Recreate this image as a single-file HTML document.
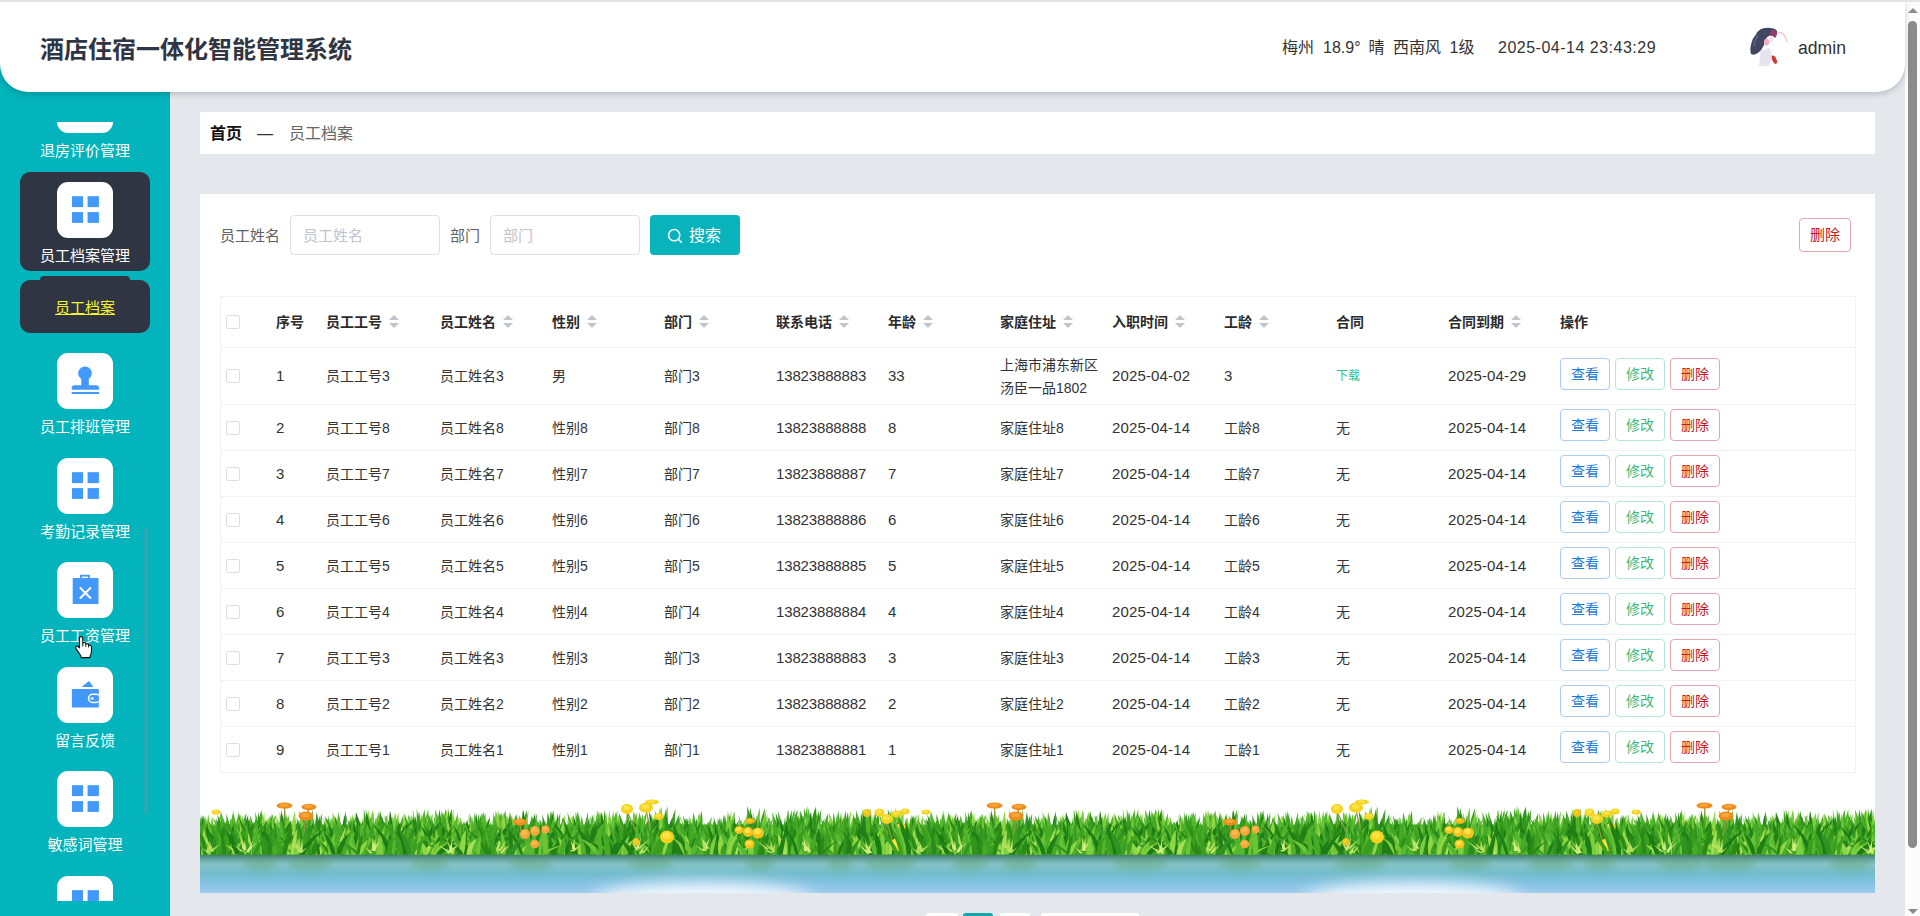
<!DOCTYPE html>
<html lang="zh-CN">
<head>
<meta charset="utf-8">
<title>酒店住宿一体化智能管理系统</title>
<style>
*{box-sizing:border-box;margin:0;padding:0}
html,body{width:1920px;height:916px;overflow:hidden}
body{position:relative;background:#e4e8ec;font-family:"Liberation Sans","Noto Sans CJK SC",sans-serif;color:#333;font-size:14px}
.abs{position:absolute}
/* top line */
#topline{left:0;top:0;width:1920px;height:2px;background:#e3e3e3;z-index:6}
/* scrollbar */
#sbar{left:1905px;top:2px;width:15px;height:914px;background:#fcfcfc}
#sbar .thumb{position:absolute;left:3px;top:19px;width:9px;height:827px;border-radius:5px;background:#8b8b8b}
#sbar .up{position:absolute;left:3px;top:6px;width:0;height:0;border-left:5px solid transparent;border-right:5px solid transparent;border-bottom:5px solid #8b8b8b}
#sbar .down{position:absolute;left:3px;top:907px;width:0;height:0;border-left:5px solid transparent;border-right:5px solid transparent;border-top:5px solid #8b8b8b}
/* header */
#header{left:0;top:2px;width:1905px;height:90px;background:#fff;border-radius:0 0 28px 28px;box-shadow:0 2px 6px rgba(0,0,0,.2);z-index:5}
#title{left:40px;top:32px;font-size:24px;font-weight:bold;color:#2f3542;line-height:32px;white-space:nowrap;letter-spacing:0}
#weather{left:0;top:35px;font-size:16px;line-height:22px;color:#333;white-space:pre}
#clock{left:1498px;top:35px;letter-spacing:.5px;font-size:16px;line-height:22px;color:#333;white-space:pre}
#uname{left:1798px;top:35px;font-size:17.6px;line-height:22px;color:#333}
#avatar{left:1746px;top:24px;width:42px;height:42px}
/* sidebar */
#side{left:0;top:0;width:170px;height:916px;background:#03b4bc;z-index:1}
#sideclip{left:0;top:122px;width:170px;height:779px;overflow:hidden}
.ibox{position:absolute;left:57px;width:56px;height:56px;border-radius:11px;background:#fff}
.ilab{position:absolute;left:0;width:170px;text-align:center;font-size:15px;line-height:20px;color:#fff;white-space:nowrap}
.dark{position:absolute;left:20px;width:130px;background:#2f3542;border-radius:10px}
#sidescroll{left:143.5px;top:527px;width:4.5px;height:288px;background:rgba(144,147,153,.3);border-radius:3px}
/* main */
#crumb{left:200px;top:112px;width:1675px;height:42px;background:#fff}
#crumb span{position:absolute;top:11px;line-height:22px;font-size:16px;white-space:nowrap}
#card{left:200px;top:194px;width:1675px;height:699px;background:#fff;overflow:hidden}
.flab{position:absolute;top:32px;font-size:15px;line-height:20px;color:#606266;white-space:nowrap}
.finp{position:absolute;top:21px;width:150px;height:40px;border:1px solid #dddfe4;border-radius:4px;background:#fff;padding-left:12px;font-size:15px;line-height:40px;color:#c0c4cc}
#sbtn{left:450px;top:21px;width:90px;height:40px;border-radius:4px;background:#08b3bb;color:#fff;font-size:16px;line-height:42px}
#delbtn{left:1599px;top:24px;width:52px;height:34px;border:1px solid #e3a6ad;border-radius:4px;color:#c5161d;font-size:15px;line-height:31px;text-align:center;background:#fff}
/* table */
#tbl{left:20px;top:102px;width:1636px;height:477px;border:1px solid #f1f2f5;border-right:1px solid #f1f2f5}
.tr{position:absolute;left:0;width:1634px;border-bottom:1px solid #f1f2f5}
.tr span{position:absolute;white-space:nowrap;font-size:14px;line-height:23px;color:#333}
.th span{font-weight:bold;color:#2b2b2b}
.cb{position:absolute;left:5px;width:14px;height:14px;border:1px solid #dcdfe6;border-radius:2px;background:#fff}
.btn{position:absolute;width:50px;height:32px;border:1px solid;border-radius:4px;font-size:14px;line-height:30px;text-align:center;background:#fff}
.b1{left:1339px;color:#1b7ad6;border-color:#a9cdf3}
.b2{left:1394px;color:#3eb87f;border-color:#b5e6de}
.b3{left:1449px;color:#c5161d;border-color:#e3a6ad}
.sort{position:absolute;width:10px;height:14px}
.sort:before,.sort:after{content:"";position:absolute;left:0;width:0;height:0;border-left:5px solid transparent;border-right:5px solid transparent}
.sort:before{top:0;border-bottom:5px solid #c0c4cc}
.sort:after{top:8px;border-top:5px solid #c0c4cc}
/* pagination */
.pg{position:absolute;top:913px;height:3px;background:#fff;border-radius:3px 3px 0 0}
</style>
</head>
<body>
<div id="topline" class="abs"></div>
<div id="sbar" class="abs"><div class="up"></div><div class="thumb"></div><div class="down"></div></div>

<div id="header" class="abs">
  <div id="title" class="abs">酒店住宿一体化智能管理系统</div>
  <div id="weather" class="abs"><span style="position:absolute;left:1282px">梅州</span><span style="position:absolute;left:1323px">18.9°</span><span style="position:absolute;left:1368.5px">晴</span><span style="position:absolute;left:1393px">西南风</span><span style="position:absolute;left:1449.5px">1级</span></div>
  <div id="clock" class="abs">2025-04-14 23:43:29</div>
  <div id="avatar" class="abs"><svg class="abs" style="left:-16px;top:-11px" width="80" height="65" viewBox="0 0 80 65"><defs><filter id="avb" x="-20%" y="-20%" width="140%" height="140%"><feGaussianBlur stdDeviation="0.6"/></filter></defs><g filter="url(#avb)" opacity="0.9"><path d="M30.5 35.5 L39.7 33 L43 42.6 L38.5 51 L29 51 Z" fill="#e4e2ee"/><path d="M30.5 14.2 Q36.9 11.8 43.3 13.5 Q47.5 15 47.2 17.5 Q46.5 21 45 22.5 Q42 20 39.7 20.6 Q36.5 22 35.5 24.8 Q35 28.5 33.4 31.2 Q31.5 35 29.1 36.9 Q26 39.5 23.4 39.7 Q20.5 39.5 20.6 37.6 Q19.8 32.5 21.3 28.4 Q22.5 23 25.6 19.9 Q27.5 16 30.5 14.2 Z" fill="#2e3152"/><path d="M41 15 Q45.5 14.5 47 17.5 Q46.5 21.5 45 23 Q43 19.5 39.8 20.4 Z" fill="#8c2c62"/><ellipse cx="36.5" cy="27.2" rx="2.6" ry="3.4" fill="#f3a4c4"/><ellipse cx="41.2" cy="24.5" rx="2.2" ry="3" fill="#fbe3ea"/><path d="M48 18 Q52 16.5 54.5 20.5 Q56 24 57 27" stroke="#f3b9cb" stroke-width="1.2" fill="none"/><path d="M28 20 Q24.5 25 24 31" stroke="#5a6690" stroke-width="1" fill="none"/><ellipse cx="44.4" cy="44.7" rx="2.1" ry="4.4" transform="rotate(-22 44.4 44.7)" fill="#c62828"/></g></svg></div>
  <div id="uname" class="abs">admin</div>
</div>

<div id="side" class="abs">
  <div id="sideclip" class="abs">
  <div class="ibox" style="top:-45px"><svg class="abs" style="left:0;top:0" width="56" height="56" viewBox="0 0 56 56"><rect x="15" y="14.2" width="11" height="10.9" fill="#4398fb"/><rect x="30.6" y="14.2" width="11.3" height="10.9" fill="#4398fb"/><rect x="15" y="30.1" width="11" height="10.8" fill="#4398fb"/><rect x="30.6" y="30.1" width="11.3" height="10.8" fill="#4398fb"/></svg></div><div class="ilab" style="top:19px">退房评价管理</div>
<div class="dark" style="top:50px;height:99px"></div>
<div class="ibox" style="top:60px"><svg class="abs" style="left:0;top:0" width="56" height="56" viewBox="0 0 56 56"><rect x="15" y="14.2" width="11" height="10.9" fill="#4398fb"/><rect x="30.6" y="14.2" width="11.3" height="10.9" fill="#4398fb"/><rect x="15" y="30.1" width="11" height="10.8" fill="#4398fb"/><rect x="30.6" y="30.1" width="11.3" height="10.8" fill="#4398fb"/></svg></div><div class="ilab" style="top:124px">员工档案管理</div>
<div class="dark" style="top:154px;left:40px;width:90px;height:12px;border-radius:4px"></div>
<div class="dark" style="top:158px;height:53px"></div>
<div class="ilab" style="top:176px;color:#f5f52a;text-decoration:underline">员工档案</div>
<div class="ibox" style="top:231px"><svg class="abs" style="left:0;top:0" width="56" height="56" viewBox="0 0 56 56"><circle cx="28" cy="20.3" r="6.8" fill="#4398fb"/><rect x="24.3" y="24" width="7.5" height="9" fill="#4398fb"/><path d="M14.7 36.7 L14.7 35.3 Q14.7 32.3 17.7 32.3 L39 32.3 Q42 32.3 42 35.3 L42 36.7 Z" fill="#4398fb"/><rect x="14.7" y="39" width="27.3" height="2" fill="#4398fb"/></svg></div>
<div class="ilab" style="top:295px">员工排班管理</div>
<div class="ibox" style="top:336px"><svg class="abs" style="left:0;top:0" width="56" height="56" viewBox="0 0 56 56"><rect x="15" y="14.2" width="11" height="10.9" fill="#4398fb"/><rect x="30.6" y="14.2" width="11.3" height="10.9" fill="#4398fb"/><rect x="15" y="30.1" width="11" height="10.8" fill="#4398fb"/><rect x="30.6" y="30.1" width="11.3" height="10.8" fill="#4398fb"/></svg></div>
<div class="ilab" style="top:400px">考勤记录管理</div>
<div class="ibox" style="top:440px"><svg class="abs" style="left:0;top:0" width="56" height="56" viewBox="0 0 56 56"><rect x="15.7" y="16" width="25.8" height="26" fill="#4398fb"/><rect x="23" y="12.7" width="10" height="4.5" rx="0.8" fill="#4398fb"/><rect x="24.8" y="14.6" width="6.4" height="1.4" fill="#fff"/><path d="M22.9 25.5 L33.9 36.5 M33.9 25.5 L22.9 36.5" stroke="#fff" stroke-width="2" fill="none"/></svg></div>
<div class="ilab" style="top:504px">员工工资管理</div>
<div class="ibox" style="top:545px"><svg class="abs" style="left:0;top:0" width="56" height="56" viewBox="0 0 56 56"><path d="M24.5 20 L32 14 L36.5 20 Z" fill="#4398fb"/><rect x="14.9" y="22" width="27" height="18.5" fill="#4398fb"/><rect x="30.8" y="26.6" width="13" height="9.6" rx="4.8" fill="#fff"/><rect x="32.4" y="28.1" width="10" height="6.6" rx="3.3" fill="#4398fb"/><rect x="41.9" y="22" width="3" height="18.5" fill="#fff"/><ellipse cx="35.2" cy="31.4" rx="1.6" ry="1.2" fill="#fff"/></svg></div>
<div class="ilab" style="top:609px">留言反馈</div>
<div class="ibox" style="top:649px"><svg class="abs" style="left:0;top:0" width="56" height="56" viewBox="0 0 56 56"><rect x="15" y="14.2" width="11" height="10.9" fill="#4398fb"/><rect x="30.6" y="14.2" width="11.3" height="10.9" fill="#4398fb"/><rect x="15" y="30.1" width="11" height="10.8" fill="#4398fb"/><rect x="30.6" y="30.1" width="11.3" height="10.8" fill="#4398fb"/></svg></div>
<div class="ilab" style="top:713px">敏感词管理</div>
<div class="ibox" style="top:754px"><svg class="abs" style="left:0;top:0" width="56" height="56" viewBox="0 0 56 56"><rect x="15" y="14.2" width="11" height="10.9" fill="#4398fb"/><rect x="30.6" y="14.2" width="11.3" height="10.9" fill="#4398fb"/><rect x="15" y="30.1" width="11" height="10.8" fill="#4398fb"/><rect x="30.6" y="30.1" width="11.3" height="10.8" fill="#4398fb"/></svg></div>
  </div>
  <div id="sidescroll" class="abs"></div>
</div>

<div id="crumb" class="abs">
  <span style="left:10px;font-weight:bold;color:#111">首页</span>
  <span style="left:57px;color:#333">—</span>
  <span style="left:89px;color:#666">员工档案</span>
</div>

<div id="card" class="abs">
  <div class="flab" style="left:20px">员工姓名</div>
  <div class="finp" style="left:90px">员工姓名</div>
  <div class="flab" style="left:250px">部门</div>
  <div class="finp" style="left:290px">部门</div>
  <div id="sbtn" class="abs"><svg class="abs" style="left:17px;top:13px" width="16" height="16" viewBox="0 0 16 16"><circle cx="7.2" cy="7.2" r="5.6" fill="none" stroke="#fff" stroke-width="1.5"/><path d="M11.3 11.3 L14.8 14.8" stroke="#fff" stroke-width="1.6"/></svg><span style="position:absolute;left:39px;top:0">搜索</span></div>
  <div id="delbtn" class="abs">删除</div>
  <div id="tbl" class="abs">
  <div class="tr th" style="top:0;height:51px"><i class="cb" style="top:18px"></i><span style="left:55px;top:14px">序号</span><span style="left:105px;top:14px">员工工号</span><i class="sort" style="left:168px;top:18px"></i><span style="left:219px;top:14px">员工姓名</span><i class="sort" style="left:282px;top:18px"></i><span style="left:331px;top:14px">性别</span><i class="sort" style="left:366px;top:18px"></i><span style="left:443px;top:14px">部门</span><i class="sort" style="left:478px;top:18px"></i><span style="left:555px;top:14px">联系电话</span><i class="sort" style="left:618px;top:18px"></i><span style="left:667px;top:14px">年龄</span><i class="sort" style="left:702px;top:18px"></i><span style="left:779px;top:14px">家庭住址</span><i class="sort" style="left:842px;top:18px"></i><span style="left:891px;top:14px">入职时间</span><i class="sort" style="left:954px;top:18px"></i><span style="left:1003px;top:14px">工龄</span><i class="sort" style="left:1038px;top:18px"></i><span style="left:1115px;top:14px">合同</span><span style="left:1227px;top:14px">合同到期</span><i class="sort" style="left:1290px;top:18px"></i><span style="left:1339px;top:14px">操作</span></div>
<div class="tr" style="top:51px;height:57px"><i class="cb" style="top:21px"></i><span style="left:55px;top:17px;font-size:15px;letter-spacing:0;margin-top:-1px">1</span><span style="left:105px;top:17px">员工工号3</span><span style="left:219px;top:17px">员工姓名3</span><span style="left:331px;top:17px">男</span><span style="left:443px;top:17px">部门3</span><span style="left:555px;top:17px;font-size:15px;letter-spacing:-0.15px;margin-top:-1px">13823888883</span><span style="left:667px;top:17px;font-size:15px;letter-spacing:0;margin-top:-1px">33</span><span style="left:779px;top:6px;line-height:23px">上海市浦东新区<br>汤臣一品1802</span><span style="left:891px;top:17px;font-size:15px;letter-spacing:0.15px;margin-top:-1px">2025-04-02</span><span style="left:1003px;top:17px;font-size:15px;letter-spacing:0;margin-top:-1px">3</span><span style="left:1115px;top:17px;color:#2fbf98;font-size:12px">下载</span><span style="left:1227px;top:17px;font-size:15px;letter-spacing:0.15px;margin-top:-1px">2025-04-29</span><b class="btn b1" style="top:10px;font-weight:normal">查看</b><b class="btn b2" style="top:10px;font-weight:normal">修改</b><b class="btn b3" style="top:10px;font-weight:normal">删除</b></div>
<div class="tr" style="top:108px;height:46px"><i class="cb" style="top:16px"></i><span style="left:55px;top:12px;font-size:15px;letter-spacing:0;margin-top:-1px">2</span><span style="left:105px;top:12px">员工工号8</span><span style="left:219px;top:12px">员工姓名8</span><span style="left:331px;top:12px">性别8</span><span style="left:443px;top:12px">部门8</span><span style="left:555px;top:12px;font-size:15px;letter-spacing:-0.15px;margin-top:-1px">13823888888</span><span style="left:667px;top:12px;font-size:15px;letter-spacing:0;margin-top:-1px">8</span><span style="left:779px;top:12px">家庭住址8</span><span style="left:891px;top:12px;font-size:15px;letter-spacing:0.15px;margin-top:-1px">2025-04-14</span><span style="left:1003px;top:12px">工龄8</span><span style="left:1115px;top:12px">无</span><span style="left:1227px;top:12px;font-size:15px;letter-spacing:0.15px;margin-top:-1px">2025-04-14</span><b class="btn b1" style="top:4px;font-weight:normal">查看</b><b class="btn b2" style="top:4px;font-weight:normal">修改</b><b class="btn b3" style="top:4px;font-weight:normal">删除</b></div>
<div class="tr" style="top:154px;height:46px"><i class="cb" style="top:16px"></i><span style="left:55px;top:12px;font-size:15px;letter-spacing:0;margin-top:-1px">3</span><span style="left:105px;top:12px">员工工号7</span><span style="left:219px;top:12px">员工姓名7</span><span style="left:331px;top:12px">性别7</span><span style="left:443px;top:12px">部门7</span><span style="left:555px;top:12px;font-size:15px;letter-spacing:-0.15px;margin-top:-1px">13823888887</span><span style="left:667px;top:12px;font-size:15px;letter-spacing:0;margin-top:-1px">7</span><span style="left:779px;top:12px">家庭住址7</span><span style="left:891px;top:12px;font-size:15px;letter-spacing:0.15px;margin-top:-1px">2025-04-14</span><span style="left:1003px;top:12px">工龄7</span><span style="left:1115px;top:12px">无</span><span style="left:1227px;top:12px;font-size:15px;letter-spacing:0.15px;margin-top:-1px">2025-04-14</span><b class="btn b1" style="top:4px;font-weight:normal">查看</b><b class="btn b2" style="top:4px;font-weight:normal">修改</b><b class="btn b3" style="top:4px;font-weight:normal">删除</b></div>
<div class="tr" style="top:200px;height:46px"><i class="cb" style="top:16px"></i><span style="left:55px;top:12px;font-size:15px;letter-spacing:0;margin-top:-1px">4</span><span style="left:105px;top:12px">员工工号6</span><span style="left:219px;top:12px">员工姓名6</span><span style="left:331px;top:12px">性别6</span><span style="left:443px;top:12px">部门6</span><span style="left:555px;top:12px;font-size:15px;letter-spacing:-0.15px;margin-top:-1px">13823888886</span><span style="left:667px;top:12px;font-size:15px;letter-spacing:0;margin-top:-1px">6</span><span style="left:779px;top:12px">家庭住址6</span><span style="left:891px;top:12px;font-size:15px;letter-spacing:0.15px;margin-top:-1px">2025-04-14</span><span style="left:1003px;top:12px">工龄6</span><span style="left:1115px;top:12px">无</span><span style="left:1227px;top:12px;font-size:15px;letter-spacing:0.15px;margin-top:-1px">2025-04-14</span><b class="btn b1" style="top:4px;font-weight:normal">查看</b><b class="btn b2" style="top:4px;font-weight:normal">修改</b><b class="btn b3" style="top:4px;font-weight:normal">删除</b></div>
<div class="tr" style="top:246px;height:46px"><i class="cb" style="top:16px"></i><span style="left:55px;top:12px;font-size:15px;letter-spacing:0;margin-top:-1px">5</span><span style="left:105px;top:12px">员工工号5</span><span style="left:219px;top:12px">员工姓名5</span><span style="left:331px;top:12px">性别5</span><span style="left:443px;top:12px">部门5</span><span style="left:555px;top:12px;font-size:15px;letter-spacing:-0.15px;margin-top:-1px">13823888885</span><span style="left:667px;top:12px;font-size:15px;letter-spacing:0;margin-top:-1px">5</span><span style="left:779px;top:12px">家庭住址5</span><span style="left:891px;top:12px;font-size:15px;letter-spacing:0.15px;margin-top:-1px">2025-04-14</span><span style="left:1003px;top:12px">工龄5</span><span style="left:1115px;top:12px">无</span><span style="left:1227px;top:12px;font-size:15px;letter-spacing:0.15px;margin-top:-1px">2025-04-14</span><b class="btn b1" style="top:4px;font-weight:normal">查看</b><b class="btn b2" style="top:4px;font-weight:normal">修改</b><b class="btn b3" style="top:4px;font-weight:normal">删除</b></div>
<div class="tr" style="top:292px;height:46px"><i class="cb" style="top:16px"></i><span style="left:55px;top:12px;font-size:15px;letter-spacing:0;margin-top:-1px">6</span><span style="left:105px;top:12px">员工工号4</span><span style="left:219px;top:12px">员工姓名4</span><span style="left:331px;top:12px">性别4</span><span style="left:443px;top:12px">部门4</span><span style="left:555px;top:12px;font-size:15px;letter-spacing:-0.15px;margin-top:-1px">13823888884</span><span style="left:667px;top:12px;font-size:15px;letter-spacing:0;margin-top:-1px">4</span><span style="left:779px;top:12px">家庭住址4</span><span style="left:891px;top:12px;font-size:15px;letter-spacing:0.15px;margin-top:-1px">2025-04-14</span><span style="left:1003px;top:12px">工龄4</span><span style="left:1115px;top:12px">无</span><span style="left:1227px;top:12px;font-size:15px;letter-spacing:0.15px;margin-top:-1px">2025-04-14</span><b class="btn b1" style="top:4px;font-weight:normal">查看</b><b class="btn b2" style="top:4px;font-weight:normal">修改</b><b class="btn b3" style="top:4px;font-weight:normal">删除</b></div>
<div class="tr" style="top:338px;height:46px"><i class="cb" style="top:16px"></i><span style="left:55px;top:12px;font-size:15px;letter-spacing:0;margin-top:-1px">7</span><span style="left:105px;top:12px">员工工号3</span><span style="left:219px;top:12px">员工姓名3</span><span style="left:331px;top:12px">性别3</span><span style="left:443px;top:12px">部门3</span><span style="left:555px;top:12px;font-size:15px;letter-spacing:-0.15px;margin-top:-1px">13823888883</span><span style="left:667px;top:12px;font-size:15px;letter-spacing:0;margin-top:-1px">3</span><span style="left:779px;top:12px">家庭住址3</span><span style="left:891px;top:12px;font-size:15px;letter-spacing:0.15px;margin-top:-1px">2025-04-14</span><span style="left:1003px;top:12px">工龄3</span><span style="left:1115px;top:12px">无</span><span style="left:1227px;top:12px;font-size:15px;letter-spacing:0.15px;margin-top:-1px">2025-04-14</span><b class="btn b1" style="top:4px;font-weight:normal">查看</b><b class="btn b2" style="top:4px;font-weight:normal">修改</b><b class="btn b3" style="top:4px;font-weight:normal">删除</b></div>
<div class="tr" style="top:384px;height:46px"><i class="cb" style="top:16px"></i><span style="left:55px;top:12px;font-size:15px;letter-spacing:0;margin-top:-1px">8</span><span style="left:105px;top:12px">员工工号2</span><span style="left:219px;top:12px">员工姓名2</span><span style="left:331px;top:12px">性别2</span><span style="left:443px;top:12px">部门2</span><span style="left:555px;top:12px;font-size:15px;letter-spacing:-0.15px;margin-top:-1px">13823888882</span><span style="left:667px;top:12px;font-size:15px;letter-spacing:0;margin-top:-1px">2</span><span style="left:779px;top:12px">家庭住址2</span><span style="left:891px;top:12px;font-size:15px;letter-spacing:0.15px;margin-top:-1px">2025-04-14</span><span style="left:1003px;top:12px">工龄2</span><span style="left:1115px;top:12px">无</span><span style="left:1227px;top:12px;font-size:15px;letter-spacing:0.15px;margin-top:-1px">2025-04-14</span><b class="btn b1" style="top:4px;font-weight:normal">查看</b><b class="btn b2" style="top:4px;font-weight:normal">修改</b><b class="btn b3" style="top:4px;font-weight:normal">删除</b></div>
<div class="tr" style="top:430px;height:46px"><i class="cb" style="top:16px"></i><span style="left:55px;top:12px;font-size:15px;letter-spacing:0;margin-top:-1px">9</span><span style="left:105px;top:12px">员工工号1</span><span style="left:219px;top:12px">员工姓名1</span><span style="left:331px;top:12px">性别1</span><span style="left:443px;top:12px">部门1</span><span style="left:555px;top:12px;font-size:15px;letter-spacing:-0.15px;margin-top:-1px">13823888881</span><span style="left:667px;top:12px;font-size:15px;letter-spacing:0;margin-top:-1px">1</span><span style="left:779px;top:12px">家庭住址1</span><span style="left:891px;top:12px;font-size:15px;letter-spacing:0.15px;margin-top:-1px">2025-04-14</span><span style="left:1003px;top:12px">工龄1</span><span style="left:1115px;top:12px">无</span><span style="left:1227px;top:12px;font-size:15px;letter-spacing:0.15px;margin-top:-1px">2025-04-14</span><b class="btn b1" style="top:4px;font-weight:normal">查看</b><b class="btn b2" style="top:4px;font-weight:normal">修改</b><b class="btn b3" style="top:4px;font-weight:normal">删除</b></div>
  </div>
  <svg class="abs" style="left:0;top:0" width="1675" height="699" viewBox="0 0 1675 699"><defs><linearGradient id="gbase" x1="0" y1="0" x2="0" y2="1"><stop offset="0" stop-color="#4aaa28"/><stop offset="1" stop-color="#2d861a"/></linearGradient><linearGradient id="gwater" x1="0" y1="0" x2="0" y2="1"><stop offset="0" stop-color="#4d8f88"/><stop offset="0.08" stop-color="#78b6b2"/><stop offset="0.28" stop-color="#84c4c8"/><stop offset="0.5" stop-color="#72bccc"/><stop offset="0.75" stop-color="#84c2e2"/><stop offset="1" stop-color="#9ccbee"/></linearGradient><filter id="gblur" x="-2%" y="-10%" width="104%" height="120%"><feGaussianBlur stdDeviation="0.45"/></filter><filter id="wglow" x="-10%" y="-150%" width="120%" height="400%"><feGaussianBlur stdDeviation="11 8"/></filter><filter id="wblur" x="-5%" y="-50%" width="110%" height="200%"><feGaussianBlur stdDeviation="3"/></filter><g id="gtile"><rect x="0" y="630.5" width="710" height="30" fill="url(#gbase)"/><path d="M6.2 660.5Q4.7 638.3 8.3 620.1Q11.7 638.3 10.1 660.5Z" fill="#6cc436"/><path d="M15.1 660.5Q16.1 641.2 27.5 625.5Q23.1 641.2 18.9 660.5Z" fill="#8fd644"/><path d="M0.3 660.5Q-2.5 640.2 -3.0 623.7Q4.3 640.2 4.1 660.5Z" fill="#8fd644"/><path d="M-0.2 660.5Q-2.3 641.2 0.2 625.3Q5.2 641.2 3.9 660.5Z" fill="#45aa26"/><path d="M-5.3 660.5Q-9.0 638.6 -11.6 620.6Q-1.7 638.6 -1.2 660.5Z" fill="#55b830"/><path d="M2.0 660.5Q0.2 638.8 0.9 621.0Q5.4 638.8 4.9 660.5Z" fill="#6cc436"/><path d="M-9.6 660.5Q-14.0 641.8 -20.1 626.5Q-8.1 641.8 -6.4 660.5Z" fill="#6cc436"/><path d="M-5.4 660.5Q-9.3 641.0 -12.1 625.1Q-1.6 641.0 -1.1 660.5Z" fill="#55b830"/><path d="M3.6 660.5Q2.2 639.0 4.0 621.4Q7.5 639.0 6.6 660.5Z" fill="#45aa26"/><path d="M-2.0 660.5Q-4.7 640.9 -4.4 624.8Q2.6 640.9 2.1 660.5Z" fill="#7ccf3c"/><path d="M3.3 660.5Q2.1 639.2 5.9 621.7Q8.7 639.2 7.0 660.5Z" fill="#7ccf3c"/><path d="M7.0 660.5Q6.5 640.6 12.5 624.3Q12.9 640.6 10.5 660.5Z" fill="#2f9320"/><path d="M7.0 660.5Q6.5 641.2 12.8 625.4Q13.2 641.2 10.7 660.5Z" fill="#2f9320"/><path d="M-4.0 660.5Q-8.1 640.4 -11.1 624.0Q-0.3 640.4 0.3 660.5Z" fill="#237f16"/><path d="M13.5 660.5Q15.8 641.0 28.4 625.0Q20.9 641.0 16.4 660.5Z" fill="#2f9320"/><path d="M4.8 660.5Q3.7 641.0 6.3 625.0Q8.7 641.0 7.6 660.5Z" fill="#6cc436"/><path d="M1.9 660.5Q-0.1 640.7 1.1 624.6Q5.9 640.7 5.2 660.5Z" fill="#55b830"/><path d="M14.1 660.5Q14.8 641.0 22.5 625.0Q19.8 641.0 16.9 660.5Z" fill="#45aa26"/><path d="M4.0 660.5Q1.4 638.8 1.8 621.1Q8.5 638.8 8.0 660.5Z" fill="#237f16"/><path d="M2.3 660.5Q0.3 639.7 0.3 622.7Q5.6 639.7 5.3 660.5Z" fill="#3c9d1f"/><path d="M7.9 660.5Q6.3 640.9 7.9 625.0Q11.8 640.9 11.0 660.5Z" fill="#7ccf3c"/><path d="M4.0 660.5Q2.1 638.6 3.5 620.7Q8.1 638.6 7.3 660.5Z" fill="#3aa022"/><path d="M12.6 660.5Q12.3 638.0 20.9 619.6Q20.5 638.0 17.2 660.5Z" fill="#6cc436"/><path d="M7.8 660.5Q7.3 639.2 12.6 621.7Q13.2 639.2 11.1 660.5Z" fill="#8fd644"/><path d="M30.8 660.5Q28.5 640.1 30.1 623.4Q36.0 640.1 35.0 660.5Z" fill="#6cc436"/><path d="M23.0 660.5Q19.6 638.6 17.4 620.6Q26.5 638.6 26.8 660.5Z" fill="#2f9320"/><path d="M39.1 660.5Q38.7 637.3 46.3 618.4Q46.3 637.3 43.3 660.5Z" fill="#3c9d1f"/><path d="M36.6 660.5Q36.1 638.8 43.3 621.0Q43.6 638.8 40.8 660.5Z" fill="#6cc436"/><path d="M30.2 660.5Q29.0 640.4 34.6 624.0Q36.9 640.4 34.6 660.5Z" fill="#6cc436"/><path d="M41.1 660.5Q41.0 638.6 48.3 620.6Q47.5 638.6 44.8 660.5Z" fill="#237f16"/><path d="M34.1 660.5Q33.2 638.2 39.8 619.9Q41.0 638.2 38.4 660.5Z" fill="#4fb22b"/><path d="M29.4 660.5Q26.9 639.2 26.8 621.8Q33.4 639.2 33.1 660.5Z" fill="#237f16"/><path d="M16.9 660.5Q13.2 641.3 7.8 625.6Q18.1 641.3 19.6 660.5Z" fill="#3c9d1f"/><path d="M28.6 660.5Q27.7 638.1 32.8 619.7Q34.4 638.1 32.3 660.5Z" fill="#45aa26"/><path d="M20.1 660.5Q16.9 640.9 14.9 624.9Q23.5 640.9 23.8 660.5Z" fill="#55b830"/><path d="M20.6 660.5Q17.2 640.6 16.3 624.3Q25.3 640.6 25.1 660.5Z" fill="#237f16"/><path d="M33.6 660.5Q32.4 640.6 36.1 624.4Q38.7 640.6 37.1 660.5Z" fill="#45aa26"/><path d="M27.0 660.5Q24.4 640.3 23.1 623.8Q30.1 640.3 30.2 660.5Z" fill="#45aa26"/><path d="M34.9 660.5Q33.8 636.9 38.9 617.6Q40.9 636.9 38.8 660.5Z" fill="#4fb22b"/><path d="M30.8 660.5Q29.5 638.2 34.1 619.9Q36.8 638.2 34.9 660.5Z" fill="#45aa26"/><path d="M22.9 660.5Q20.1 636.4 20.8 616.7Q27.8 636.4 27.2 660.5Z" fill="#4fb22b"/><path d="M23.8 660.5Q19.1 639.9 12.3 623.1Q25.3 639.9 27.3 660.5Z" fill="#6cc436"/><path d="M28.9 660.5Q26.6 638.0 26.3 619.6Q32.3 638.0 32.1 660.5Z" fill="#45aa26"/><path d="M31.1 660.5Q30.0 636.1 33.2 616.1Q35.6 636.1 34.2 660.5Z" fill="#4fb22b"/><path d="M37.7 660.5Q36.1 638.1 40.8 619.7Q44.2 638.1 42.2 660.5Z" fill="#7ccf3c"/><path d="M42.2 660.5Q43.8 640.7 57.2 624.5Q51.0 640.7 46.2 660.5Z" fill="#45aa26"/><path d="M28.0 660.5Q26.8 640.3 32.5 623.7Q34.7 640.3 32.3 660.5Z" fill="#55b830"/><path d="M42.7 660.5Q43.3 639.3 51.1 621.9Q48.3 639.3 45.5 660.5Z" fill="#3c9d1f"/><path d="M66.5 660.5Q67.0 638.5 76.2 620.5Q73.5 638.5 70.1 660.5Z" fill="#3c9d1f"/><path d="M60.2 660.5Q59.4 637.2 64.3 618.1Q65.7 637.2 63.7 660.5Z" fill="#8fd644"/><path d="M64.0 660.5Q63.8 638.3 71.6 620.1Q71.0 638.3 68.0 660.5Z" fill="#4fb22b"/><path d="M66.0 660.5Q65.4 639.9 70.3 623.1Q71.1 639.9 69.2 660.5Z" fill="#3c9d1f"/><path d="M55.8 660.5Q54.2 640.9 56.0 624.9Q59.8 640.9 58.9 660.5Z" fill="#3aa022"/><path d="M54.6 660.5Q54.4 635.9 61.5 615.8Q61.0 635.9 58.3 660.5Z" fill="#3c9d1f"/><path d="M49.7 660.5Q47.6 640.1 47.8 623.3Q53.0 640.1 52.7 660.5Z" fill="#237f16"/><path d="M57.4 660.5Q56.1 636.8 58.3 617.5Q61.3 636.8 60.3 660.5Z" fill="#2f9320"/><path d="M58.5 660.5Q57.6 640.2 61.5 623.6Q63.1 640.2 61.6 660.5Z" fill="#2f9320"/><path d="M62.1 660.5Q61.0 640.8 67.3 624.8Q69.2 640.8 66.7 660.5Z" fill="#4fb22b"/><path d="M53.6 660.5Q52.3 641.3 57.3 625.6Q60.0 641.3 57.9 660.5Z" fill="#237f16"/><path d="M47.2 660.5Q43.5 639.3 38.5 621.9Q48.7 639.3 50.1 660.5Z" fill="#237f16"/><path d="M57.2 660.5Q55.3 636.9 55.4 617.5Q60.1 636.9 59.8 660.5Z" fill="#2f9320"/><path d="M60.3 660.5Q58.6 636.4 61.5 616.6Q65.6 636.4 64.2 660.5Z" fill="#45aa26"/><path d="M61.3 660.5Q61.1 640.2 66.3 623.6Q66.2 640.2 64.1 660.5Z" fill="#8fd644"/><path d="M45.1 660.5Q41.1 641.1 37.5 625.3Q48.3 641.1 49.1 660.5Z" fill="#8fd644"/><path d="M55.2 660.5Q54.0 641.7 59.6 626.3Q62.0 641.7 59.7 660.5Z" fill="#237f16"/><path d="M65.2 660.5Q65.8 639.2 75.2 621.8Q72.2 639.2 68.7 660.5Z" fill="#45aa26"/><path d="M60.3 660.5Q59.3 637.5 62.9 618.8Q64.8 637.5 63.3 660.5Z" fill="#8fd644"/><path d="M47.9 660.5Q44.8 640.7 43.8 624.4Q52.0 640.7 51.9 660.5Z" fill="#3aa022"/><path d="M49.3 660.5Q45.9 639.5 41.9 622.3Q51.1 639.5 52.1 660.5Z" fill="#8fd644"/><path d="M62.5 660.5Q62.3 638.7 69.9 620.9Q69.5 638.7 66.5 660.5Z" fill="#8fd644"/><path d="M53.9 660.5Q52.7 639.3 56.6 621.9Q59.1 639.3 57.4 660.5Z" fill="#45aa26"/><path d="M65.4 660.5Q65.4 639.1 75.0 621.6Q73.6 639.1 69.9 660.5Z" fill="#8fd644"/><path d="M64.4 660.5Q64.2 638.1 72.9 619.7Q72.2 638.1 68.9 660.5Z" fill="#45aa26"/><path d="M51.9 660.5Q49.2 639.1 50.4 621.6Q57.3 639.1 56.4 660.5Z" fill="#4fb22b"/><path d="M81.8 660.5Q79.2 641.1 78.5 625.2Q85.2 641.1 85.1 660.5Z" fill="#8fd644"/><path d="M82.8 660.5Q80.2 636.8 79.5 617.4Q86.4 636.8 86.2 660.5Z" fill="#7ccf3c"/><path d="M83.8 660.5Q82.2 638.8 86.9 621.1Q90.4 638.8 88.4 660.5Z" fill="#2f9320"/><path d="M95.0 660.5Q94.9 641.1 103.3 625.3Q102.4 641.1 99.2 660.5Z" fill="#7ccf3c"/><path d="M97.5 660.5Q97.2 640.6 105.4 624.3Q105.1 640.6 102.0 660.5Z" fill="#237f16"/><path d="M82.9 660.5Q80.6 635.9 81.1 615.7Q87.0 635.9 86.4 660.5Z" fill="#237f16"/><path d="M93.2 660.5Q93.7 640.1 101.9 623.4Q99.5 640.1 96.4 660.5Z" fill="#55b830"/><path d="M80.9 660.5Q78.6 638.8 80.0 621.0Q85.7 638.8 84.9 660.5Z" fill="#45aa26"/><path d="M88.4 660.5Q87.5 640.1 93.8 623.4Q95.4 640.1 92.8 660.5Z" fill="#8fd644"/><path d="M77.2 660.5Q73.7 641.0 71.7 625.0Q81.1 641.0 81.3 660.5Z" fill="#7ccf3c"/><path d="M90.0 660.5Q89.7 641.0 95.6 625.1Q95.6 641.0 93.3 660.5Z" fill="#45aa26"/><path d="M83.2 660.5Q81.9 636.2 84.3 616.4Q87.3 636.2 86.2 660.5Z" fill="#3aa022"/><path d="M86.3 660.5Q84.2 638.6 85.5 620.6Q90.7 638.6 89.9 660.5Z" fill="#7ccf3c"/><path d="M84.5 660.5Q83.7 638.1 89.1 619.8Q90.4 638.1 88.2 660.5Z" fill="#6cc436"/><path d="M93.0 660.5Q93.2 638.4 102.6 620.3Q100.9 638.4 97.4 660.5Z" fill="#3c9d1f"/><path d="M73.0 660.5Q69.2 640.4 67.5 624.0Q77.4 640.4 77.5 660.5Z" fill="#8fd644"/><path d="M94.5 660.5Q94.4 637.1 103.0 618.0Q102.0 637.1 98.7 660.5Z" fill="#8fd644"/><path d="M93.0 660.5Q92.9 641.5 98.9 626.0Q98.2 641.5 95.9 660.5Z" fill="#237f16"/><path d="M90.1 660.5Q89.2 636.3 95.0 616.4Q96.5 636.3 94.1 660.5Z" fill="#8fd644"/><path d="M77.8 660.5Q74.8 638.4 72.0 620.3Q79.9 638.4 80.6 660.5Z" fill="#55b830"/><path d="M75.5 660.5Q72.1 641.7 68.2 626.3Q77.6 641.7 78.5 660.5Z" fill="#2f9320"/><path d="M97.1 660.5Q97.8 637.8 106.6 619.3Q103.5 637.8 100.3 660.5Z" fill="#6cc436"/><path d="M75.8 660.5Q71.5 641.1 65.1 625.2Q77.0 641.1 78.8 660.5Z" fill="#3c9d1f"/><path d="M95.4 660.5Q96.0 638.9 103.7 621.3Q100.9 638.9 98.1 660.5Z" fill="#3c9d1f"/><path d="M78.9 660.5Q76.2 639.4 76.5 622.1Q83.4 639.4 82.9 660.5Z" fill="#7ccf3c"/><path d="M109.9 660.5Q108.0 640.0 111.6 623.1Q115.8 640.0 114.1 660.5Z" fill="#45aa26"/><path d="M116.9 660.5Q118.0 640.7 130.1 624.5Q125.6 640.7 121.1 660.5Z" fill="#3c9d1f"/><path d="M104.9 660.5Q102.6 637.2 101.8 618.1Q107.7 637.2 107.7 660.5Z" fill="#2f9320"/><path d="M105.6 660.5Q103.2 641.1 103.2 625.1Q109.4 641.1 109.0 660.5Z" fill="#3aa022"/><path d="M115.8 660.5Q115.3 639.8 120.3 622.8Q120.8 639.8 118.8 660.5Z" fill="#2f9320"/><path d="M112.8 660.5Q112.0 641.5 116.5 626.0Q118.1 641.5 116.2 660.5Z" fill="#6cc436"/><path d="M108.0 660.5Q103.9 636.0 98.6 616.0Q109.8 636.0 111.2 660.5Z" fill="#4fb22b"/><path d="M105.2 660.5Q102.2 639.6 99.9 622.6Q108.0 639.6 108.4 660.5Z" fill="#7ccf3c"/><path d="M109.9 660.5Q109.0 635.7 112.5 615.3Q114.2 635.7 112.7 660.5Z" fill="#3c9d1f"/><path d="M119.7 660.5Q119.9 641.4 129.7 625.7Q127.9 641.4 124.2 660.5Z" fill="#3c9d1f"/><path d="M104.7 660.5Q102.9 639.7 105.6 622.6Q109.8 639.7 108.5 660.5Z" fill="#3c9d1f"/><path d="M112.4 660.5Q111.3 640.6 113.7 624.3Q116.2 640.6 115.1 660.5Z" fill="#2f9320"/><path d="M107.3 660.5Q105.5 635.9 108.2 615.8Q112.4 635.9 111.1 660.5Z" fill="#55b830"/><path d="M110.9 660.5Q108.6 635.8 108.5 615.6Q114.4 635.8 114.1 660.5Z" fill="#2f9320"/><path d="M121.9 660.5Q122.3 638.6 129.3 620.8Q127.1 638.6 124.5 660.5Z" fill="#3c9d1f"/><path d="M121.2 660.5Q122.2 641.5 133.7 625.9Q129.6 641.5 125.4 660.5Z" fill="#55b830"/><path d="M115.2 660.5Q113.4 637.0 116.8 617.8Q120.9 637.0 119.4 660.5Z" fill="#2f9320"/><path d="M112.2 660.5Q112.0 638.9 120.3 621.2Q119.5 638.9 116.3 660.5Z" fill="#2f9320"/><path d="M116.2 660.5Q116.1 637.6 122.2 618.8Q121.6 637.6 119.3 660.5Z" fill="#45aa26"/><path d="M105.6 660.5Q102.7 639.1 100.4 621.6Q108.0 639.1 108.5 660.5Z" fill="#7ccf3c"/><path d="M100.5 660.5Q97.4 640.1 96.6 623.4Q104.7 640.1 104.6 660.5Z" fill="#45aa26"/><path d="M112.5 660.5Q111.0 640.1 113.0 623.3Q116.7 640.1 115.7 660.5Z" fill="#55b830"/><path d="M110.8 660.5Q109.1 640.2 110.4 623.7Q114.6 640.2 113.9 660.5Z" fill="#4fb22b"/><path d="M107.8 660.5Q107.4 640.9 111.8 624.9Q112.3 640.9 110.5 660.5Z" fill="#55b830"/><path d="M122.2 660.5Q123.4 639.6 133.0 622.5Q128.7 639.6 125.2 660.5Z" fill="#45aa26"/><path d="M110.3 660.5Q108.5 637.7 111.7 619.0Q115.8 637.7 114.3 660.5Z" fill="#6cc436"/><path d="M136.9 660.5Q135.3 641.1 137.0 625.1Q140.9 641.1 140.0 660.5Z" fill="#2f9320"/><path d="M137.4 660.5Q133.9 637.0 132.4 617.8Q141.6 637.0 141.6 660.5Z" fill="#7ccf3c"/><path d="M137.7 660.5Q135.7 640.3 136.0 623.7Q141.1 640.3 140.7 660.5Z" fill="#8fd644"/><path d="M137.0 660.5Q135.0 641.7 136.2 626.3Q141.1 641.7 140.4 660.5Z" fill="#237f16"/><path d="M145.8 660.5Q146.2 638.8 154.5 621.1Q152.3 638.8 149.2 660.5Z" fill="#55b830"/><path d="M133.5 660.5Q130.9 640.9 132.5 624.9Q139.0 640.9 138.0 660.5Z" fill="#55b830"/><path d="M139.8 660.5Q137.3 639.5 135.5 622.3Q142.1 639.5 142.4 660.5Z" fill="#6cc436"/><path d="M134.2 660.5Q130.9 640.2 130.5 623.5Q139.0 640.2 138.6 660.5Z" fill="#7ccf3c"/><path d="M147.2 660.5Q146.8 638.2 152.8 620.0Q152.9 638.2 150.6 660.5Z" fill="#6cc436"/><path d="M142.3 660.5Q140.5 638.7 144.4 620.8Q148.6 638.7 146.8 660.5Z" fill="#237f16"/><path d="M143.8 660.5Q143.9 641.4 150.1 625.8Q149.2 641.4 146.8 660.5Z" fill="#45aa26"/><path d="M147.0 660.5Q147.1 638.5 156.8 620.5Q155.2 638.5 151.5 660.5Z" fill="#3c9d1f"/><path d="M132.7 660.5Q128.5 639.2 124.9 621.7Q136.2 639.2 137.0 660.5Z" fill="#2f9320"/><path d="M126.5 660.5Q123.5 641.6 120.6 626.2Q128.8 641.6 129.5 660.5Z" fill="#3c9d1f"/><path d="M140.5 660.5Q140.5 636.4 146.1 616.6Q145.3 636.4 143.2 660.5Z" fill="#237f16"/><path d="M147.0 660.5Q146.2 639.1 150.7 621.5Q152.0 639.1 150.2 660.5Z" fill="#7ccf3c"/><path d="M131.3 660.5Q127.9 640.0 124.5 623.2Q133.7 640.0 134.5 660.5Z" fill="#7ccf3c"/><path d="M137.6 660.5Q136.3 639.8 139.3 622.8Q142.3 639.8 141.0 660.5Z" fill="#237f16"/><path d="M138.1 660.5Q136.4 638.2 138.8 620.0Q142.8 638.2 141.7 660.5Z" fill="#3c9d1f"/><path d="M128.3 660.5Q124.8 640.1 123.2 623.4Q132.5 640.1 132.6 660.5Z" fill="#8fd644"/><path d="M137.4 660.5Q135.7 640.0 137.7 623.2Q141.7 640.0 140.7 660.5Z" fill="#8fd644"/><path d="M138.7 660.5Q136.3 638.9 134.6 621.2Q141.2 638.9 141.4 660.5Z" fill="#237f16"/><path d="M150.0 660.5Q150.3 639.5 156.5 622.4Q155.0 639.5 152.7 660.5Z" fill="#45aa26"/><path d="M138.6 660.5Q136.4 636.8 138.0 617.4Q143.3 636.8 142.4 660.5Z" fill="#55b830"/><path d="M139.1 660.5Q139.1 639.1 147.1 621.5Q145.9 639.1 142.9 660.5Z" fill="#2f9320"/><path d="M135.4 660.5Q132.9 640.5 132.2 624.1Q138.9 640.5 138.8 660.5Z" fill="#55b830"/><path d="M147.8 660.5Q148.4 639.6 157.4 622.4Q154.4 639.6 151.1 660.5Z" fill="#8fd644"/><path d="M175.9 660.5Q175.3 640.7 180.8 624.6Q181.4 640.7 179.2 660.5Z" fill="#6cc436"/><path d="M160.1 660.5Q157.0 637.7 155.4 619.0Q163.3 637.7 163.5 660.5Z" fill="#4fb22b"/><path d="M165.8 660.5Q163.2 640.0 162.2 623.3Q168.9 640.0 169.0 660.5Z" fill="#7ccf3c"/><path d="M166.2 660.5Q164.6 641.5 166.7 625.9Q170.5 641.5 169.5 660.5Z" fill="#45aa26"/><path d="M156.9 660.5Q153.6 641.3 150.3 625.6Q159.3 641.3 160.1 660.5Z" fill="#4fb22b"/><path d="M170.8 660.5Q171.2 638.6 178.2 620.6Q176.3 638.6 173.7 660.5Z" fill="#3c9d1f"/><path d="M165.0 660.5Q162.7 641.2 162.0 625.3Q167.9 641.2 167.9 660.5Z" fill="#55b830"/><path d="M175.9 660.5Q175.5 639.6 182.4 622.5Q182.4 639.6 179.7 660.5Z" fill="#237f16"/><path d="M166.9 660.5Q165.2 635.4 165.9 614.9Q170.1 635.4 169.6 660.5Z" fill="#237f16"/><path d="M172.1 660.5Q171.4 641.0 178.6 625.1Q179.3 641.0 176.5 660.5Z" fill="#45aa26"/><path d="M178.2 660.5Q179.1 638.4 187.9 620.3Q184.3 638.4 181.1 660.5Z" fill="#3c9d1f"/><path d="M155.1 660.5Q151.3 640.9 147.3 624.9Q157.5 640.9 158.5 660.5Z" fill="#2f9320"/><path d="M170.9 660.5Q170.9 639.7 176.6 622.7Q175.8 639.7 173.6 660.5Z" fill="#8fd644"/><path d="M166.6 660.5Q164.9 635.8 168.3 615.6Q172.3 635.8 170.7 660.5Z" fill="#8fd644"/><path d="M167.1 660.5Q165.7 639.2 170.1 621.8Q173.1 639.2 171.2 660.5Z" fill="#55b830"/><path d="M165.6 660.5Q163.4 637.8 164.2 619.3Q169.7 637.8 169.0 660.5Z" fill="#237f16"/><path d="M173.7 660.5Q173.2 636.6 180.8 617.1Q181.1 636.6 178.1 660.5Z" fill="#45aa26"/><path d="M168.4 660.5Q167.3 639.7 170.5 622.8Q172.9 639.7 171.5 660.5Z" fill="#3c9d1f"/><path d="M160.0 660.5Q156.6 637.0 155.8 617.7Q164.6 637.0 164.4 660.5Z" fill="#237f16"/><path d="M172.8 660.5Q172.1 636.5 178.8 616.9Q179.6 636.5 177.0 660.5Z" fill="#7ccf3c"/><path d="M165.0 660.5Q163.2 635.5 163.9 615.1Q168.4 635.5 167.9 660.5Z" fill="#3aa022"/><path d="M169.4 660.5Q168.3 637.0 173.3 617.7Q175.3 637.0 173.3 660.5Z" fill="#45aa26"/><path d="M167.0 660.5Q165.4 637.5 167.5 618.7Q171.4 637.5 170.3 660.5Z" fill="#237f16"/><path d="M169.1 660.5Q167.7 635.8 172.6 615.6Q175.6 635.8 173.5 660.5Z" fill="#7ccf3c"/><path d="M172.1 660.5Q172.1 641.2 177.8 625.3Q176.9 641.2 174.7 660.5Z" fill="#45aa26"/><path d="M173.0 660.5Q172.1 640.2 175.3 623.6Q177.1 640.2 175.8 660.5Z" fill="#45aa26"/><path d="M170.5 660.5Q168.9 639.7 171.0 622.7Q174.8 639.7 173.7 660.5Z" fill="#55b830"/><path d="M191.5 660.5Q190.6 638.0 194.9 619.7Q196.6 638.0 194.8 660.5Z" fill="#6cc436"/><path d="M193.2 660.5Q191.4 639.6 192.5 622.5Q197.1 639.6 196.4 660.5Z" fill="#3aa022"/><path d="M192.5 660.5Q191.4 639.3 193.7 621.9Q196.4 639.3 195.3 660.5Z" fill="#8fd644"/><path d="M188.3 660.5Q185.3 641.4 185.2 625.7Q193.0 641.4 192.6 660.5Z" fill="#45aa26"/><path d="M185.4 660.5Q182.5 640.7 181.6 624.5Q189.1 640.7 189.0 660.5Z" fill="#55b830"/><path d="M186.2 660.5Q182.5 637.2 179.6 618.2Q189.4 637.2 190.0 660.5Z" fill="#237f16"/><path d="M190.5 660.5Q190.6 640.8 197.0 624.7Q196.0 640.8 193.6 660.5Z" fill="#3c9d1f"/><path d="M187.9 660.5Q186.1 638.9 186.3 621.3Q191.0 638.9 190.7 660.5Z" fill="#237f16"/><path d="M194.5 660.5Q192.8 640.5 194.8 624.1Q198.9 640.5 197.9 660.5Z" fill="#7ccf3c"/><path d="M193.4 660.5Q192.8 637.0 198.5 617.7Q199.3 637.0 197.0 660.5Z" fill="#7ccf3c"/><path d="M203.9 660.5Q204.9 640.3 213.9 623.8Q210.1 640.3 206.8 660.5Z" fill="#2f9320"/><path d="M192.2 660.5Q189.9 638.5 189.9 620.5Q195.8 638.5 195.5 660.5Z" fill="#6cc436"/><path d="M196.0 660.5Q195.9 638.2 203.5 619.9Q202.6 638.2 199.7 660.5Z" fill="#4fb22b"/><path d="M185.5 660.5Q183.6 639.1 185.8 621.6Q190.1 639.1 189.1 660.5Z" fill="#55b830"/><path d="M187.8 660.5Q186.7 637.7 189.7 619.0Q192.0 637.7 190.7 660.5Z" fill="#4fb22b"/><path d="M188.8 660.5Q187.0 636.6 190.3 617.0Q194.3 636.6 192.9 660.5Z" fill="#45aa26"/><path d="M195.8 660.5Q194.3 640.1 196.2 623.5Q199.7 640.1 198.8 660.5Z" fill="#45aa26"/><path d="M188.7 660.5Q188.3 639.9 192.6 623.0Q193.0 639.9 191.3 660.5Z" fill="#7ccf3c"/><path d="M188.2 660.5Q185.4 638.9 184.6 621.1Q191.8 638.9 191.7 660.5Z" fill="#4fb22b"/><path d="M181.6 660.5Q178.7 640.3 177.2 623.9Q184.9 640.3 185.1 660.5Z" fill="#3c9d1f"/><path d="M185.4 660.5Q181.9 638.0 179.6 619.5Q188.9 638.0 189.3 660.5Z" fill="#2f9320"/><path d="M199.4 660.5Q198.6 639.9 203.9 623.1Q205.0 639.9 202.9 660.5Z" fill="#6cc436"/><path d="M191.1 660.5Q190.6 636.9 195.9 617.6Q196.2 636.9 194.1 660.5Z" fill="#7ccf3c"/><path d="M188.9 660.5Q186.2 641.1 185.2 625.3Q192.4 641.1 192.4 660.5Z" fill="#8fd644"/><path d="M196.8 660.5Q197.2 638.3 205.6 620.1Q203.3 638.3 200.2 660.5Z" fill="#8fd644"/><path d="M195.3 660.5Q194.5 641.2 198.7 625.4Q200.0 641.2 198.3 660.5Z" fill="#3c9d1f"/><path d="M187.7 660.5Q185.4 639.3 186.5 621.9Q192.1 639.3 191.4 660.5Z" fill="#8fd644"/><path d="M179.5 660.5Q175.7 641.1 172.0 625.1Q182.3 641.1 183.1 660.5Z" fill="#7ccf3c"/><path d="M191.5 660.5Q189.5 636.3 189.8 616.5Q194.8 636.3 194.4 660.5Z" fill="#237f16"/><path d="M217.5 660.5Q215.5 640.6 218.7 624.4Q223.5 640.6 222.0 660.5Z" fill="#6cc436"/><path d="M216.7 660.5Q214.5 639.3 215.1 621.9Q220.6 639.3 220.1 660.5Z" fill="#237f16"/><path d="M230.2 660.5Q231.3 638.3 242.8 620.2Q238.3 638.3 234.0 660.5Z" fill="#8fd644"/><path d="M212.0 660.5Q208.5 637.5 204.0 618.6Q213.7 637.5 214.9 660.5Z" fill="#7ccf3c"/><path d="M213.6 660.5Q211.3 638.5 210.2 620.5Q216.4 638.5 216.5 660.5Z" fill="#8fd644"/><path d="M210.2 660.5Q207.9 641.6 208.1 626.2Q213.9 641.6 213.5 660.5Z" fill="#55b830"/><path d="M219.0 660.5Q217.8 639.0 221.7 621.4Q224.2 639.0 222.5 660.5Z" fill="#7ccf3c"/><path d="M218.0 660.5Q216.1 635.1 216.8 614.3Q221.4 635.1 220.9 660.5Z" fill="#55b830"/><path d="M221.6 660.5Q220.0 635.5 224.4 615.0Q227.9 635.5 226.0 660.5Z" fill="#4fb22b"/><path d="M212.4 660.5Q209.2 638.6 208.1 620.6Q216.3 638.6 216.3 660.5Z" fill="#3c9d1f"/><path d="M223.2 660.5Q221.9 638.2 226.5 620.0Q229.4 638.2 227.4 660.5Z" fill="#3c9d1f"/><path d="M223.8 660.5Q223.0 635.3 228.2 614.6Q229.6 635.3 227.5 660.5Z" fill="#55b830"/><path d="M224.2 660.5Q224.3 637.9 233.0 619.3Q231.6 637.9 228.3 660.5Z" fill="#8fd644"/><path d="M218.3 660.5Q216.2 640.3 217.4 623.8Q222.4 640.3 221.7 660.5Z" fill="#4fb22b"/><path d="M209.1 660.5Q205.4 640.6 203.8 624.3Q213.4 640.6 213.5 660.5Z" fill="#8fd644"/><path d="M220.1 660.5Q218.8 636.9 223.7 617.7Q226.2 636.9 224.1 660.5Z" fill="#4fb22b"/><path d="M225.2 660.5Q224.0 637.9 228.6 619.4Q231.1 637.9 229.1 660.5Z" fill="#8fd644"/><path d="M214.4 660.5Q212.5 635.6 212.9 615.2Q217.5 635.6 217.1 660.5Z" fill="#6cc436"/><path d="M218.7 660.5Q216.7 636.9 219.2 617.6Q223.8 636.9 222.6 660.5Z" fill="#6cc436"/><path d="M221.3 660.5Q219.6 637.8 223.3 619.2Q227.0 637.8 225.4 660.5Z" fill="#4fb22b"/><path d="M233.6 660.5Q234.9 641.3 246.0 625.6Q240.8 641.3 236.8 660.5Z" fill="#6cc436"/><path d="M211.8 660.5Q209.4 638.9 211.6 621.2Q217.4 638.9 216.2 660.5Z" fill="#55b830"/><path d="M211.7 660.5Q208.7 639.0 208.7 621.3Q216.4 639.0 215.9 660.5Z" fill="#55b830"/><path d="M213.6 660.5Q211.2 639.6 213.6 622.6Q219.4 639.6 218.2 660.5Z" fill="#237f16"/><path d="M217.4 660.5Q216.0 637.9 217.8 619.5Q221.1 637.9 220.2 660.5Z" fill="#3c9d1f"/><path d="M217.1 660.5Q215.5 637.3 218.8 618.2Q222.5 637.3 221.0 660.5Z" fill="#3aa022"/><path d="M211.4 660.5Q208.8 640.1 208.7 623.4Q215.5 640.1 215.2 660.5Z" fill="#7ccf3c"/><path d="M219.5 660.5Q217.7 639.7 221.7 622.8Q225.7 639.7 223.9 660.5Z" fill="#2f9320"/><path d="M220.4 660.5Q218.8 637.6 221.6 618.9Q225.4 637.6 224.1 660.5Z" fill="#7ccf3c"/><path d="M211.2 660.5Q207.5 638.4 204.1 620.3Q214.3 638.4 215.0 660.5Z" fill="#45aa26"/><path d="M222.9 660.5Q222.7 638.1 230.7 619.8Q230.1 638.1 227.0 660.5Z" fill="#45aa26"/><path d="M250.1 660.5Q249.0 641.4 255.0 625.7Q257.1 641.4 254.6 660.5Z" fill="#3aa022"/><path d="M233.7 660.5Q231.1 639.0 230.9 621.5Q237.8 639.0 237.4 660.5Z" fill="#55b830"/><path d="M248.5 660.5Q247.8 641.3 251.3 625.5Q252.6 641.3 251.2 660.5Z" fill="#2f9320"/><path d="M251.0 660.5Q249.6 639.5 254.1 622.2Q256.8 639.5 255.0 660.5Z" fill="#7ccf3c"/><path d="M243.1 660.5Q241.3 638.7 244.1 620.8Q248.2 638.7 246.9 660.5Z" fill="#4fb22b"/><path d="M254.5 660.5Q254.7 640.5 260.8 624.2Q259.4 640.5 257.1 660.5Z" fill="#45aa26"/><path d="M251.5 660.5Q251.0 637.6 257.8 618.8Q258.2 637.6 255.5 660.5Z" fill="#4fb22b"/><path d="M243.9 660.5Q241.9 637.0 244.5 617.8Q249.1 637.0 247.9 660.5Z" fill="#8fd644"/><path d="M236.3 660.5Q232.5 637.2 226.6 618.1Q237.3 637.2 239.0 660.5Z" fill="#3aa022"/><path d="M245.7 660.5Q244.3 636.9 248.9 617.6Q251.9 636.9 249.9 660.5Z" fill="#45aa26"/><path d="M238.4 660.5Q235.9 638.0 237.8 619.6Q244.0 638.0 242.9 660.5Z" fill="#8fd644"/><path d="M238.6 660.5Q235.5 635.8 234.9 615.5Q242.8 635.8 242.6 660.5Z" fill="#8fd644"/><path d="M242.6 660.5Q240.5 636.0 241.4 615.9Q246.5 636.0 245.9 660.5Z" fill="#4fb22b"/><path d="M238.2 660.5Q234.9 639.5 233.8 622.3Q242.4 639.5 242.3 660.5Z" fill="#55b830"/><path d="M247.3 660.5Q245.9 639.4 247.3 622.1Q250.8 639.4 250.1 660.5Z" fill="#2f9320"/><path d="M238.5 660.5Q236.4 635.6 239.3 615.2Q244.1 635.6 242.7 660.5Z" fill="#2f9320"/><path d="M250.4 660.5Q249.5 635.5 253.2 615.1Q255.0 635.5 253.5 660.5Z" fill="#7ccf3c"/><path d="M239.6 660.5Q236.3 635.8 235.2 615.5Q243.9 635.8 243.8 660.5Z" fill="#55b830"/><path d="M242.0 660.5Q239.8 639.6 239.3 622.5Q245.1 639.6 245.0 660.5Z" fill="#3aa022"/><path d="M242.9 660.5Q241.2 635.3 245.7 614.6Q249.5 635.3 247.5 660.5Z" fill="#4fb22b"/><path d="M241.9 660.5Q241.0 635.9 246.8 615.9Q248.2 635.9 245.8 660.5Z" fill="#8fd644"/><path d="M242.2 660.5Q240.3 637.6 243.6 618.9Q247.9 637.6 246.4 660.5Z" fill="#3c9d1f"/><path d="M247.9 660.5Q246.2 634.9 248.0 613.9Q252.0 634.9 251.1 660.5Z" fill="#3aa022"/><path d="M240.6 660.5Q237.9 640.2 236.5 623.7Q243.5 640.2 243.7 660.5Z" fill="#3aa022"/><path d="M246.7 660.5Q244.8 640.8 247.9 624.6Q252.3 640.8 250.9 660.5Z" fill="#45aa26"/><path d="M245.3 660.5Q244.6 635.2 251.7 614.5Q252.5 635.2 249.7 660.5Z" fill="#237f16"/><path d="M240.5 660.5Q239.1 640.3 241.4 623.8Q244.5 640.3 243.5 660.5Z" fill="#45aa26"/><path d="M250.0 660.5Q250.5 639.5 259.6 622.4Q257.2 639.5 253.8 660.5Z" fill="#7ccf3c"/><path d="M247.2 660.5Q244.8 639.8 246.9 622.9Q252.8 639.8 251.6 660.5Z" fill="#8fd644"/><path d="M241.4 660.5Q239.4 637.2 242.2 618.1Q246.9 637.2 245.6 660.5Z" fill="#4fb22b"/><path d="M243.6 660.5Q242.0 639.4 245.4 622.1Q248.9 639.4 247.4 660.5Z" fill="#45aa26"/><path d="M278.5 660.5Q277.4 637.2 283.5 618.1Q285.4 637.2 282.9 660.5Z" fill="#45aa26"/><path d="M280.1 660.5Q279.3 637.9 285.4 619.4Q286.6 637.9 284.1 660.5Z" fill="#45aa26"/><path d="M271.5 660.5Q270.4 638.0 276.6 619.7Q278.5 638.0 276.0 660.5Z" fill="#237f16"/><path d="M273.0 660.5Q271.9 640.5 275.7 624.2Q277.9 640.5 276.3 660.5Z" fill="#237f16"/><path d="M271.9 660.5Q269.5 639.1 268.4 621.5Q274.6 639.1 274.7 660.5Z" fill="#6cc436"/><path d="M273.3 660.5Q270.6 637.8 269.4 619.2Q276.4 637.8 276.5 660.5Z" fill="#2f9320"/><path d="M262.1 660.5Q259.2 639.6 259.9 622.6Q267.3 639.6 266.6 660.5Z" fill="#7ccf3c"/><path d="M279.1 660.5Q278.3 640.2 282.7 623.7Q284.2 640.2 282.4 660.5Z" fill="#3c9d1f"/><path d="M276.4 660.5Q276.4 636.8 283.6 617.5Q282.7 636.8 279.9 660.5Z" fill="#4fb22b"/><path d="M271.8 660.5Q271.0 641.2 275.2 625.4Q276.6 641.2 274.9 660.5Z" fill="#55b830"/><path d="M270.0 660.5Q268.5 639.2 271.0 621.7Q274.4 639.2 273.2 660.5Z" fill="#8fd644"/><path d="M282.5 660.5Q282.8 639.2 289.8 621.8Q287.9 639.2 285.4 660.5Z" fill="#3c9d1f"/><path d="M278.6 660.5Q278.9 637.3 285.5 618.2Q283.8 637.3 281.3 660.5Z" fill="#55b830"/><path d="M279.9 660.5Q280.6 640.6 290.1 624.3Q287.1 640.6 283.5 660.5Z" fill="#237f16"/><path d="M272.7 660.5Q271.4 636.8 274.9 617.4Q277.9 636.8 276.4 660.5Z" fill="#4fb22b"/><path d="M271.1 660.5Q269.7 639.6 272.0 622.5Q275.3 639.6 274.2 660.5Z" fill="#4fb22b"/><path d="M275.7 660.5Q275.0 637.5 281.5 618.7Q282.3 637.5 279.7 660.5Z" fill="#3c9d1f"/><path d="M259.3 660.5Q254.6 640.8 248.9 624.7Q261.9 640.8 263.4 660.5Z" fill="#55b830"/><path d="M274.4 660.5Q273.5 637.9 279.1 619.5Q280.5 637.9 278.2 660.5Z" fill="#3c9d1f"/><path d="M282.8 660.5Q282.3 641.3 287.5 625.6Q288.2 641.3 286.1 660.5Z" fill="#55b830"/><path d="M282.2 660.5Q281.8 641.0 286.3 625.1Q286.6 641.0 284.8 660.5Z" fill="#8fd644"/><path d="M305.7 660.5Q304.5 638.5 309.8 620.5Q312.3 638.5 310.1 660.5Z" fill="#2f9320"/><path d="M296.6 660.5Q294.6 635.7 298.0 615.4Q302.7 635.7 301.1 660.5Z" fill="#8fd644"/><path d="M295.6 660.5Q294.1 636.3 295.8 616.4Q299.3 636.3 298.5 660.5Z" fill="#3c9d1f"/><path d="M303.4 660.5Q303.3 641.1 308.9 625.2Q308.3 641.1 306.2 660.5Z" fill="#55b830"/><path d="M297.5 660.5Q296.2 637.5 300.2 618.8Q303.0 637.5 301.3 660.5Z" fill="#237f16"/><path d="M298.1 660.5Q297.8 639.2 302.7 621.8Q302.8 639.2 300.9 660.5Z" fill="#4fb22b"/><path d="M301.2 660.5Q300.7 638.7 306.5 620.8Q307.2 638.7 304.8 660.5Z" fill="#55b830"/><path d="M300.3 660.5Q299.7 635.9 305.5 615.9Q306.3 635.9 304.0 660.5Z" fill="#3c9d1f"/><path d="M299.9 660.5Q298.6 638.0 303.2 619.5Q305.9 638.0 304.0 660.5Z" fill="#4fb22b"/><path d="M298.4 660.5Q297.1 637.4 301.4 618.4Q304.3 637.4 302.4 660.5Z" fill="#2f9320"/><path d="M302.2 660.5Q300.8 639.6 306.0 622.6Q308.8 639.6 306.6 660.5Z" fill="#6cc436"/><path d="M293.8 660.5Q292.2 639.6 294.6 622.4Q298.4 639.6 297.3 660.5Z" fill="#2f9320"/><path d="M303.0 660.5Q301.2 637.2 304.7 618.1Q308.9 637.2 307.3 660.5Z" fill="#3aa022"/><path d="M295.0 660.5Q293.6 637.1 296.3 618.0Q299.6 637.1 298.3 660.5Z" fill="#7ccf3c"/><path d="M296.7 660.5Q295.3 640.8 297.4 624.7Q300.7 640.8 299.7 660.5Z" fill="#6cc436"/><path d="M300.1 660.5Q297.6 637.6 298.9 618.9Q305.1 637.6 304.3 660.5Z" fill="#3aa022"/><path d="M288.3 660.5Q285.2 637.4 282.8 618.6Q291.0 637.4 291.5 660.5Z" fill="#55b830"/><path d="M293.6 660.5Q291.6 641.3 294.9 625.6Q299.7 641.3 298.2 660.5Z" fill="#237f16"/><path d="M299.5 660.5Q298.1 637.8 303.3 619.3Q306.2 637.8 304.0 660.5Z" fill="#8fd644"/><path d="M300.4 660.5Q299.8 639.8 305.4 622.9Q306.0 639.8 303.8 660.5Z" fill="#55b830"/><path d="M295.2 660.5Q294.5 636.7 299.2 617.3Q300.2 636.7 298.3 660.5Z" fill="#8fd644"/><path d="M288.8 660.5Q285.5 639.1 281.9 621.5Q290.9 639.1 291.8 660.5Z" fill="#6cc436"/><path d="M286.7 660.5Q283.5 640.2 281.4 623.6Q289.9 640.2 290.2 660.5Z" fill="#55b830"/><path d="M304.5 660.5Q304.6 641.5 312.4 626.0Q311.2 641.5 308.2 660.5Z" fill="#2f9320"/><path d="M287.3 660.5Q283.5 641.6 281.6 626.1Q291.7 641.6 291.9 660.5Z" fill="#55b830"/><path d="M298.6 660.5Q297.5 637.9 302.0 619.5Q304.3 637.9 302.4 660.5Z" fill="#6cc436"/><path d="M294.3 660.5Q292.4 639.1 294.2 621.7Q298.7 639.1 297.8 660.5Z" fill="#45aa26"/><path d="M292.8 660.5Q291.0 637.5 293.6 618.6Q297.9 637.5 296.7 660.5Z" fill="#55b830"/><path d="M301.3 660.5Q299.8 637.1 303.9 618.0Q307.1 637.1 305.3 660.5Z" fill="#8fd644"/><path d="M313.8 660.5Q310.2 639.2 306.7 621.7Q316.4 639.2 317.2 660.5Z" fill="#45aa26"/><path d="M314.9 660.5Q312.4 640.2 313.7 623.5Q319.7 640.2 318.9 660.5Z" fill="#55b830"/><path d="M315.5 660.5Q313.3 639.1 315.2 621.7Q320.4 639.1 319.4 660.5Z" fill="#3aa022"/><path d="M325.7 660.5Q323.9 639.2 325.6 621.7Q330.2 639.2 329.2 660.5Z" fill="#4fb22b"/><path d="M321.8 660.5Q320.7 635.7 326.5 615.5Q328.6 635.7 326.2 660.5Z" fill="#3aa022"/><path d="M328.5 660.5Q328.5 637.4 335.3 618.4Q334.3 637.4 331.7 660.5Z" fill="#237f16"/><path d="M323.4 660.5Q321.5 635.6 323.3 615.3Q328.0 635.6 327.0 660.5Z" fill="#237f16"/><path d="M321.0 660.5Q319.1 639.1 318.8 621.5Q323.9 639.1 323.7 660.5Z" fill="#6cc436"/><path d="M321.0 660.5Q319.5 641.6 321.7 626.2Q325.1 641.6 324.0 660.5Z" fill="#7ccf3c"/><path d="M315.7 660.5Q313.5 639.3 314.9 622.0Q320.3 639.3 319.5 660.5Z" fill="#3c9d1f"/><path d="M331.3 660.5Q331.4 641.3 339.8 625.7Q338.3 641.3 335.2 660.5Z" fill="#2f9320"/><path d="M316.4 660.5Q314.8 637.6 316.1 618.9Q320.1 637.6 319.4 660.5Z" fill="#6cc436"/><path d="M319.9 660.5Q318.5 640.1 320.5 623.5Q323.8 640.1 322.9 660.5Z" fill="#55b830"/><path d="M315.7 660.5Q311.8 636.5 309.2 617.0Q319.6 636.5 320.0 660.5Z" fill="#7ccf3c"/><path d="M315.1 660.5Q312.0 638.0 309.1 619.7Q317.5 638.0 318.1 660.5Z" fill="#3c9d1f"/><path d="M319.7 660.5Q318.2 638.5 319.7 620.6Q323.3 638.5 322.5 660.5Z" fill="#2f9320"/><path d="M328.4 660.5Q327.6 638.7 331.7 620.8Q333.0 638.7 331.3 660.5Z" fill="#8fd644"/><path d="M322.8 660.5Q320.5 636.4 322.7 616.8Q328.4 636.4 327.2 660.5Z" fill="#237f16"/><path d="M312.0 660.5Q308.6 641.4 307.2 625.7Q316.2 641.4 316.2 660.5Z" fill="#3aa022"/><path d="M317.7 660.5Q314.8 641.5 312.8 626.0Q320.4 641.5 320.7 660.5Z" fill="#55b830"/><path d="M324.7 660.5Q324.0 641.6 331.1 626.2Q331.9 641.6 329.1 660.5Z" fill="#2f9320"/><path d="M327.5 660.5Q327.5 638.6 333.3 620.8Q332.3 638.6 330.1 660.5Z" fill="#3c9d1f"/><path d="M330.6 660.5Q330.3 637.9 336.8 619.4Q336.6 637.9 334.1 660.5Z" fill="#2f9320"/><path d="M322.2 660.5Q321.2 641.0 326.2 625.1Q328.0 641.0 326.0 660.5Z" fill="#4fb22b"/><path d="M314.9 660.5Q313.5 638.1 316.0 619.8Q319.2 638.1 318.1 660.5Z" fill="#2f9320"/><path d="M322.1 660.5Q322.3 635.7 328.5 615.4Q327.2 635.7 324.8 660.5Z" fill="#7ccf3c"/><path d="M316.8 660.5Q313.8 640.0 311.8 623.2Q319.9 640.0 320.2 660.5Z" fill="#8fd644"/><path d="M357.0 660.5Q357.1 639.8 363.3 622.8Q362.2 639.8 359.8 660.5Z" fill="#237f16"/><path d="M354.5 660.5Q353.3 638.7 359.2 620.9Q361.5 638.7 359.1 660.5Z" fill="#7ccf3c"/><path d="M353.6 660.5Q352.6 640.9 355.8 624.9Q358.0 640.9 356.6 660.5Z" fill="#55b830"/><path d="M345.1 660.5Q343.6 641.0 344.8 625.0Q348.4 641.0 347.7 660.5Z" fill="#4fb22b"/><path d="M349.9 660.5Q348.8 641.0 353.2 625.0Q355.4 641.0 353.6 660.5Z" fill="#4fb22b"/><path d="M341.0 660.5Q337.8 639.2 334.8 621.7Q343.4 639.2 344.1 660.5Z" fill="#6cc436"/><path d="M341.0 660.5Q338.5 641.3 340.3 625.6Q346.6 641.3 345.5 660.5Z" fill="#3c9d1f"/><path d="M346.5 660.5Q344.9 641.1 349.3 625.2Q352.7 641.1 350.8 660.5Z" fill="#4fb22b"/><path d="M341.6 660.5Q338.8 640.6 336.2 624.4Q343.9 640.6 344.5 660.5Z" fill="#45aa26"/><path d="M347.8 660.5Q345.6 636.8 347.7 617.4Q353.0 636.8 351.9 660.5Z" fill="#7ccf3c"/><path d="M354.4 660.5Q354.2 637.3 360.3 618.3Q360.0 637.3 357.7 660.5Z" fill="#45aa26"/><path d="M356.8 660.5Q357.1 641.7 364.1 626.4Q362.3 641.7 359.6 660.5Z" fill="#7ccf3c"/><path d="M347.7 660.5Q346.3 636.5 350.9 616.8Q353.8 636.5 351.8 660.5Z" fill="#4fb22b"/><path d="M354.3 660.5Q353.4 640.4 359.4 624.0Q360.9 640.4 358.5 660.5Z" fill="#6cc436"/><path d="M351.3 660.5Q350.1 637.7 353.8 619.1Q356.4 637.7 354.8 660.5Z" fill="#7ccf3c"/><path d="M345.2 660.5Q342.6 638.4 342.3 620.3Q348.8 638.4 348.6 660.5Z" fill="#2f9320"/><path d="M352.8 660.5Q352.3 640.5 358.1 624.1Q358.4 640.5 356.1 660.5Z" fill="#3aa022"/><path d="M338.3 660.5Q334.4 639.6 330.5 622.5Q341.1 639.6 342.0 660.5Z" fill="#3c9d1f"/><path d="M349.0 660.5Q347.6 636.7 351.2 617.3Q354.4 636.7 352.8 660.5Z" fill="#3aa022"/><path d="M357.9 660.5Q357.7 638.1 365.4 619.8Q364.9 638.1 361.9 660.5Z" fill="#8fd644"/><path d="M354.1 660.5Q353.7 637.7 357.9 619.1Q358.5 637.7 356.8 660.5Z" fill="#237f16"/><path d="M348.8 660.5Q347.9 636.0 353.3 616.0Q354.9 636.0 352.7 660.5Z" fill="#237f16"/><path d="M348.4 660.5Q348.5 641.2 355.4 625.4Q354.4 641.2 351.7 660.5Z" fill="#45aa26"/><path d="M351.7 660.5Q351.0 641.4 357.4 625.8Q358.2 641.4 355.7 660.5Z" fill="#8fd644"/><path d="M350.2 660.5Q349.4 638.9 354.2 621.2Q355.7 638.9 353.7 660.5Z" fill="#6cc436"/><path d="M348.1 660.5Q346.0 637.7 347.7 619.1Q352.8 637.7 351.9 660.5Z" fill="#3c9d1f"/><path d="M385.7 660.5Q384.6 637.4 387.5 618.5Q389.9 637.4 388.7 660.5Z" fill="#4fb22b"/><path d="M373.1 660.5Q369.6 638.4 367.9 620.4Q377.2 638.4 377.4 660.5Z" fill="#45aa26"/><path d="M381.1 660.5Q379.8 638.7 381.7 620.9Q384.7 638.7 383.8 660.5Z" fill="#55b830"/><path d="M379.3 660.5Q377.5 639.9 381.7 623.1Q385.7 639.9 383.8 660.5Z" fill="#4fb22b"/><path d="M377.2 660.5Q375.8 640.0 377.9 623.2Q381.1 640.0 380.1 660.5Z" fill="#45aa26"/><path d="M390.3 660.5Q390.8 637.8 399.8 619.3Q397.2 637.8 393.9 660.5Z" fill="#6cc436"/><path d="M373.6 660.5Q370.0 637.3 367.3 618.3Q377.0 637.3 377.5 660.5Z" fill="#55b830"/><path d="M379.6 660.5Q378.0 637.1 378.7 618.0Q382.8 637.1 382.3 660.5Z" fill="#7ccf3c"/><path d="M384.8 660.5Q383.5 641.0 387.8 625.1Q390.5 641.0 388.7 660.5Z" fill="#4fb22b"/><path d="M387.6 660.5Q388.5 640.7 398.3 624.6Q394.5 640.7 390.9 660.5Z" fill="#237f16"/><path d="M370.0 660.5Q366.0 639.7 362.4 622.7Q373.2 639.7 374.0 660.5Z" fill="#3aa022"/><path d="M390.8 660.5Q391.2 640.7 398.3 624.6Q396.4 640.7 393.7 660.5Z" fill="#55b830"/><path d="M375.7 660.5Q373.6 640.3 372.8 623.8Q378.4 640.3 378.3 660.5Z" fill="#2f9320"/><path d="M390.5 660.5Q390.1 641.1 395.5 625.3Q395.8 641.1 393.7 660.5Z" fill="#3aa022"/><path d="M372.3 660.5Q369.2 641.5 367.2 625.9Q375.5 641.5 375.8 660.5Z" fill="#4fb22b"/><path d="M385.4 660.5Q384.6 640.4 389.4 623.9Q390.8 640.4 388.9 660.5Z" fill="#2f9320"/><path d="M376.1 660.5Q373.0 639.4 371.3 622.2Q379.6 639.4 379.8 660.5Z" fill="#237f16"/><path d="M393.1 660.5Q393.9 640.1 402.2 623.4Q398.8 640.1 395.8 660.5Z" fill="#6cc436"/><path d="M375.2 660.5Q372.0 638.9 371.9 621.3Q380.1 638.9 379.7 660.5Z" fill="#8fd644"/><path d="M378.5 660.5Q376.3 636.4 377.3 616.7Q382.9 636.4 382.2 660.5Z" fill="#3aa022"/><path d="M384.4 660.5Q383.1 637.4 387.6 618.5Q390.3 637.4 388.4 660.5Z" fill="#4fb22b"/><path d="M376.8 660.5Q374.1 638.6 373.2 620.7Q380.3 638.6 380.3 660.5Z" fill="#237f16"/><path d="M382.0 660.5Q381.5 640.2 386.6 623.6Q387.0 640.2 385.0 660.5Z" fill="#3c9d1f"/><path d="M377.4 660.5Q375.3 636.7 375.6 617.2Q380.9 636.7 380.5 660.5Z" fill="#45aa26"/><path d="M386.2 660.5Q386.8 637.9 394.8 619.4Q392.3 637.9 389.3 660.5Z" fill="#8fd644"/><path d="M382.7 660.5Q382.4 641.2 389.0 625.5Q388.9 641.2 386.4 660.5Z" fill="#2f9320"/><path d="M387.9 660.5Q387.0 638.5 392.8 620.5Q394.4 638.5 392.0 660.5Z" fill="#45aa26"/><path d="M416.2 660.5Q417.9 640.7 431.6 624.5Q425.3 640.7 420.4 660.5Z" fill="#4fb22b"/><path d="M398.4 660.5Q396.4 640.7 396.1 624.6Q401.3 640.7 401.1 660.5Z" fill="#3aa022"/><path d="M415.1 660.5Q414.6 638.8 418.9 621.0Q419.4 638.8 417.7 660.5Z" fill="#55b830"/><path d="M411.7 660.5Q411.4 637.8 420.0 619.3Q419.5 637.8 416.2 660.5Z" fill="#8fd644"/><path d="M404.7 660.5Q403.0 635.9 404.5 615.8Q408.6 635.9 407.8 660.5Z" fill="#6cc436"/><path d="M409.4 660.5Q409.1 636.6 416.3 617.0Q415.9 636.6 413.2 660.5Z" fill="#45aa26"/><path d="M409.0 660.5Q407.5 641.4 409.7 625.9Q413.1 641.4 412.1 660.5Z" fill="#4fb22b"/><path d="M399.7 660.5Q397.0 638.4 395.8 620.3Q403.0 638.4 403.1 660.5Z" fill="#4fb22b"/><path d="M400.5 660.5Q397.6 636.1 397.5 616.1Q405.0 636.1 404.6 660.5Z" fill="#55b830"/><path d="M407.9 660.5Q407.0 639.6 410.3 622.5Q412.2 639.6 410.8 660.5Z" fill="#237f16"/><path d="M404.5 660.5Q403.0 636.4 404.4 616.7Q408.0 636.4 407.3 660.5Z" fill="#2f9320"/><path d="M411.6 660.5Q410.3 639.9 414.0 623.0Q416.7 639.9 415.2 660.5Z" fill="#4fb22b"/><path d="M402.5 660.5Q399.5 640.5 399.8 624.2Q407.6 640.5 407.0 660.5Z" fill="#237f16"/><path d="M412.6 660.5Q412.4 641.4 420.9 625.7Q420.3 641.4 417.0 660.5Z" fill="#2f9320"/><path d="M401.9 660.5Q399.2 636.9 399.6 617.5Q406.5 636.9 405.9 660.5Z" fill="#6cc436"/><path d="M399.3 660.5Q396.6 640.8 393.9 624.6Q401.3 640.8 401.9 660.5Z" fill="#2f9320"/><path d="M399.8 660.5Q397.0 641.0 397.6 625.0Q404.8 641.0 404.2 660.5Z" fill="#2f9320"/><path d="M411.1 660.5Q410.8 637.9 416.5 619.4Q416.4 637.9 414.2 660.5Z" fill="#55b830"/><path d="M410.9 660.5Q410.5 639.5 417.2 622.3Q417.2 639.5 414.6 660.5Z" fill="#45aa26"/><path d="M401.4 660.5Q399.2 637.1 401.7 618.0Q407.0 637.1 405.7 660.5Z" fill="#4fb22b"/><path d="M403.0 660.5Q400.3 637.0 400.8 617.8Q407.6 637.0 407.1 660.5Z" fill="#237f16"/><path d="M409.9 660.5Q408.6 636.5 413.3 616.8Q415.9 636.5 413.9 660.5Z" fill="#6cc436"/><path d="M412.9 660.5Q412.6 640.8 421.4 624.8Q420.9 640.8 417.5 660.5Z" fill="#8fd644"/><path d="M407.0 660.5Q405.7 636.1 409.5 616.1Q412.1 636.1 410.5 660.5Z" fill="#8fd644"/><path d="M394.5 660.5Q391.5 639.4 390.3 622.1Q398.3 639.4 398.3 660.5Z" fill="#4fb22b"/><path d="M403.9 660.5Q402.5 637.2 406.0 618.1Q409.1 637.2 407.6 660.5Z" fill="#6cc436"/><path d="M411.1 660.5Q410.7 636.4 417.4 616.7Q417.5 636.4 414.9 660.5Z" fill="#55b830"/><path d="M403.0 660.5Q399.6 636.6 396.4 617.0Q405.5 636.6 406.2 660.5Z" fill="#4fb22b"/><path d="M432.4 660.5Q431.3 641.0 434.4 625.0Q436.9 641.0 435.5 660.5Z" fill="#3aa022"/><path d="M433.9 660.5Q433.3 640.8 439.5 624.7Q440.1 640.8 437.7 660.5Z" fill="#237f16"/><path d="M428.4 660.5Q425.7 637.6 426.8 618.8Q433.8 637.6 433.0 660.5Z" fill="#2f9320"/><path d="M435.3 660.5Q434.5 637.0 439.9 617.8Q441.3 637.0 439.1 660.5Z" fill="#4fb22b"/><path d="M439.5 660.5Q439.7 639.0 445.9 621.4Q444.5 639.0 442.1 660.5Z" fill="#6cc436"/><path d="M437.2 660.5Q436.3 640.5 442.3 624.2Q443.7 640.5 441.3 660.5Z" fill="#8fd644"/><path d="M433.0 660.5Q431.3 638.1 434.9 619.7Q438.8 638.1 437.2 660.5Z" fill="#2f9320"/><path d="M432.7 660.5Q431.2 636.8 433.7 617.3Q437.4 636.8 436.2 660.5Z" fill="#237f16"/><path d="M425.2 660.5Q423.3 641.4 425.8 625.7Q430.5 641.4 429.3 660.5Z" fill="#3aa022"/><path d="M433.0 660.5Q430.8 637.1 434.0 617.9Q439.0 637.1 437.5 660.5Z" fill="#8fd644"/><path d="M425.0 660.5Q422.1 639.9 420.1 623.1Q427.8 639.9 428.1 660.5Z" fill="#55b830"/><path d="M441.6 660.5Q441.8 640.1 451.1 623.4Q449.3 640.1 445.8 660.5Z" fill="#6cc436"/><path d="M438.8 660.5Q439.0 640.6 449.2 624.3Q447.2 640.6 443.3 660.5Z" fill="#3aa022"/><path d="M429.5 660.5Q427.5 638.7 427.8 620.9Q432.9 638.7 432.5 660.5Z" fill="#4fb22b"/><path d="M431.2 660.5Q430.2 637.3 436.3 618.2Q438.1 637.3 435.6 660.5Z" fill="#4fb22b"/><path d="M424.5 660.5Q421.6 639.0 420.0 621.3Q427.9 639.0 428.0 660.5Z" fill="#8fd644"/><path d="M436.7 660.5Q437.5 636.7 447.0 617.2Q443.6 636.7 440.1 660.5Z" fill="#3c9d1f"/><path d="M439.0 660.5Q437.6 638.7 440.4 620.9Q443.5 638.7 442.3 660.5Z" fill="#3c9d1f"/><path d="M423.8 660.5Q420.2 637.8 419.0 619.2Q428.3 637.8 428.3 660.5Z" fill="#3c9d1f"/><path d="M434.2 660.5Q433.3 637.5 437.1 618.7Q438.9 637.5 437.3 660.5Z" fill="#6cc436"/><path d="M436.6 660.5Q437.1 638.3 445.4 620.1Q442.9 638.3 439.8 660.5Z" fill="#8fd644"/><path d="M434.2 660.5Q433.7 641.1 441.3 625.3Q441.5 641.1 438.5 660.5Z" fill="#55b830"/><path d="M437.1 660.5Q436.7 640.5 441.4 624.2Q441.7 640.5 439.9 660.5Z" fill="#3aa022"/><path d="M437.9 660.5Q436.9 637.9 442.9 619.4Q444.7 637.9 442.2 660.5Z" fill="#4fb22b"/><path d="M427.8 660.5Q425.5 636.4 427.1 616.8Q432.7 636.4 431.8 660.5Z" fill="#45aa26"/><path d="M431.7 660.5Q429.8 640.9 432.3 624.9Q436.9 640.9 435.7 660.5Z" fill="#45aa26"/><path d="M421.9 660.5Q419.0 640.5 417.6 624.1Q425.2 640.5 425.3 660.5Z" fill="#6cc436"/><path d="M467.8 660.5Q467.4 636.1 474.7 616.1Q474.6 636.1 471.8 660.5Z" fill="#3aa022"/><path d="M469.3 660.5Q469.7 638.1 479.5 619.7Q476.9 638.1 473.3 660.5Z" fill="#3aa022"/><path d="M470.6 660.5Q471.9 638.9 481.6 621.2Q477.0 638.9 473.4 660.5Z" fill="#6cc436"/><path d="M468.9 660.5Q469.0 635.2 475.6 614.4Q474.4 635.2 471.9 660.5Z" fill="#3aa022"/><path d="M453.3 660.5Q451.0 640.1 449.5 623.4Q455.7 640.1 455.9 660.5Z" fill="#3aa022"/><path d="M455.6 660.5Q452.2 637.7 450.5 619.1Q459.4 637.7 459.6 660.5Z" fill="#55b830"/><path d="M455.4 660.5Q452.8 638.6 454.5 620.6Q461.0 638.6 460.0 660.5Z" fill="#7ccf3c"/><path d="M462.7 660.5Q459.9 635.0 460.7 614.2Q467.8 635.0 467.1 660.5Z" fill="#3aa022"/><path d="M462.4 660.5Q461.7 633.7 467.8 611.8Q468.8 633.7 466.4 660.5Z" fill="#7ccf3c"/><path d="M465.6 660.5Q463.5 640.6 465.3 624.3Q470.6 640.6 469.6 660.5Z" fill="#6cc436"/><path d="M458.3 660.5Q455.6 636.3 454.8 616.5Q461.9 636.3 461.8 660.5Z" fill="#2f9320"/><path d="M476.0 660.5Q477.2 640.3 488.4 623.7Q483.7 640.3 479.6 660.5Z" fill="#2f9320"/><path d="M453.6 660.5Q450.3 636.6 449.1 617.1Q457.8 636.6 457.8 660.5Z" fill="#7ccf3c"/><path d="M460.2 660.5Q458.8 633.9 461.1 612.1Q464.4 633.9 463.4 660.5Z" fill="#6cc436"/><path d="M475.1 660.5Q476.4 641.0 489.6 625.0Q484.4 641.0 479.6 660.5Z" fill="#55b830"/><path d="M460.8 660.5Q460.4 634.6 466.3 613.5Q466.4 634.6 464.1 660.5Z" fill="#2f9320"/><path d="M455.5 660.5Q452.7 640.4 453.6 624.0Q460.7 640.4 460.0 660.5Z" fill="#237f16"/><path d="M458.3 660.5Q456.5 639.7 458.4 622.8Q462.5 639.7 461.6 660.5Z" fill="#4fb22b"/><path d="M468.7 660.5Q469.0 640.6 479.3 624.2Q477.1 640.6 473.2 660.5Z" fill="#3aa022"/><path d="M458.5 660.5Q456.9 634.9 459.7 614.0Q463.2 634.9 461.9 660.5Z" fill="#7ccf3c"/><path d="M465.7 660.5Q465.5 640.2 471.7 623.6Q471.4 640.2 469.0 660.5Z" fill="#237f16"/><path d="M458.5 660.5Q455.6 637.5 455.6 618.7Q463.1 637.5 462.7 660.5Z" fill="#237f16"/><path d="M469.4 660.5Q470.2 639.4 480.0 622.2Q476.7 639.4 473.1 660.5Z" fill="#3c9d1f"/><path d="M454.7 660.5Q451.6 636.5 448.6 616.9Q457.2 636.5 457.8 660.5Z" fill="#237f16"/><path d="M465.6 660.5Q465.8 640.4 472.7 624.0Q471.1 640.4 468.5 660.5Z" fill="#237f16"/><path d="M460.4 660.5Q459.0 638.9 463.9 621.3Q466.7 638.9 464.7 660.5Z" fill="#45aa26"/><path d="M458.0 660.5Q456.7 634.6 461.4 613.3Q464.0 634.6 462.0 660.5Z" fill="#7ccf3c"/><path d="M453.0 660.5Q450.7 640.5 450.9 624.1Q456.8 640.5 456.4 660.5Z" fill="#2f9320"/><path d="M464.8 660.5Q463.3 638.1 466.7 619.8Q470.1 638.1 468.5 660.5Z" fill="#2f9320"/><path d="M496.8 660.5Q495.6 639.5 499.3 622.2Q501.7 639.5 500.1 660.5Z" fill="#7ccf3c"/><path d="M496.2 660.5Q495.5 639.7 499.5 622.7Q500.7 639.7 499.1 660.5Z" fill="#3aa022"/><path d="M488.2 660.5Q485.0 640.6 480.9 624.4Q489.8 640.6 490.9 660.5Z" fill="#55b830"/><path d="M485.5 660.5Q483.3 640.5 485.3 624.1Q490.7 640.5 489.6 660.5Z" fill="#2f9320"/><path d="M490.7 660.5Q488.4 640.0 489.8 623.3Q495.5 640.0 494.6 660.5Z" fill="#55b830"/><path d="M485.3 660.5Q482.2 641.6 478.5 626.2Q487.1 641.6 488.0 660.5Z" fill="#55b830"/><path d="M494.5 660.5Q493.6 639.4 498.8 622.1Q500.2 639.4 498.1 660.5Z" fill="#55b830"/><path d="M495.4 660.5Q494.4 638.8 498.5 621.0Q500.4 638.8 498.7 660.5Z" fill="#8fd644"/><path d="M500.7 660.5Q502.1 639.5 511.8 622.2Q507.0 639.5 503.4 660.5Z" fill="#6cc436"/><path d="M497.3 660.5Q496.2 636.4 501.8 616.6Q503.8 636.4 501.5 660.5Z" fill="#3aa022"/><path d="M492.0 660.5Q491.1 640.4 496.7 624.0Q498.3 640.4 496.0 660.5Z" fill="#2f9320"/><path d="M488.1 660.5Q485.2 638.6 482.9 620.8Q490.6 638.6 491.1 660.5Z" fill="#3c9d1f"/><path d="M503.4 660.5Q504.1 639.9 512.0 623.0Q509.0 639.9 506.1 660.5Z" fill="#45aa26"/><path d="M497.4 660.5Q495.7 638.1 498.9 619.8Q502.8 638.1 501.3 660.5Z" fill="#55b830"/><path d="M497.5 660.5Q495.8 641.4 499.2 625.8Q503.2 641.4 501.7 660.5Z" fill="#3c9d1f"/><path d="M498.0 660.5Q496.7 641.0 500.8 625.0Q503.5 641.0 501.8 660.5Z" fill="#6cc436"/><path d="M491.1 660.5Q488.2 640.5 486.1 624.1Q493.8 640.5 494.2 660.5Z" fill="#237f16"/><path d="M496.6 660.5Q495.0 637.2 499.7 618.2Q503.2 637.2 501.2 660.5Z" fill="#7ccf3c"/><path d="M490.6 660.5Q488.2 639.5 489.6 622.4Q495.5 639.5 494.6 660.5Z" fill="#7ccf3c"/><path d="M492.4 660.5Q490.4 637.2 493.5 618.2Q498.3 637.2 496.8 660.5Z" fill="#45aa26"/><path d="M522.0 660.5Q520.6 638.5 525.1 620.4Q528.0 638.5 526.1 660.5Z" fill="#3c9d1f"/><path d="M527.6 660.5Q527.1 636.9 534.5 617.6Q534.8 636.9 531.9 660.5Z" fill="#3c9d1f"/><path d="M517.7 660.5Q515.2 639.4 513.4 622.2Q520.2 639.4 520.5 660.5Z" fill="#3aa022"/><path d="M512.7 660.5Q510.7 641.2 510.4 625.4Q515.6 641.2 515.4 660.5Z" fill="#6cc436"/><path d="M518.0 660.5Q516.2 640.8 517.7 624.7Q522.2 640.8 521.4 660.5Z" fill="#45aa26"/><path d="M525.2 660.5Q523.6 641.8 526.3 626.5Q530.3 641.8 529.0 660.5Z" fill="#45aa26"/><path d="M523.7 660.5Q522.0 641.1 524.1 625.3Q528.1 641.1 527.0 660.5Z" fill="#3aa022"/><path d="M526.5 660.5Q526.0 636.3 531.4 616.5Q531.9 636.3 529.7 660.5Z" fill="#8fd644"/><path d="M521.7 660.5Q520.5 641.6 523.5 626.1Q526.1 641.6 524.8 660.5Z" fill="#4fb22b"/><path d="M520.9 660.5Q518.6 640.6 521.2 624.4Q526.7 640.6 525.4 660.5Z" fill="#55b830"/><path d="M527.6 660.5Q526.8 637.3 534.0 618.3Q535.0 637.3 532.2 660.5Z" fill="#7ccf3c"/><path d="M515.2 660.5Q512.4 641.7 513.2 626.4Q520.3 641.7 519.6 660.5Z" fill="#45aa26"/><path d="M520.3 660.5Q517.7 640.8 518.6 624.7Q525.1 640.8 524.4 660.5Z" fill="#237f16"/><path d="M522.8 660.5Q520.9 640.6 523.3 624.3Q527.7 640.6 526.6 660.5Z" fill="#45aa26"/><path d="M534.7 660.5Q535.4 641.0 546.3 625.0Q543.0 641.0 538.9 660.5Z" fill="#6cc436"/><path d="M532.2 660.5Q532.4 641.1 538.7 625.2Q537.4 641.1 535.0 660.5Z" fill="#3c9d1f"/><path d="M527.4 660.5Q527.1 641.1 533.0 625.1Q532.9 641.1 530.6 660.5Z" fill="#45aa26"/><path d="M522.5 660.5Q521.3 638.4 523.5 620.2Q526.2 638.4 525.2 660.5Z" fill="#3aa022"/><path d="M533.8 660.5Q534.9 639.1 547.4 621.7Q542.8 639.1 538.2 660.5Z" fill="#8fd644"/><path d="M531.3 660.5Q530.3 639.8 534.8 622.8Q536.6 639.8 534.7 660.5Z" fill="#237f16"/><path d="M516.6 660.5Q515.1 639.8 520.0 622.8Q523.2 639.8 521.1 660.5Z" fill="#45aa26"/><path d="M536.9 660.5Q538.2 641.7 550.9 626.4Q545.6 641.7 541.0 660.5Z" fill="#3c9d1f"/><path d="M524.0 660.5Q523.2 638.6 530.0 620.6Q531.0 638.6 528.3 660.5Z" fill="#2f9320"/><path d="M534.6 660.5Q534.7 640.6 542.3 624.3Q540.8 640.6 537.9 660.5Z" fill="#7ccf3c"/><path d="M526.8 660.5Q524.8 636.5 527.9 616.8Q532.5 636.5 531.0 660.5Z" fill="#7ccf3c"/><path d="M552.8 660.5Q552.4 635.2 559.7 614.5Q559.5 635.2 556.7 660.5Z" fill="#7ccf3c"/><path d="M551.9 660.5Q550.8 637.3 553.1 618.2Q555.6 637.3 554.5 660.5Z" fill="#45aa26"/><path d="M558.4 660.5Q557.9 639.0 563.2 621.4Q563.7 639.0 561.6 660.5Z" fill="#4fb22b"/><path d="M547.8 660.5Q545.9 638.4 549.2 620.4Q553.7 638.4 552.1 660.5Z" fill="#2f9320"/><path d="M559.0 660.5Q559.4 635.4 566.6 614.9Q564.7 635.4 562.0 660.5Z" fill="#8fd644"/><path d="M542.7 660.5Q540.2 640.8 539.3 624.7Q545.7 640.8 545.7 660.5Z" fill="#3aa022"/><path d="M547.2 660.5Q545.2 634.9 547.5 614.0Q552.1 634.9 551.0 660.5Z" fill="#7ccf3c"/><path d="M548.2 660.5Q546.6 634.8 550.4 613.7Q554.1 634.8 552.4 660.5Z" fill="#2f9320"/><path d="M557.1 660.5Q557.9 640.3 567.8 623.9Q564.4 640.3 560.8 660.5Z" fill="#3aa022"/><path d="M553.5 660.5Q552.3 639.1 556.3 621.6Q559.0 639.1 557.3 660.5Z" fill="#55b830"/><path d="M549.9 660.5Q547.1 633.8 547.4 612.0Q554.4 633.8 554.0 660.5Z" fill="#237f16"/><path d="M549.1 660.5Q547.2 635.6 547.8 615.2Q552.8 635.6 552.2 660.5Z" fill="#7ccf3c"/><path d="M561.3 660.5Q561.9 640.4 573.1 623.9Q570.0 640.4 565.8 660.5Z" fill="#6cc436"/><path d="M546.2 660.5Q544.5 636.4 548.7 616.8Q552.5 636.4 550.7 660.5Z" fill="#3aa022"/><path d="M559.1 660.5Q558.4 639.8 566.0 622.9Q566.6 639.8 563.6 660.5Z" fill="#3aa022"/><path d="M551.1 660.5Q548.1 635.6 547.9 615.2Q555.5 635.6 555.2 660.5Z" fill="#3aa022"/><path d="M558.6 660.5Q559.5 637.9 567.8 619.4Q564.3 637.9 561.3 660.5Z" fill="#7ccf3c"/><path d="M556.3 660.5Q556.5 634.6 565.1 613.5Q563.4 634.6 560.2 660.5Z" fill="#3c9d1f"/><path d="M548.0 660.5Q546.4 637.9 551.3 619.4Q554.6 637.9 552.5 660.5Z" fill="#45aa26"/><path d="M555.1 660.5Q553.2 638.5 557.0 620.4Q561.3 638.5 559.6 660.5Z" fill="#6cc436"/><path d="M548.6 660.5Q546.2 639.7 546.8 622.6Q552.9 639.7 552.4 660.5Z" fill="#3aa022"/><path d="M553.3 660.5Q551.7 639.8 554.5 622.8Q558.2 639.8 556.9 660.5Z" fill="#3aa022"/><path d="M558.7 660.5Q559.6 640.7 569.3 624.5Q565.4 640.7 561.9 660.5Z" fill="#3aa022"/><path d="M554.3 660.5Q554.1 634.3 559.9 612.9Q559.5 634.3 557.3 660.5Z" fill="#6cc436"/><path d="M559.1 660.5Q559.0 637.5 565.5 618.8Q564.9 637.5 562.4 660.5Z" fill="#6cc436"/><path d="M544.3 660.5Q541.3 639.1 538.4 621.6Q546.6 639.1 547.3 660.5Z" fill="#6cc436"/><path d="M557.6 660.5Q557.5 638.1 565.1 619.7Q564.5 638.1 561.6 660.5Z" fill="#7ccf3c"/><path d="M550.9 660.5Q548.6 638.1 551.2 619.8Q556.6 638.1 555.3 660.5Z" fill="#237f16"/><path d="M557.5 660.5Q556.1 640.7 559.3 624.5Q562.4 640.7 561.0 660.5Z" fill="#3aa022"/><path d="M550.5 660.5Q549.4 640.2 553.8 623.6Q556.1 640.2 554.2 660.5Z" fill="#2f9320"/><path d="M590.4 660.5Q591.3 637.2 600.0 618.1Q596.4 637.2 593.3 660.5Z" fill="#7ccf3c"/><path d="M576.1 660.5Q573.0 637.0 572.3 617.8Q580.3 637.0 580.1 660.5Z" fill="#4fb22b"/><path d="M573.5 660.5Q569.7 639.4 567.5 622.1Q577.6 639.4 577.9 660.5Z" fill="#4fb22b"/><path d="M587.4 660.5Q587.8 635.2 594.6 614.5Q592.7 635.2 590.1 660.5Z" fill="#3aa022"/><path d="M591.6 660.5Q590.9 638.7 596.0 621.0Q597.1 638.7 595.0 660.5Z" fill="#2f9320"/><path d="M581.6 660.5Q578.5 636.7 578.0 617.2Q586.2 636.7 586.0 660.5Z" fill="#4fb22b"/><path d="M591.4 660.5Q592.1 637.6 601.7 618.8Q598.5 637.6 595.0 660.5Z" fill="#55b830"/><path d="M595.1 660.5Q595.1 639.1 603.1 621.6Q602.1 639.1 599.0 660.5Z" fill="#55b830"/><path d="M592.9 660.5Q593.7 638.6 604.4 620.7Q600.6 638.6 596.7 660.5Z" fill="#55b830"/><path d="M580.5 660.5Q577.4 637.4 575.6 618.5Q583.9 637.4 584.1 660.5Z" fill="#2f9320"/><path d="M585.2 660.5Q584.3 640.6 589.9 624.4Q591.4 640.6 589.2 660.5Z" fill="#45aa26"/><path d="M585.9 660.5Q585.5 636.1 591.7 616.2Q591.8 636.1 589.4 660.5Z" fill="#237f16"/><path d="M592.3 660.5Q592.5 639.3 601.8 622.0Q600.0 639.3 596.5 660.5Z" fill="#3aa022"/><path d="M574.9 660.5Q571.7 640.1 568.9 623.4Q577.5 640.1 578.1 660.5Z" fill="#6cc436"/><path d="M588.1 660.5Q588.6 636.2 597.7 616.3Q595.2 636.2 591.8 660.5Z" fill="#3aa022"/><path d="M585.1 660.5Q584.4 635.7 588.9 615.5Q590.0 635.7 588.2 660.5Z" fill="#6cc436"/><path d="M595.0 660.5Q595.9 639.6 606.5 622.4Q602.6 639.6 598.7 660.5Z" fill="#7ccf3c"/><path d="M599.5 660.5Q601.0 641.4 612.5 625.7Q606.9 641.4 602.8 660.5Z" fill="#55b830"/><path d="M592.5 660.5Q592.0 641.6 598.5 626.1Q598.9 641.6 596.3 660.5Z" fill="#45aa26"/><path d="M578.1 660.5Q575.7 640.6 577.0 624.4Q583.0 640.6 582.1 660.5Z" fill="#237f16"/><path d="M598.4 660.5Q599.6 641.7 611.9 626.3Q607.0 641.7 602.5 660.5Z" fill="#55b830"/><path d="M588.5 660.5Q589.0 636.0 597.3 616.0Q594.8 636.0 591.7 660.5Z" fill="#3aa022"/><path d="M596.3 660.5Q597.0 640.1 604.7 623.4Q601.9 640.1 599.1 660.5Z" fill="#3c9d1f"/><path d="M583.2 660.5Q582.1 640.1 586.9 623.4Q589.0 640.1 587.0 660.5Z" fill="#6cc436"/><path d="M583.3 660.5Q581.9 640.0 585.0 623.3Q587.9 640.0 586.6 660.5Z" fill="#3aa022"/><path d="M587.5 660.5Q586.3 640.7 588.7 624.6Q591.4 640.7 590.3 660.5Z" fill="#4fb22b"/><path d="M572.8 660.5Q570.5 641.2 569.4 625.5Q575.5 641.2 575.6 660.5Z" fill="#6cc436"/><path d="M587.0 660.5Q585.7 635.8 587.7 615.7Q590.9 635.8 589.9 660.5Z" fill="#45aa26"/><path d="M577.8 660.5Q575.2 639.6 574.3 622.4Q581.1 639.6 581.1 660.5Z" fill="#3aa022"/><path d="M610.8 660.5Q610.3 635.2 616.3 614.4Q616.8 635.2 614.4 660.5Z" fill="#7ccf3c"/><path d="M618.4 660.5Q620.1 640.0 631.5 623.2Q625.3 640.0 621.2 660.5Z" fill="#45aa26"/><path d="M611.4 660.5Q611.7 638.2 617.9 620.0Q616.4 638.2 614.0 660.5Z" fill="#45aa26"/><path d="M605.9 660.5Q604.0 634.7 606.1 613.5Q610.6 634.7 609.6 660.5Z" fill="#45aa26"/><path d="M613.3 660.5Q612.4 637.4 617.0 618.5Q618.7 637.4 616.8 660.5Z" fill="#3c9d1f"/><path d="M613.8 660.5Q613.1 639.0 620.3 621.5Q621.0 639.0 618.1 660.5Z" fill="#45aa26"/><path d="M604.7 660.5Q602.5 639.6 603.0 622.5Q608.8 639.6 608.2 660.5Z" fill="#2f9320"/><path d="M619.5 660.5Q619.5 638.0 628.2 619.6Q626.9 638.0 623.6 660.5Z" fill="#2f9320"/><path d="M608.1 660.5Q606.4 637.4 608.6 618.5Q612.5 637.4 611.5 660.5Z" fill="#3c9d1f"/><path d="M606.3 660.5Q603.7 634.7 604.0 613.5Q610.6 634.7 610.1 660.5Z" fill="#45aa26"/><path d="M609.2 660.5Q608.3 635.2 614.7 614.6Q616.0 635.2 613.5 660.5Z" fill="#3aa022"/><path d="M609.8 660.5Q610.2 639.3 617.2 622.0Q614.9 639.3 612.4 660.5Z" fill="#8fd644"/><path d="M614.7 660.5Q614.7 635.2 621.3 614.6Q620.2 635.2 617.7 660.5Z" fill="#3aa022"/><path d="M619.6 660.5Q620.1 637.8 627.9 619.2Q625.7 637.8 622.8 660.5Z" fill="#4fb22b"/><path d="M598.6 660.5Q595.3 636.7 594.1 617.1Q602.8 636.7 602.8 660.5Z" fill="#45aa26"/><path d="M614.3 660.5Q615.1 640.4 624.8 623.9Q621.6 640.4 618.0 660.5Z" fill="#45aa26"/><path d="M614.8 660.5Q614.0 636.1 618.9 616.2Q620.5 636.1 618.4 660.5Z" fill="#2f9320"/><path d="M596.8 660.5Q592.3 640.3 587.3 623.8Q599.5 640.3 600.8 660.5Z" fill="#237f16"/><path d="M601.3 660.5Q598.0 637.4 596.0 618.4Q604.7 637.4 605.0 660.5Z" fill="#3c9d1f"/><path d="M604.3 660.5Q600.8 636.4 600.0 616.6Q609.0 636.4 608.9 660.5Z" fill="#2f9320"/><path d="M619.4 660.5Q620.1 641.0 628.2 625.0Q625.1 641.0 622.2 660.5Z" fill="#3c9d1f"/><path d="M605.7 660.5Q604.2 637.4 607.6 618.5Q611.0 637.4 609.5 660.5Z" fill="#6cc436"/><path d="M608.9 660.5Q607.7 640.2 610.1 623.5Q612.8 640.2 611.7 660.5Z" fill="#2f9320"/><path d="M609.9 660.5Q609.0 633.9 615.9 612.2Q617.0 633.9 614.3 660.5Z" fill="#2f9320"/><path d="M596.8 660.5Q591.9 639.1 586.0 621.5Q599.5 639.1 601.0 660.5Z" fill="#3aa022"/><path d="M615.3 660.5Q614.1 641.6 619.1 626.1Q621.3 641.6 619.2 660.5Z" fill="#7ccf3c"/><path d="M609.5 660.5Q608.2 636.4 611.0 616.7Q613.9 636.4 612.7 660.5Z" fill="#55b830"/><path d="M606.8 660.5Q604.7 638.7 605.3 620.8Q610.6 638.7 610.1 660.5Z" fill="#6cc436"/><path d="M604.2 660.5Q602.0 639.9 604.7 623.0Q610.1 639.9 608.7 660.5Z" fill="#8fd644"/><path d="M609.4 660.5Q606.8 633.8 607.6 612.0Q614.2 633.8 613.5 660.5Z" fill="#55b830"/><path d="M609.0 660.5Q607.7 636.9 610.6 617.7Q613.6 636.9 612.3 660.5Z" fill="#237f16"/><path d="M638.7 660.5Q637.5 641.1 639.5 625.3Q642.3 641.1 641.4 660.5Z" fill="#6cc436"/><path d="M645.6 660.5Q645.9 638.7 654.2 620.8Q652.5 638.7 649.3 660.5Z" fill="#7ccf3c"/><path d="M649.3 660.5Q649.2 639.3 657.0 622.0Q656.2 639.3 653.2 660.5Z" fill="#3c9d1f"/><path d="M642.8 660.5Q642.7 636.6 651.0 617.0Q650.0 636.6 646.8 660.5Z" fill="#7ccf3c"/><path d="M634.7 660.5Q630.4 641.6 624.9 626.2Q636.7 641.6 638.2 660.5Z" fill="#4fb22b"/><path d="M635.3 660.5Q632.1 637.9 629.1 619.4Q637.7 637.9 638.3 660.5Z" fill="#55b830"/><path d="M643.6 660.5Q642.7 636.9 648.0 617.5Q649.6 636.9 647.5 660.5Z" fill="#2f9320"/><path d="M651.9 660.5Q652.3 641.7 662.0 626.4Q659.4 641.7 655.8 660.5Z" fill="#2f9320"/><path d="M633.7 660.5Q630.1 637.4 628.9 618.5Q638.1 637.4 638.1 660.5Z" fill="#8fd644"/><path d="M641.9 660.5Q641.1 640.2 646.0 623.6Q647.3 640.2 645.3 660.5Z" fill="#4fb22b"/><path d="M637.3 660.5Q635.5 639.7 639.0 622.8Q643.0 639.7 641.5 660.5Z" fill="#45aa26"/><path d="M649.7 660.5Q649.3 640.0 654.8 623.2Q655.0 640.0 652.9 660.5Z" fill="#3aa022"/><path d="M641.7 660.5Q640.2 641.6 644.4 626.1Q647.7 641.6 645.9 660.5Z" fill="#2f9320"/><path d="M648.4 660.5Q648.4 639.6 656.2 622.5Q655.1 639.6 652.1 660.5Z" fill="#3c9d1f"/><path d="M646.3 660.5Q645.9 641.3 654.2 625.6Q654.0 641.3 650.7 660.5Z" fill="#6cc436"/><path d="M636.2 660.5Q634.1 638.1 636.9 619.8Q641.9 638.1 640.6 660.5Z" fill="#4fb22b"/><path d="M638.6 660.5Q637.6 637.2 641.1 618.2Q643.1 637.2 641.6 660.5Z" fill="#3c9d1f"/><path d="M651.3 660.5Q651.4 639.7 658.3 622.7Q657.0 639.7 654.4 660.5Z" fill="#8fd644"/><path d="M640.2 660.5Q638.9 641.5 642.1 625.9Q644.9 641.5 643.5 660.5Z" fill="#6cc436"/><path d="M640.7 660.5Q639.8 639.3 642.9 621.9Q644.9 639.3 643.5 660.5Z" fill="#8fd644"/><path d="M630.8 660.5Q627.4 641.5 624.7 625.9Q633.8 641.5 634.4 660.5Z" fill="#4fb22b"/><path d="M633.9 660.5Q631.8 637.1 633.3 617.9Q638.5 637.1 637.6 660.5Z" fill="#45aa26"/><path d="M642.7 660.5Q641.5 636.2 645.5 616.3Q648.0 636.2 646.3 660.5Z" fill="#3c9d1f"/><path d="M638.0 660.5Q637.5 639.2 644.3 621.8Q644.8 639.2 642.1 660.5Z" fill="#45aa26"/><path d="M637.4 660.5Q635.7 636.0 638.1 615.9Q642.1 636.0 640.9 660.5Z" fill="#4fb22b"/><path d="M627.8 660.5Q623.8 640.6 620.8 624.2Q631.7 640.6 632.2 660.5Z" fill="#8fd644"/><path d="M678.6 660.5Q679.5 639.9 690.3 623.0Q686.5 639.9 682.5 660.5Z" fill="#4fb22b"/><path d="M663.5 660.5Q660.9 636.0 662.6 615.9Q669.0 636.0 668.0 660.5Z" fill="#3aa022"/><path d="M672.1 660.5Q671.4 635.8 675.6 615.6Q676.8 635.8 675.1 660.5Z" fill="#3c9d1f"/><path d="M676.2 660.5Q676.6 638.6 685.2 620.7Q682.9 638.6 679.7 660.5Z" fill="#3aa022"/><path d="M661.9 660.5Q661.3 636.2 666.3 616.3Q667.1 636.2 665.1 660.5Z" fill="#6cc436"/><path d="M660.6 660.5Q658.7 641.6 659.8 626.1Q664.7 641.6 664.0 660.5Z" fill="#8fd644"/><path d="M664.3 660.5Q662.2 635.3 662.2 614.6Q667.6 635.3 667.3 660.5Z" fill="#8fd644"/><path d="M677.0 660.5Q680.0 640.6 695.4 624.2Q685.5 640.6 680.0 660.5Z" fill="#6cc436"/><path d="M671.7 660.5Q671.2 639.1 678.0 621.5Q678.4 639.1 675.8 660.5Z" fill="#2f9320"/><path d="M663.7 660.5Q662.2 635.9 663.4 615.8Q666.9 635.9 666.3 660.5Z" fill="#2f9320"/><path d="M671.1 660.5Q669.6 638.4 673.1 620.4Q676.3 638.4 674.8 660.5Z" fill="#7ccf3c"/><path d="M670.4 660.5Q669.7 640.7 677.1 624.6Q677.8 640.7 674.9 660.5Z" fill="#4fb22b"/><path d="M672.5 660.5Q672.2 640.8 679.4 624.7Q679.0 640.8 676.2 660.5Z" fill="#8fd644"/><path d="M668.6 660.5Q667.3 637.4 669.5 618.5Q672.7 637.4 671.7 660.5Z" fill="#4fb22b"/><path d="M673.3 660.5Q673.0 636.0 679.4 615.9Q679.2 636.0 676.7 660.5Z" fill="#3aa022"/><path d="M651.9 660.5Q647.9 640.6 645.1 624.3Q655.8 640.6 656.3 660.5Z" fill="#45aa26"/><path d="M661.4 660.5Q660.6 636.1 665.5 616.1Q666.8 636.1 664.9 660.5Z" fill="#237f16"/><path d="M661.4 660.5Q659.2 637.4 661.0 618.5Q666.4 637.4 665.4 660.5Z" fill="#2f9320"/><path d="M671.4 660.5Q671.1 637.3 678.1 618.3Q677.9 637.3 675.1 660.5Z" fill="#6cc436"/><path d="M666.1 660.5Q664.9 635.4 670.7 614.8Q673.0 635.4 670.6 660.5Z" fill="#3c9d1f"/><path d="M665.9 660.5Q663.3 638.0 663.9 619.6Q670.4 638.0 669.9 660.5Z" fill="#3aa022"/><path d="M659.0 660.5Q656.0 637.5 656.6 618.6Q664.1 637.5 663.5 660.5Z" fill="#4fb22b"/><path d="M658.9 660.5Q655.8 636.1 656.1 616.2Q664.0 636.1 663.5 660.5Z" fill="#45aa26"/><path d="M671.9 660.5Q671.0 639.2 677.9 621.7Q679.1 639.2 676.4 660.5Z" fill="#3c9d1f"/><path d="M657.6 660.5Q655.1 640.6 655.3 624.4Q661.6 640.6 661.1 660.5Z" fill="#6cc436"/><path d="M671.2 660.5Q671.0 640.1 677.2 623.5Q676.7 640.1 674.3 660.5Z" fill="#3aa022"/><path d="M666.9 660.5Q664.9 635.7 667.0 615.4Q672.0 635.7 670.9 660.5Z" fill="#4fb22b"/><path d="M663.6 660.5Q661.9 637.2 663.5 618.2Q667.6 637.2 666.8 660.5Z" fill="#237f16"/><path d="M658.7 660.5Q654.8 637.9 652.5 619.5Q662.9 637.9 663.2 660.5Z" fill="#3c9d1f"/><path d="M655.8 660.5Q653.4 640.1 652.4 623.4Q658.7 640.1 658.7 660.5Z" fill="#45aa26"/><path d="M702.5 660.5Q702.2 640.0 707.5 623.3Q707.6 640.0 705.5 660.5Z" fill="#3aa022"/><path d="M685.3 660.5Q682.5 638.9 679.7 621.3Q687.3 638.9 687.9 660.5Z" fill="#3aa022"/><path d="M694.2 660.5Q693.2 639.8 696.2 622.8Q698.5 639.8 697.2 660.5Z" fill="#4fb22b"/><path d="M691.2 660.5Q690.9 634.8 695.5 613.7Q695.7 634.8 693.9 660.5Z" fill="#45aa26"/><path d="M695.2 660.5Q694.6 640.3 699.9 623.7Q700.9 640.3 698.8 660.5Z" fill="#45aa26"/><path d="M684.7 660.5Q681.8 639.9 680.6 623.0Q688.2 639.9 688.2 660.5Z" fill="#55b830"/><path d="M682.6 660.5Q680.7 641.8 681.8 626.4Q686.4 641.8 685.7 660.5Z" fill="#45aa26"/><path d="M682.4 660.5Q678.3 641.6 674.8 626.1Q685.8 641.6 686.6 660.5Z" fill="#6cc436"/><path d="M686.2 660.5Q684.0 640.8 686.8 624.6Q692.1 640.8 690.7 660.5Z" fill="#237f16"/><path d="M696.9 660.5Q695.5 636.4 698.3 616.6Q701.7 636.4 700.4 660.5Z" fill="#55b830"/><path d="M690.5 660.5Q688.1 636.1 689.9 616.1Q695.7 636.1 694.7 660.5Z" fill="#45aa26"/><path d="M696.6 660.5Q696.1 636.6 702.2 617.0Q702.4 636.6 700.1 660.5Z" fill="#8fd644"/><path d="M693.5 660.5Q691.7 640.8 694.8 624.7Q698.8 640.8 697.4 660.5Z" fill="#2f9320"/><path d="M691.0 660.5Q689.6 635.1 691.8 614.4Q695.1 635.1 694.1 660.5Z" fill="#8fd644"/><path d="M692.4 660.5Q691.5 638.5 696.4 620.5Q698.1 638.5 696.0 660.5Z" fill="#3aa022"/><path d="M690.5 660.5Q688.3 640.2 687.9 623.5Q693.6 640.2 693.4 660.5Z" fill="#55b830"/><path d="M693.7 660.5Q691.1 636.7 692.9 617.2Q699.3 636.7 698.2 660.5Z" fill="#55b830"/><path d="M683.5 660.5Q680.8 640.9 681.3 624.8Q688.3 640.9 687.7 660.5Z" fill="#6cc436"/><path d="M694.7 660.5Q694.0 638.0 698.3 619.7Q699.3 638.0 697.6 660.5Z" fill="#3c9d1f"/><path d="M686.5 660.5Q684.2 641.2 684.6 625.5Q690.7 641.2 690.2 660.5Z" fill="#237f16"/><path d="M701.1 660.5Q700.7 640.1 706.5 623.4Q706.5 640.1 704.3 660.5Z" fill="#45aa26"/><path d="M694.6 660.5Q693.8 638.9 698.9 621.3Q700.2 638.9 698.2 660.5Z" fill="#55b830"/><path d="M695.0 660.5Q693.3 638.6 696.9 620.7Q701.0 638.6 699.4 660.5Z" fill="#7ccf3c"/><path d="M692.6 660.5Q690.5 638.4 693.3 620.3Q698.5 638.4 697.1 660.5Z" fill="#6cc436"/><path d="M689.0 660.5Q686.7 638.5 687.9 620.5Q693.6 638.5 692.8 660.5Z" fill="#55b830"/><path d="M703.2 660.5Q704.8 638.6 717.2 620.6Q711.5 638.6 707.0 660.5Z" fill="#45aa26"/><path d="M688.3 660.5Q685.8 638.3 684.7 620.1Q691.0 638.3 691.1 660.5Z" fill="#45aa26"/><path d="M688.7 660.5Q685.4 641.3 684.7 625.7Q693.3 641.3 693.1 660.5Z" fill="#4fb22b"/><path d="M694.3 660.5Q692.9 640.3 697.0 623.9Q700.3 640.3 698.5 660.5Z" fill="#7ccf3c"/><path d="M690.0 660.5Q687.6 635.5 687.9 615.0Q693.9 635.5 693.5 660.5Z" fill="#237f16"/><path d="M696.5 660.5Q696.0 637.0 703.7 617.8Q703.9 637.0 700.9 660.5Z" fill="#7ccf3c"/><path d="M276.3 660.5Q274.8 647.8 282.3 637.5Q285.1 647.8 282.1 660.5Z" fill="#2f9320"/><path d="M73.9 660.5Q69.0 642.8 63.0 628.3Q76.5 642.8 78.0 660.5Z" fill="#2f9320"/><path d="M16.7 660.5Q15.5 645.3 24.5 632.8Q26.2 645.3 22.6 660.5Z" fill="#45aa26"/><path d="M225.4 660.5Q220.5 648.1 216.7 637.9Q230.0 648.1 230.7 660.5Z" fill="#2a8a18"/><path d="M482.7 660.5Q481.2 644.1 484.8 630.6Q488.2 644.1 486.6 660.5Z" fill="#2a8a18"/><path d="M4.9 660.5Q3.0 643.2 7.4 629.0Q11.8 643.2 9.8 660.5Z" fill="#1f7d14"/><path d="M674.0 660.5Q674.5 646.8 684.5 635.6Q681.6 646.8 677.9 660.5Z" fill="#2a8a18"/><path d="M212.0 660.5Q207.2 644.4 202.1 631.2Q215.0 644.4 216.3 660.5Z" fill="#1f7d14"/><path d="M75.8 660.5Q75.5 647.6 85.2 637.1Q84.5 647.6 80.8 660.5Z" fill="#45aa26"/><path d="M533.6 660.5Q530.2 647.5 532.0 636.8Q540.6 647.5 539.4 660.5Z" fill="#55b830"/><path d="M35.0 660.5Q34.0 642.2 39.2 627.2Q41.3 642.2 39.1 660.5Z" fill="#3aa022"/><path d="M462.9 660.5Q461.7 646.4 469.7 634.8Q471.7 646.4 468.5 660.5Z" fill="#237f16"/><path d="M167.4 660.5Q164.8 643.6 169.0 629.8Q175.1 643.6 173.1 660.5Z" fill="#237f16"/><path d="M600.2 660.5Q598.2 642.2 599.6 627.3Q604.6 642.2 603.8 660.5Z" fill="#3c9d1f"/><path d="M617.2 660.5Q617.9 645.0 632.0 632.4Q627.9 645.0 622.7 660.5Z" fill="#2f9320"/><path d="M669.5 660.5Q665.9 645.6 664.2 633.4Q673.9 645.6 674.0 660.5Z" fill="#3c9d1f"/><path d="M615.9 660.5Q613.6 647.7 614.3 637.3Q619.9 647.7 619.3 660.5Z" fill="#2a8a18"/><path d="M627.9 660.5Q627.8 642.0 634.6 627.0Q633.7 642.0 631.1 660.5Z" fill="#2a8a18"/><path d="M47.9 660.5Q46.0 648.9 49.9 639.5Q54.1 648.9 52.4 660.5Z" fill="#237f16"/><path d="M218.8 660.5Q215.7 645.6 215.6 633.4Q223.4 645.6 223.0 660.5Z" fill="#4fb22b"/><path d="M446.3 660.5Q440.0 642.1 432.1 627.1Q449.4 642.1 451.6 660.5Z" fill="#1f7d14"/><path d="M521.9 660.5Q520.3 646.6 527.9 635.2Q530.7 646.6 527.6 660.5Z" fill="#45aa26"/><path d="M414.9 660.5Q410.9 642.7 408.0 628.1Q418.8 642.7 419.3 660.5Z" fill="#4fb22b"/><path d="M158.9 660.5Q156.7 647.8 160.2 637.4Q165.2 647.8 163.6 660.5Z" fill="#4fb22b"/><path d="M491.7 660.5Q490.2 648.5 495.9 638.6Q498.9 648.5 496.5 660.5Z" fill="#237f16"/><path d="M13.8 660.5Q11.1 648.4 15.7 638.5Q21.9 648.4 19.8 660.5Z" fill="#237f16"/><path d="M369.9 660.5Q368.8 642.7 373.6 628.2Q375.7 642.7 373.7 660.5Z" fill="#3c9d1f"/><path d="M426.6 660.5Q423.1 649.0 421.4 639.6Q430.7 649.0 430.8 660.5Z" fill="#3c9d1f"/><path d="M305.9 660.5Q303.2 646.4 303.2 634.8Q310.0 646.4 309.6 660.5Z" fill="#1f7d14"/><path d="M701.1 660.5Q694.3 645.2 686.2 632.8Q704.9 645.2 707.0 660.5Z" fill="#2f9320"/><path d="M385.3 660.5Q382.4 645.4 386.1 633.0Q393.0 645.4 391.2 660.5Z" fill="#3aa022"/><path d="M637.4 660.5Q635.1 648.1 635.1 638.0Q641.0 648.1 640.6 660.5Z" fill="#4fb22b"/><path d="M388.6 660.5Q387.6 643.2 396.6 629.1Q398.0 643.2 394.4 660.5Z" fill="#2f9320"/><path d="M355.7 660.5Q352.1 642.1 352.9 627.0Q362.1 642.1 361.3 660.5Z" fill="#3c9d1f"/><path d="M636.9 660.5Q630.4 641.6 620.8 626.2Q639.0 641.6 641.7 660.5Z" fill="#237f16"/><path d="M107.1 660.5Q105.5 645.9 107.5 633.9Q111.4 645.9 110.4 660.5Z" fill="#237f16"/><path d="M425.2 660.5Q423.0 647.4 426.1 636.6Q431.3 647.4 429.8 660.5Z" fill="#2f9320"/><path d="M35.7 660.5Q35.6 643.1 46.7 628.9Q45.4 643.1 41.2 660.5Z" fill="#3c9d1f"/><path d="M114.7 660.5Q111.1 643.0 111.8 628.8Q121.0 643.0 120.2 660.5Z" fill="#2f9320"/><path d="M426.2 660.5Q424.3 642.0 426.7 626.9Q431.1 642.0 430.0 660.5Z" fill="#45aa26"/><path d="M510.4 660.5Q506.3 648.6 501.8 638.9Q513.1 648.6 514.2 660.5Z" fill="#237f16"/><path d="M653.9 660.5Q652.2 649.1 659.3 639.7Q662.7 649.1 659.7 660.5Z" fill="#2f9320"/><path d="M615.0 660.5Q615.3 642.3 625.4 627.5Q623.1 642.3 619.4 660.5Z" fill="#2a8a18"/><path d="M323.6 660.5Q319.7 644.2 320.4 630.9Q330.4 644.2 329.6 660.5Z" fill="#2a8a18"/><path d="M287.0 660.5Q286.2 643.5 295.6 629.7Q296.4 643.5 292.7 660.5Z" fill="#2a8a18"/><path d="M437.1 660.5Q435.6 647.0 438.8 636.0Q442.2 647.0 440.8 660.5Z" fill="#2f9320"/><path d="M314.3 660.5Q311.8 648.3 312.8 638.4Q319.1 648.3 318.3 660.5Z" fill="#237f16"/><path d="M337.6 660.5Q334.7 645.9 338.4 633.9Q345.4 645.9 343.6 660.5Z" fill="#2f9320"/><path d="M333.6 660.5Q329.5 647.2 326.9 636.3Q337.8 647.2 338.2 660.5Z" fill="#3aa022"/><path d="M117.5 660.5Q115.2 648.9 119.1 639.4Q124.5 648.9 122.7 660.5Z" fill="#2a8a18"/><path d="M283.8 660.5Q280.1 646.6 279.8 635.2Q289.4 646.6 289.0 660.5Z" fill="#237f16"/><path d="M455.5 660.5Q454.2 645.7 461.7 633.5Q464.1 645.7 461.1 660.5Z" fill="#3aa022"/><path d="M2.1 660.5Q-0.2 642.5 3.5 627.8Q8.8 642.5 7.0 660.5Z" fill="#4fb22b"/><path d="M283.2 660.5Q279.7 645.9 277.8 634.0Q286.9 645.9 287.2 660.5Z" fill="#3aa022"/><path d="M460.7 660.5Q461.8 643.3 475.4 629.3Q470.7 643.3 465.7 660.5Z" fill="#4fb22b"/><path d="M602.2 660.5Q600.3 643.0 604.9 628.6Q609.1 643.0 607.0 660.5Z" fill="#4fb22b"/><path d="M153.5 660.5Q152.9 642.9 161.6 628.5Q161.9 642.9 158.5 660.5Z" fill="#1f7d14"/><path d="M79.2 660.5Q79.2 642.1 90.4 627.0Q89.0 642.1 84.7 660.5Z" fill="#1f7d14"/><path d="M435.3 660.5Q431.9 642.8 431.7 628.4Q440.3 642.8 440.0 660.5Z" fill="#1f7d14"/><path d="M245.5 660.5Q243.7 645.1 250.7 632.5Q254.2 645.1 251.3 660.5Z" fill="#4fb22b"/><path d="M663.6 660.5Q661.6 648.5 665.6 638.8Q670.2 648.5 668.3 660.5Z" fill="#1f7d14"/><path d="M10.2 660.5Q11.6 642.9 22.9 628.5Q17.7 642.9 13.6 660.5Z" fill="#55b830"/><path d="M645.5 660.5Q643.0 645.1 647.0 632.4Q652.9 645.1 651.0 660.5Z" fill="#237f16"/><path d="M665.2 660.5Q665.6 646.4 674.0 634.8Q671.7 646.4 668.6 660.5Z" fill="#2f9320"/><path d="M40.5 660.5Q40.1 642.9 45.7 628.4Q46.1 642.9 43.9 660.5Z" fill="#1f7d14"/><path d="M83.7 660.5Q82.6 641.5 91.2 625.9Q92.9 641.5 89.5 660.5Z" fill="#2a8a18"/><path d="M669.4 660.5Q667.9 645.0 675.4 632.2Q678.3 645.0 675.2 660.5Z" fill="#237f16"/><path d="M592.3 660.5Q590.1 649.2 593.0 639.9Q598.4 649.2 596.9 660.5Z" fill="#3c9d1f"/><path d="M271.5 660.5Q271.8 648.7 283.2 639.1Q280.6 648.7 276.3 660.5Z" fill="#1f7d14"/><path d="M25.3 660.5Q21.5 649.0 17.5 639.7Q27.8 649.0 28.8 660.5Z" fill="#1f7d14"/><path d="M231.0 660.5Q230.7 643.8 237.1 630.1Q237.0 643.8 234.5 660.5Z" fill="#2f9320"/><path d="M429.6 660.5Q429.2 644.0 440.4 630.4Q439.8 644.0 435.5 660.5Z" fill="#2a8a18"/><path d="M83.6 660.5Q80.9 642.4 82.1 627.6Q88.9 642.4 88.1 660.5Z" fill="#2f9320"/><path d="M689.4 660.5Q689.1 641.3 699.3 625.6Q698.5 641.3 694.6 660.5Z" fill="#237f16"/><path d="M115.0 660.5Q113.8 642.1 120.6 627.1Q122.8 642.1 120.1 660.5Z" fill="#2f9320"/><path d="M374.8 660.5Q370.8 643.9 365.7 630.3Q376.7 643.9 378.1 660.5Z" fill="#2f9320"/><path d="M387.0 660.5Q387.8 642.2 397.2 627.2Q393.7 642.2 390.2 660.5Z" fill="#4fb22b"/><path d="M236.3 660.5Q234.2 646.2 240.0 634.6Q244.7 646.2 242.2 660.5Z" fill="#1f7d14"/><path d="M647.4 660.5Q646.5 644.9 652.6 632.1Q654.2 644.9 651.7 660.5Z" fill="#3c9d1f"/><path d="M455.9 660.5Q454.5 645.4 462.6 633.0Q464.9 645.4 461.6 660.5Z" fill="#3c9d1f"/><path d="M363.0 660.5Q361.6 649.5 368.0 640.4Q370.7 649.5 368.1 660.5Z" fill="#45aa26"/><path d="M268.1 660.5Q264.5 644.0 262.3 630.6Q271.9 644.0 272.2 660.5Z" fill="#2f9320"/><path d="M676.3 660.5Q673.3 641.8 673.2 626.6Q680.9 641.8 680.5 660.5Z" fill="#1f7d14"/><path d="M702.9 660.5Q699.7 647.8 700.8 637.3Q708.8 647.8 707.9 660.5Z" fill="#45aa26"/><path d="M580.4 660.5Q577.6 641.3 580.4 625.6Q587.2 641.3 585.7 660.5Z" fill="#1f7d14"/><path d="M566.4 660.5Q562.8 646.7 562.3 635.4Q571.5 646.7 571.2 660.5Z" fill="#3aa022"/><path d="M344.1 660.5Q342.5 647.2 350.0 636.4Q353.0 647.2 349.9 660.5Z" fill="#55b830"/><path d="M31.2 660.5Q29.5 646.0 31.4 634.1Q35.7 646.0 34.7 660.5Z" fill="#237f16"/><path d="M642.4 660.5Q636.8 644.7 627.4 631.7Q643.0 644.7 645.8 660.5Z" fill="#55b830"/><path d="M92.0 660.5Q91.8 646.4 103.1 634.9Q102.0 646.4 97.7 660.5Z" fill="#45aa26"/><path d="M616.0 660.5Q613.7 645.9 617.7 633.9Q623.1 645.9 621.2 660.5Z" fill="#4fb22b"/><path d="M258.8 660.5Q255.0 649.2 255.4 640.0Q265.0 649.2 264.3 660.5Z" fill="#1f7d14"/><path d="M149.4 660.5Q146.8 644.1 151.0 630.7Q157.2 644.1 155.2 660.5Z" fill="#3aa022"/><path d="M706.1 660.5Q706.1 646.0 716.1 634.1Q714.7 646.0 710.9 660.5Z" fill="#55b830"/><path d="M457.2 660.5Q454.0 647.2 455.4 636.3Q463.2 647.2 462.3 660.5Z" fill="#3c9d1f"/><path d="M333.0 660.5Q329.5 648.5 330.2 638.7Q339.1 648.5 338.3 660.5Z" fill="#237f16"/><path d="M573.4 660.5Q568.1 647.1 563.2 636.1Q577.6 647.1 578.7 660.5Z" fill="#237f16"/><path d="M246.9 660.5Q242.2 642.5 240.1 627.7Q252.3 642.5 252.5 660.5Z" fill="#1f7d14"/><path d="M575.8 660.5Q572.7 649.2 575.2 640.0Q582.8 649.2 581.4 660.5Z" fill="#1f7d14"/><path d="M150.1 660.5Q148.0 644.5 153.4 631.5Q158.1 644.5 155.8 660.5Z" fill="#2a8a18"/><path d="M515.9 660.5Q515.6 646.7 522.4 635.4Q522.1 646.7 519.5 660.5Z" fill="#55b830"/><path d="M83.0 660.5Q80.6 648.0 83.2 637.7Q88.9 648.0 87.6 660.5Z" fill="#2a8a18"/><path d="M114.7 660.5Q113.8 642.0 119.3 626.9Q120.7 642.0 118.5 660.5Z" fill="#1f7d14"/><path d="M645.1 660.5Q646.7 647.7 663.5 637.2Q657.0 647.7 650.8 660.5Z" fill="#45aa26"/><path d="M211.9 660.5Q211.7 641.3 221.6 625.6Q220.6 641.3 216.9 660.5Z" fill="#2f9320"/><path d="M148.4 660.5Q147.4 646.1 153.7 634.3Q155.5 646.1 152.9 660.5Z" fill="#2a8a18"/><path d="M481.5 660.5Q479.5 643.4 485.2 629.3Q489.4 643.4 487.0 660.5Z" fill="#2f9320"/><path d="M652.9 660.5Q653.1 648.2 664.4 638.1Q662.3 648.2 658.1 660.5Z" fill="#3aa022"/><path d="M223.7 660.5Q225.6 642.2 240.7 627.2Q233.7 642.2 228.2 660.5Z" fill="#1f7d14"/><path d="M397.6 660.5Q393.6 648.7 391.2 639.0Q401.8 648.7 402.2 660.5Z" fill="#45aa26"/><path d="M231.5 660.5Q231.7 646.7 239.7 635.4Q238.0 646.7 235.0 660.5Z" fill="#237f16"/><path d="M352.0 660.5Q351.4 647.2 358.5 636.3Q358.9 647.2 356.1 660.5Z" fill="#45aa26"/><path d="M386.9 660.5Q386.9 646.9 394.0 635.8Q393.2 646.9 390.5 660.5Z" fill="#1f7d14"/><path d="M320.5 660.5Q318.6 646.5 324.2 635.0Q328.3 646.5 325.9 660.5Z" fill="#4fb22b"/><path d="M490.9 660.5Q489.7 645.5 498.6 633.3Q500.3 645.5 496.8 660.5Z" fill="#4fb22b"/><path d="M473.2 660.5Q470.6 646.5 473.3 635.1Q479.5 646.5 478.1 660.5Z" fill="#1f7d14"/><path d="M205.9 660.5Q203.5 643.6 205.4 629.9Q211.4 643.6 210.3 660.5Z" fill="#2f9320"/><path d="M390.4 660.5Q386.0 647.8 382.5 637.4Q394.3 647.8 395.1 660.5Z" fill="#2a8a18"/><path d="M533.0 660.5Q532.9 647.5 539.8 636.9Q539.2 647.5 536.5 660.5Z" fill="#2f9320"/><path d="M479.9 660.5Q479.7 643.6 485.7 629.8Q485.5 643.6 483.1 660.5Z" fill="#1f7d14"/><path d="M689.6 660.5Q686.8 648.8 689.0 639.2Q696.0 648.8 694.8 660.5Z" fill="#3aa022"/><path d="M292.8 660.5Q295.0 642.1 311.9 627.0Q303.7 642.1 297.6 660.5Z" fill="#237f16"/><path d="M7.5 660.5Q7.8 647.8 15.8 637.5Q14.0 647.8 11.0 660.5Z" fill="#2a8a18"/><path d="M187.6 660.5Q189.1 642.2 203.5 627.3Q197.5 642.2 192.2 660.5Z" fill="#2a8a18"/><path d="M476.7 660.5Q475.2 646.3 481.0 634.7Q484.0 646.3 481.6 660.5Z" fill="#3c9d1f"/><path d="M694.0 660.5Q691.9 648.6 696.6 638.8Q701.4 648.6 699.3 660.5Z" fill="#1f7d14"/><path d="M363.6 660.5Q362.6 646.0 366.4 634.1Q368.5 646.0 366.9 660.5Z" fill="#1f7d14"/><path d="M702.9 660.5Q700.6 644.4 704.2 631.2Q709.7 644.4 708.0 660.5Z" fill="#237f16"/><path d="M261.9 660.5Q263.2 646.5 276.0 635.0Q270.8 646.5 266.1 660.5Z" fill="#3aa022"/><path d="M98.8 660.5Q100.7 648.2 113.9 638.1Q107.2 648.2 102.4 660.5Z" fill="#45aa26"/><path d="M564.0 660.5Q561.7 648.5 562.0 638.6Q567.9 648.5 567.5 660.5Z" fill="#2f9320"/><path d="M291.4 660.5Q292.5 645.0 302.7 632.3Q298.3 645.0 294.6 660.5Z" fill="#1f7d14"/><path d="M164.8 660.5Q162.7 648.3 168.5 638.4Q173.0 648.3 170.5 660.5Z" fill="#2a8a18"/><path d="M169.2 660.5Q167.3 648.7 171.1 639.1Q175.4 648.7 173.7 660.5Z" fill="#237f16"/><path d="M301.9 660.5Q304.7 645.6 325.9 633.4Q315.5 645.6 307.8 660.5Z" fill="#1f7d14"/><path d="M318.5 660.5Q317.6 645.3 327.0 633.0Q328.0 645.3 324.3 660.5Z" fill="#45aa26"/><path d="M654.2 660.5Q651.8 647.9 656.0 637.5Q661.4 647.9 659.5 660.5Z" fill="#2a8a18"/><path d="M458.6 660.5Q460.5 646.0 474.4 634.1Q467.8 646.0 462.7 660.5Z" fill="#3aa022"/><path d="M550.9 660.5Q548.6 645.8 551.2 633.8Q556.6 645.8 555.3 660.5Z" fill="#2a8a18"/><path d="M499.6 660.5Q497.0 646.0 496.9 634.1Q503.6 646.0 503.2 660.5Z" fill="#1f7d14"/><path d="M350.7 660.5Q348.2 641.3 352.2 625.7Q358.0 641.3 356.2 660.5Z" fill="#55b830"/><path d="M39.4 660.5Q34.5 645.3 28.3 632.9Q41.9 645.3 43.5 660.5Z" fill="#2a8a18"/><path d="M367.9 660.5Q367.1 643.3 372.8 629.3Q374.0 643.3 371.8 660.5Z" fill="#2f9320"/><path d="M305.9 660.5Q306.4 644.0 315.2 630.6Q312.7 644.0 309.4 660.5Z" fill="#2f9320"/><path d="M0.8 660.5Q-1.6 647.7 -1.7 637.2Q4.6 647.7 4.3 660.5Z" fill="#4fb22b"/><path d="M202.3 660.5Q201.5 646.5 207.4 635.0Q208.6 646.5 206.2 660.5Z" fill="#4fb22b"/><path d="M474.0 660.5Q469.7 647.7 466.3 637.2Q477.7 647.7 478.4 660.5Z" fill="#237f16"/><path d="M58.4 660.5Q58.7 649.0 67.4 639.6Q65.4 649.0 62.1 660.5Z" fill="#1f7d14"/><path d="M651.3 660.5Q647.5 648.7 643.9 639.0Q654.2 648.7 655.0 660.5Z" fill="#4fb22b"/><path d="M654.5 660.5Q652.7 644.9 656.6 632.1Q660.7 644.9 658.9 660.5Z" fill="#2a8a18"/><path d="M660.8 660.5Q657.9 642.8 658.7 628.3Q666.1 642.8 665.3 660.5Z" fill="#237f16"/><path d="M466.7 660.5Q465.4 649.3 469.3 640.1Q472.1 649.3 470.4 660.5Z" fill="#3c9d1f"/><path d="M30.1 660.5Q28.7 643.6 33.3 629.8Q36.1 643.6 34.2 660.5Z" fill="#1f7d14"/><path d="M154.9 660.5Q152.4 641.7 153.2 626.3Q159.5 641.7 158.9 660.5Z" fill="#237f16"/><path d="M490.8 660.5Q488.1 646.5 492.3 635.0Q498.8 646.5 496.8 660.5Z" fill="#2f9320"/><path d="M125.2 660.5Q121.7 648.4 121.3 638.5Q130.2 648.4 129.9 660.5Z" fill="#237f16"/><path d="M611.3 660.5Q611.5 644.2 623.0 630.9Q620.9 644.2 616.6 660.5Z" fill="#2a8a18"/><path d="M571.6 660.5Q573.4 648.7 587.0 639.1Q580.3 648.7 575.4 660.5Z" fill="#237f16"/><path d="M28.0 660.5Q31.1 646.6 49.0 635.2Q38.5 646.6 32.1 660.5Z" fill="#3c9d1f"/><path d="M555.7 660.5Q549.0 642.4 539.1 627.5Q557.7 642.4 560.5 660.5Z" fill="#4fb22b"/><path d="M555.5 660.5Q552.3 642.6 550.6 627.9Q559.1 642.6 559.3 660.5Z" fill="#3c9d1f"/><path d="M237.2 660.5Q235.0 646.4 238.1 634.9Q243.4 646.4 241.9 660.5Z" fill="#45aa26"/><path d="M701.1 660.5Q699.3 644.4 700.5 631.2Q705.1 644.4 704.4 660.5Z" fill="#237f16"/><path d="M469.2 660.5Q466.4 648.0 468.0 637.7Q474.9 648.0 473.9 660.5Z" fill="#1f7d14"/><path d="M82.2 660.5Q78.5 644.3 77.1 631.1Q86.7 644.3 86.7 660.5Z" fill="#3c9d1f"/><path d="M655.1 660.5Q654.0 645.3 659.8 632.8Q661.7 645.3 659.3 660.5Z" fill="#1f7d14"/><path d="M206.0 660.5Q205.9 642.7 214.1 628.0Q213.3 642.7 210.1 660.5Z" fill="#4fb22b"/><path d="M149.1 660.5Q147.7 645.8 152.4 633.7Q155.3 645.8 153.3 660.5Z" fill="#1f7d14"/><path d="M320.3 660.5Q316.2 648.8 315.6 639.2Q326.2 648.8 325.8 660.5Z" fill="#55b830"/><path d="M304.9 660.5Q305.6 643.4 315.8 629.5Q312.6 643.4 308.8 660.5Z" fill="#2a8a18"/><path d="M490.7 660.5Q491.2 647.2 499.4 636.4Q497.1 647.2 494.0 660.5Z" fill="#45aa26"/><path d="M369.6 660.5Q368.0 644.0 375.4 630.4Q378.6 644.0 375.5 660.5Z" fill="#55b830"/><path d="M561.9 660.5Q556.7 646.7 552.0 635.4Q566.2 646.7 567.2 660.5Z" fill="#237f16"/><path d="M344.3 660.5Q343.2 646.5 348.5 635.0Q350.4 646.5 348.2 660.5Z" fill="#2f9320"/><path d="M27.8 660.5Q24.3 648.4 26.3 638.5Q34.9 648.4 33.6 660.5Z" fill="#1f7d14"/><path d="M296.1 660.5Q295.5 646.9 306.2 635.8Q306.2 646.9 302.0 660.5Z" fill="#237f16"/><path d="M504.1 660.5Q505.4 646.6 517.2 635.2Q512.4 646.6 508.0 660.5Z" fill="#1f7d14"/><path d="M602.5 660.5Q601.8 642.2 609.1 627.1Q609.8 642.2 606.9 660.5Z" fill="#2f9320"/><path d="M106.2 660.5Q103.6 643.0 104.3 628.7Q110.8 643.0 110.1 660.5Z" fill="#3aa022"/><path d="M280.3 660.5Q278.6 644.6 282.0 631.6Q285.7 644.6 284.2 660.5Z" fill="#1f7d14"/><path d="M276.5 660.5Q275.8 648.0 280.9 637.7Q282.1 648.0 280.0 660.5Z" fill="#2a8a18"/><path d="M233.9 660.5Q228.7 643.9 223.6 630.3Q237.7 643.9 238.9 660.5Z" fill="#2f9320"/><path d="M145.1 660.5Q142.4 644.7 141.7 631.8Q148.7 644.7 148.6 660.5Z" fill="#3c9d1f"/><path d="M605.4 660.5Q603.2 642.0 604.7 626.9Q610.1 642.0 609.2 660.5Z" fill="#45aa26"/><path d="M546.0 660.5Q546.0 642.2 555.8 627.3Q554.4 642.2 550.6 660.5Z" fill="#45aa26"/><path d="M62.0 660.5Q62.2 645.7 71.1 633.6Q69.2 645.7 65.8 660.5Z" fill="#2f9320"/><path d="M219.3 660.5Q215.1 646.1 209.8 634.3Q221.4 646.1 222.8 660.5Z" fill="#237f16"/><path d="M168.7 660.5Q170.4 642.4 183.7 627.7Q177.4 642.4 172.6 660.5Z" fill="#45aa26"/><path d="M168.8 660.5Q164.6 644.3 160.8 631.0Q171.9 644.3 172.8 660.5Z" fill="#2f9320"/><path d="M548.1 660.5Q545.4 645.5 549.8 633.3Q556.1 645.5 554.1 660.5Z" fill="#1f7d14"/><path d="M468.6 660.5Q465.6 645.7 467.0 633.6Q474.4 645.7 473.4 660.5Z" fill="#2f9320"/><path d="M386.6 660.5Q383.7 646.3 386.4 634.7Q393.5 646.3 392.0 660.5Z" fill="#2a8a18"/><path d="M692.2 660.5Q689.9 643.2 694.8 629.1Q700.1 643.2 697.9 660.5Z" fill="#1f7d14"/><path d="M326.3 660.5Q320.3 647.7 309.0 637.3Q326.1 647.7 329.5 660.5Z" fill="#2a8a18"/><path d="M640.3 660.5Q640.6 648.0 650.8 637.7Q648.6 648.0 644.8 660.5Z" fill="#3c9d1f"/><path d="M244.4 660.5Q242.4 646.5 247.2 635.0Q251.7 646.5 249.6 660.5Z" fill="#2a8a18"/><path d="M360.6 660.5Q356.4 645.4 351.5 633.1Q363.2 645.4 364.4 660.5Z" fill="#237f16"/><path d="M251.6 660.5Q252.5 646.7 265.5 635.5Q261.3 646.7 256.5 660.5Z" fill="#45aa26"/><path d="M191.7 660.5Q187.2 643.2 185.2 629.1Q197.2 643.2 197.3 660.5Z" fill="#2a8a18"/><path d="M464.1 660.5Q460.3 645.1 457.5 632.5Q467.7 645.1 468.2 660.5Z" fill="#2a8a18"/><path d="M475.7 660.5Q473.6 648.6 479.4 638.8Q483.9 648.6 481.4 660.5Z" fill="#2f9320"/><path d="M282.9 660.5Q281.3 648.2 286.9 638.1Q290.4 648.2 288.0 660.5Z" fill="#4fb22b"/><path d="M374.8 660.5Q372.7 646.5 377.1 635.1Q382.0 646.5 380.0 660.5Z" fill="#237f16"/><path d="M588.0 660.5Q587.2 646.4 595.6 634.9Q596.6 646.4 593.3 660.5Z" fill="#1f7d14"/><path d="M265.8 660.5Q263.6 642.2 263.9 627.2Q269.5 642.2 269.1 660.5Z" fill="#3aa022"/><path d="M333.5 660.5Q333.9 647.9 342.7 637.5Q340.5 647.9 337.2 660.5Z" fill="#4fb22b"/><path d="M121.3 660.5Q120.1 648.0 127.4 637.7Q129.4 648.0 126.5 660.5Z" fill="#55b830"/><path d="M119.8 660.5Q116.0 645.3 113.1 632.9Q123.4 645.3 123.9 660.5Z" fill="#3aa022"/><path d="M377.3 660.5Q375.6 643.6 378.9 629.8Q382.7 643.6 381.3 660.5Z" fill="#1f7d14"/><path d="M479.4 660.5Q476.4 645.0 478.0 632.3Q485.3 645.0 484.3 660.5Z" fill="#55b830"/><path d="M665.6 660.5Q662.4 642.6 661.4 628.0Q669.7 642.6 669.6 660.5Z" fill="#237f16"/><path d="M532.5 660.5Q527.8 646.5 523.1 635.0Q535.8 646.5 536.9 660.5Z" fill="#237f16"/><path d="M582.1 660.5Q582.9 644.1 592.4 630.7Q588.9 644.1 585.4 660.5Z" fill="#3c9d1f"/><path d="M688.2 660.5Q688.3 643.5 697.0 629.6Q695.4 643.5 692.1 660.5Z" fill="#2a8a18"/><path d="M123.0 660.5Q120.3 642.7 124.4 628.1Q130.6 642.7 128.7 660.5Z" fill="#2f9320"/><path d="M59.5 660.5Q57.6 642.7 61.5 628.1Q65.7 642.7 64.0 660.5Z" fill="#2f9320"/><path d="M610.7 660.5Q610.8 647.8 618.2 637.5Q616.7 647.8 614.0 660.5Z" fill="#2a8a18"/><path d="M263.0 660.5Q260.6 642.0 260.3 626.9Q266.5 642.0 266.3 660.5Z" fill="#3c9d1f"/><path d="M82.9 660.5Q80.1 648.2 84.1 638.1Q90.5 648.2 88.7 660.5Z" fill="#2a8a18"/><path d="M615.5 660.5Q615.3 641.3 624.0 625.7Q623.3 641.3 620.0 660.5Z" fill="#55b830"/><path d="M687.2 660.5Q686.3 644.9 692.0 632.2Q693.5 644.9 691.2 660.5Z" fill="#1f7d14"/><path d="M62.6 660.5Q60.7 641.9 65.1 626.6Q69.3 641.9 67.3 660.5Z" fill="#45aa26"/><path d="M424.3 660.5Q420.8 642.2 419.1 627.2Q428.5 642.2 428.6 660.5Z" fill="#55b830"/><path d="M320.8 660.5Q320.1 647.9 330.5 637.5Q330.7 647.9 326.7 660.5Z" fill="#1f7d14"/><path d="M190.2 660.5Q187.5 641.6 188.0 626.2Q194.8 641.6 194.3 660.5Z" fill="#1f7d14"/><path d="M156.2 660.5Q153.7 647.7 158.8 637.2Q164.3 647.7 162.0 660.5Z" fill="#2a8a18"/><path d="M325.0 660.5Q320.1 646.6 316.5 635.3Q329.7 646.6 330.3 660.5Z" fill="#55b830"/><path d="M620.0 660.5Q618.8 646.6 623.0 635.1Q625.6 646.6 623.8 660.5Z" fill="#2a8a18"/><path d="M349.7 660.5Q348.6 642.0 356.6 626.8Q358.2 642.0 355.0 660.5Z" fill="#237f16"/><path d="M649.9 660.5Q647.5 645.6 650.3 633.4Q655.8 645.6 654.5 660.5Z" fill="#55b830"/><path d="M669.7 660.5Q667.4 644.1 672.6 630.7Q677.7 644.1 675.4 660.5Z" fill="#1f7d14"/><path d="M193.7 660.5Q194.4 644.3 206.3 631.0Q202.6 644.3 198.2 660.5Z" fill="#237f16"/><path d="M418.4 660.5Q414.7 642.6 415.4 627.9Q424.8 642.6 424.0 660.5Z" fill="#1f7d14"/><path d="M177.9 660.5Q179.3 642.6 193.6 628.0Q187.9 642.6 182.7 660.5Z" fill="#45aa26"/><path d="M397.4 660.5Q395.0 642.1 398.5 627.0Q404.2 642.1 402.5 660.5Z" fill="#2a8a18"/><path d="M555.6 660.5Q552.2 643.9 553.7 630.3Q562.1 643.9 561.1 660.5Z" fill="#237f16"/><path d="M590.6 660.5Q585.6 643.6 578.1 629.8Q592.1 643.6 594.3 660.5Z" fill="#237f16"/><path d="M359.9 660.5Q359.9 648.3 367.8 638.3Q366.7 648.3 363.7 660.5Z" fill="#237f16"/><path d="M273.6 660.5Q273.2 648.3 279.8 638.3Q279.9 648.3 277.3 660.5Z" fill="#2f9320"/><path d="M413.8 660.5Q414.2 647.9 425.9 637.6Q423.2 647.9 418.8 660.5Z" fill="#2f9320"/><path d="M592.5 660.5Q592.4 649.4 599.0 640.2Q598.3 649.4 595.8 660.5Z" fill="#55b830"/><path d="M456.5 660.5Q454.1 648.7 456.4 639.0Q462.1 648.7 460.9 660.5Z" fill="#55b830"/><path d="M698.2 660.5Q692.8 644.3 684.3 631.0Q699.4 644.3 701.8 660.5Z" fill="#2a8a18"/><path d="M262.2 660.5Q258.2 645.5 253.3 633.3Q264.3 645.5 265.6 660.5Z" fill="#4fb22b"/><path d="M109.2 660.5Q107.0 647.0 111.7 635.9Q116.8 647.0 114.6 660.5Z" fill="#1f7d14"/><path d="M594.0 660.5Q596.3 642.3 610.3 627.4Q602.3 642.3 597.3 660.5Z" fill="#2f9320"/><path d="M144.3 660.5Q143.6 647.4 149.3 636.7Q150.3 647.4 148.0 660.5Z" fill="#1f7d14"/><path d="M211.0 660.5Q207.9 645.7 207.7 633.6Q215.6 645.7 215.2 660.5Z" fill="#55b830"/><path d="M621.9 660.5Q620.6 646.1 624.1 634.3Q626.9 646.1 625.4 660.5Z" fill="#3c9d1f"/><path d="M74.1 660.5Q67.9 643.7 60.8 630.0Q77.6 643.7 79.5 660.5Z" fill="#2f9320"/><path d="M145.5 660.5Q143.3 649.2 148.8 639.9Q153.7 649.2 151.3 660.5Z" fill="#237f16"/><path d="M156.4 660.5Q152.4 646.1 150.6 634.2Q161.3 646.1 161.3 660.5Z" fill="#55b830"/><path d="M360.8 660.5Q355.5 645.9 351.0 633.9Q365.4 645.9 366.4 660.5Z" fill="#2f9320"/><path d="M192.0 660.5Q191.1 642.7 200.2 628.1Q201.4 642.7 197.8 660.5Z" fill="#237f16"/><path d="M147.0 660.5Q145.8 649.1 154.1 639.8Q156.1 649.1 152.7 660.5Z" fill="#3aa022"/><path d="M358.6 660.5Q361.3 648.5 380.4 638.7Q370.5 648.5 363.7 660.5Z" fill="#237f16"/><path d="M691.8 660.5Q687.6 649.4 686.7 640.3Q697.6 649.4 697.3 660.5Z" fill="#2f9320"/><path d="M578.5 660.5Q574.7 642.3 572.6 627.4Q582.6 642.3 582.9 660.5Z" fill="#4fb22b"/><path d="M514.6 660.5Q510.7 647.8 509.8 637.4Q519.8 647.8 519.6 660.5Z" fill="#1f7d14"/><path d="M268.9 660.5Q264.7 643.6 262.0 629.7Q273.1 643.6 273.5 660.5Z" fill="#2f9320"/><path d="M236.4 660.5Q233.4 648.4 235.9 638.6Q243.2 648.4 241.8 660.5Z" fill="#1f7d14"/><path d="M563.0 660.5Q560.1 643.8 559.0 630.2Q566.7 643.8 566.6 660.5Z" fill="#2a8a18"/><path d="M516.5 660.5Q514.8 648.9 520.8 639.5Q524.2 648.9 521.7 660.5Z" fill="#2a8a18"/><path d="M497.9 660.5Q495.8 644.4 499.7 631.3Q504.7 644.4 502.9 660.5Z" fill="#3c9d1f"/><path d="M291.6 660.5Q287.6 648.5 287.9 638.7Q298.2 648.5 297.6 660.5Z" fill="#237f16"/><path d="M73.6 660.5Q71.7 641.9 74.8 626.6Q79.4 641.9 77.9 660.5Z" fill="#2f9320"/><path d="M225.8 660.5Q224.7 644.2 232.4 630.8Q234.2 644.2 231.1 660.5Z" fill="#1f7d14"/><path d="M589.7 660.5Q585.9 644.7 585.3 631.7Q595.0 644.7 594.7 660.5Z" fill="#1f7d14"/><path d="M618.5 660.5Q613.8 647.8 607.9 637.5Q620.9 647.8 622.5 660.5Z" fill="#237f16"/><path d="M426.5 660.5Q426.3 648.1 433.3 637.9Q432.8 648.1 430.1 660.5Z" fill="#1f7d14"/><path d="M635.5 660.5Q632.2 647.5 629.4 636.9Q638.2 647.5 638.8 660.5Z" fill="#2f9320"/><path d="M468.2 660.5Q465.1 643.0 468.0 628.7Q475.5 643.0 473.9 660.5Z" fill="#2f9320"/><path d="M502.3 660.5Q501.6 649.0 507.8 639.6Q508.8 649.0 506.4 660.5Z" fill="#3c9d1f"/><path d="M578.6 660.5Q576.4 642.8 578.9 628.3Q584.0 642.8 582.8 660.5Z" fill="#55b830"/><path d="M334.4 660.5Q333.8 649.4 339.4 640.3Q340.0 649.4 337.8 660.5Z" fill="#2a8a18"/><path d="M390.8 660.5Q390.6 644.5 397.1 631.4Q396.7 644.5 394.2 660.5Z" fill="#1f7d14"/><path d="M580.2 660.5Q578.0 646.1 582.9 634.2Q588.0 646.1 585.8 660.5Z" fill="#1f7d14"/><path d="M397.6 660.5Q397.2 641.4 405.9 625.9Q405.7 641.4 402.3 660.5Z" fill="#4fb22b"/><path d="M288.2 660.5Q287.4 644.6 292.2 631.5Q293.5 644.6 291.5 660.5Z" fill="#3c9d1f"/><path d="M149.7 660.5Q146.8 642.6 149.8 627.9Q156.9 642.6 155.4 660.5Z" fill="#4fb22b"/><path d="M350.4 660.5Q346.9 648.0 346.8 637.7Q355.6 648.0 355.2 660.5Z" fill="#1f7d14"/><path d="M388.5 660.5Q387.3 644.2 393.3 630.9Q395.6 644.2 393.1 660.5Z" fill="#2a8a18"/><path d="M566.5 660.5Q564.8 645.4 569.4 633.1Q573.1 645.4 571.1 660.5Z" fill="#3aa022"/><path d="M204.9 660.5Q204.3 647.0 210.7 635.9Q211.3 647.0 208.7 660.5Z" fill="#3aa022"/><path d="M191.5 660.5Q193.9 641.4 213.4 625.8Q204.4 641.4 197.3 660.5Z" fill="#1f7d14"/><path d="M669.0 660.5Q663.1 642.4 656.5 627.7Q672.9 642.4 674.5 660.5Z" fill="#237f16"/><path d="M706.5 660.5Q706.1 644.2 712.0 630.8Q712.3 644.2 709.9 660.5Z" fill="#3c9d1f"/><path d="M122.1 660.5Q117.8 647.4 115.1 636.6Q126.6 647.4 127.0 660.5Z" fill="#2f9320"/><path d="M280.7 660.5Q277.5 648.1 279.5 637.9Q287.3 648.1 286.2 660.5Z" fill="#237f16"/><path d="M335.1 660.5Q331.7 644.1 332.2 630.8Q340.9 644.1 340.3 660.5Z" fill="#1f7d14"/><path d="M634.3 660.5Q630.4 641.6 626.7 626.1Q637.2 641.6 638.0 660.5Z" fill="#4fb22b"/><path d="M491.8 660.5Q491.7 643.4 501.9 629.4Q500.7 643.4 496.8 660.5Z" fill="#237f16"/><path d="M465.7 660.5Q462.6 646.2 461.1 634.5Q469.1 646.2 469.3 660.5Z" fill="#3aa022"/><path d="M549.7 660.5Q549.1 641.3 556.8 625.6Q557.2 641.3 554.2 660.5Z" fill="#2a8a18"/><path d="M168.1 660.5Q164.9 643.4 166.7 629.4Q174.8 643.4 173.6 660.5Z" fill="#55b830"/><path d="M187.8 660.5Q181.4 643.0 171.6 628.7Q189.5 643.0 192.3 660.5Z" fill="#1f7d14"/><path d="M424.6 660.5Q423.7 641.4 430.9 625.7Q432.2 641.4 429.3 660.5Z" fill="#237f16"/><path d="M118.5 660.5Q115.8 648.2 117.7 638.2Q124.4 648.2 123.3 660.5Z" fill="#2f9320"/><path d="M337.3 660.5Q334.3 642.4 335.3 627.5Q342.8 642.4 342.0 660.5Z" fill="#55b830"/><path d="M231.6 660.5Q229.8 642.5 233.0 627.8Q237.1 642.5 235.7 660.5Z" fill="#1f7d14"/><path d="M144.0 660.5Q143.5 641.9 151.6 626.7Q151.6 641.9 148.5 660.5Z" fill="#2f9320"/><path d="M610.1 660.5Q608.4 646.4 609.9 634.9Q614.1 646.4 613.3 660.5Z" fill="#2f9320"/><path d="M284.1 660.5Q280.5 647.5 278.8 636.9Q288.3 647.5 288.4 660.5Z" fill="#4fb22b"/><path d="M355.9 660.5Q353.0 647.5 352.9 636.8Q360.2 647.5 359.9 660.5Z" fill="#1f7d14"/><path d="M261.5 660.5Q260.1 641.3 267.4 625.7Q270.1 641.3 267.1 660.5Z" fill="#1f7d14"/><path d="M443.5 660.5Q440.6 644.7 443.7 631.7Q450.8 644.7 449.2 660.5Z" fill="#2f9320"/><path d="M388.4 660.5Q388.2 642.8 396.0 628.3Q395.3 642.8 392.3 660.5Z" fill="#237f16"/><path d="M111.1 660.5Q110.8 648.8 122.3 639.2Q121.5 648.8 117.1 660.5Z" fill="#55b830"/><path d="M550.5 660.5Q544.7 644.3 538.6 631.1Q554.5 644.3 556.0 660.5Z" fill="#45aa26"/><path d="M482.6 660.5Q478.1 649.1 474.3 639.8Q486.4 649.1 487.2 660.5Z" fill="#3aa022"/><path d="M70.0 660.5Q66.7 646.8 67.5 635.5Q75.8 646.8 75.0 660.5Z" fill="#4fb22b"/><path d="M192.3 660.5Q185.9 646.0 176.8 634.0Q194.4 646.0 196.9 660.5Z" fill="#2f9320"/><path d="M325.4 660.5Q323.0 643.2 326.3 629.1Q331.9 643.2 330.3 660.5Z" fill="#55b830"/><path d="M77.9 660.5Q76.8 643.4 84.0 629.4Q86.0 643.4 83.0 660.5Z" fill="#3c9d1f"/><path d="M87.7 660.5Q83.6 648.4 83.4 638.5Q94.1 648.4 93.6 660.5Z" fill="#3c9d1f"/><path d="M313.9 660.5Q312.0 643.0 316.7 628.6Q320.9 643.0 318.9 660.5Z" fill="#237f16"/><path d="M576.0 660.5Q574.0 649.0 574.8 639.6Q579.9 649.0 579.3 660.5Z" fill="#2f9320"/><path d="M526.0 660.5Q524.9 645.3 528.7 632.9Q531.1 645.3 529.4 660.5Z" fill="#2f9320"/><path d="M601.3 660.5Q598.4 643.1 598.3 628.8Q605.7 643.1 605.4 660.5Z" fill="#2f9320"/><path d="M292.3 660.5Q289.3 649.0 292.1 639.6Q299.5 649.0 298.0 660.5Z" fill="#1f7d14"/><path d="M227.3 660.5Q227.0 644.5 234.7 631.4Q234.4 644.5 231.4 660.5Z" fill="#1f7d14"/><path d="M16.3 660.5Q14.0 642.6 18.9 627.9Q24.1 642.6 21.8 660.5Z" fill="#2f9320"/><path d="M493.0 660.5Q492.4 641.5 500.9 626.0Q501.1 641.5 497.8 660.5Z" fill="#1f7d14"/><path d="M678.5 660.5Q674.5 644.3 671.6 631.1Q682.3 644.3 682.8 660.5Z" fill="#2a8a18"/><path d="M352.3 660.5Q351.0 645.2 357.7 632.6Q360.0 645.2 357.3 660.5Z" fill="#2f9320"/><path d="M516.9 660.5Q515.5 642.9 521.6 628.5Q524.3 642.9 521.8 660.5Z" fill="#2a8a18"/><path d="M517.5 660.5Q516.3 645.6 521.2 633.5Q523.6 645.6 521.6 660.5Z" fill="#45aa26"/><path d="M621.7 660.5Q616.3 644.0 608.3 630.5Q623.4 644.0 625.7 660.5Z" fill="#1f7d14"/><path d="M584.4 660.5Q582.7 642.1 586.7 627.1Q590.4 642.1 588.7 660.5Z" fill="#1f7d14"/><path d="M444.7 660.5Q446.0 644.5 456.8 631.4Q452.0 644.5 448.0 660.5Z" fill="#1f7d14"/><path d="M383.2 660.5Q377.2 641.8 369.4 626.6Q385.8 641.8 387.9 660.5Z" fill="#4fb22b"/><path d="M18.3 660.5Q14.6 645.7 13.5 633.6Q23.2 645.7 23.1 660.5Z" fill="#3c9d1f"/><path d="M409.1 660.5Q406.7 648.3 411.3 638.3Q417.0 648.3 414.9 660.5Z" fill="#1f7d14"/><path d="M498.9 660.5Q495.9 641.7 493.7 626.3Q501.7 641.7 502.1 660.5Z" fill="#2a8a18"/><path d="M501.0 660.5Q498.9 643.7 504.5 630.0Q509.2 643.7 506.8 660.5Z" fill="#237f16"/><path d="M566.1 660.5Q562.9 647.5 562.3 636.9Q570.6 647.5 570.4 660.5Z" fill="#2f9320"/><path d="M526.9 660.5Q528.4 643.6 543.0 629.7Q537.2 643.6 531.9 660.5Z" fill="#237f16"/><path d="M674.7 660.5Q671.9 643.1 675.9 628.8Q682.5 643.1 680.6 660.5Z" fill="#2f9320"/><path d="M309.7 660.5Q309.0 642.2 316.3 627.2Q317.0 642.2 314.2 660.5Z" fill="#3aa022"/><path d="M681.0 660.5Q678.9 647.1 681.7 636.2Q686.5 647.1 685.2 660.5Z" fill="#3aa022"/><path d="M189.4 660.5Q188.3 645.4 196.6 633.1Q198.3 645.4 195.0 660.5Z" fill="#237f16"/><path d="M590.5 660.5Q587.9 643.9 591.3 630.3Q597.4 643.9 595.8 660.5Z" fill="#2a8a18"/><path d="M231.4 660.5Q230.4 648.2 238.5 638.2Q239.7 648.2 236.5 660.5Z" fill="#45aa26"/><path d="M621.3 660.5Q620.7 642.5 628.6 627.7Q628.8 642.5 625.7 660.5Z" fill="#55b830"/><path d="M98.7 660.5Q97.0 642.7 104.1 628.2Q107.5 642.7 104.6 660.5Z" fill="#55b830"/><path d="M216.5 660.5Q213.9 642.1 213.1 627.0Q219.9 642.1 219.8 660.5Z" fill="#1f7d14"/><path d="M66.5 660.5Q64.7 643.2 70.9 629.0Q74.7 643.2 72.1 660.5Z" fill="#2a8a18"/><path d="M692.4 660.5Q688.1 648.4 683.1 638.6Q694.8 648.4 696.1 660.5Z" fill="#3c9d1f"/><path d="M483.3 660.5Q483.2 643.9 491.3 630.2Q490.4 643.9 487.3 660.5Z" fill="#1f7d14"/><path d="M427.0 660.5Q422.9 648.0 421.0 637.7Q431.8 648.0 431.9 660.5Z" fill="#2a8a18"/><path d="M629.6 660.5Q627.2 647.5 627.4 636.9Q633.6 647.5 633.1 660.5Z" fill="#55b830"/><path d="M215.4 660.5Q210.9 649.4 206.1 640.4Q218.3 649.4 219.5 660.5Z" fill="#3c9d1f"/><path d="M198.3 660.5Q193.2 643.1 185.7 628.9Q199.8 643.1 201.9 660.5Z" fill="#2a8a18"/><path d="M64.1 660.5Q63.4 646.2 69.0 634.5Q70.0 646.2 67.8 660.5Z" fill="#2f9320"/><path d="M50.4 660.5Q51.5 643.3 62.1 629.2Q57.7 643.3 53.8 660.5Z" fill="#2f9320"/><path d="M319.2 660.5Q318.5 649.1 328.6 639.7Q329.0 649.1 325.1 660.5Z" fill="#4fb22b"/><path d="M316.5 660.5Q313.5 649.2 316.0 640.0Q323.3 649.2 321.9 660.5Z" fill="#3c9d1f"/><path d="M244.1 660.5Q243.7 645.8 251.2 633.7Q251.3 645.8 248.3 660.5Z" fill="#237f16"/><path d="M620.7 660.5Q617.8 648.9 616.6 639.5Q624.1 648.9 624.2 660.5Z" fill="#237f16"/><path d="M228.2 660.5Q226.8 647.2 234.3 636.3Q236.9 647.2 233.8 660.5Z" fill="#4fb22b"/><path d="M563.0 660.5Q561.0 647.0 562.3 635.9Q567.3 647.0 566.5 660.5Z" fill="#2a8a18"/><path d="M400.5 660.5Q398.3 642.4 400.0 627.6Q405.4 642.4 404.4 660.5Z" fill="#1f7d14"/><path d="M278.2 660.5Q275.5 647.6 277.0 637.0Q283.8 647.6 282.8 660.5Z" fill="#2f9320"/><path d="M701.2 660.5Q696.8 645.5 692.4 633.3Q704.5 645.5 705.5 660.5Z" fill="#2a8a18"/><path d="M264.1 660.5Q259.7 648.5 258.4 638.6Q270.1 648.5 269.9 660.5Z" fill="#4fb22b"/><path d="M109.0 660.5Q105.1 646.1 100.8 634.3Q111.5 646.1 112.5 660.5Z" fill="#2a8a18"/><path d="M313.8 660.5Q315.2 645.6 331.5 633.5Q325.6 645.6 319.6 660.5Z" fill="#2f9320"/><path d="M432.7 660.5Q429.0 644.4 425.5 631.2Q435.6 644.4 436.4 660.5Z" fill="#1f7d14"/><path d="M453.0 660.5Q446.4 642.3 433.6 627.4Q452.3 642.3 456.2 660.5Z" fill="#3aa022"/><path d="M579.1 660.5Q580.0 646.4 594.5 634.9Q590.0 646.4 584.6 660.5Z" fill="#2f9320"/><path d="M300.6 660.5Q301.8 649.3 316.1 640.2Q311.1 649.3 305.8 660.5Z" fill="#4fb22b"/><path d="M516.0 660.5Q513.5 648.8 518.6 639.2Q524.2 648.8 521.9 660.5Z" fill="#2f9320"/><path d="M217.7 660.5Q213.6 647.8 212.1 637.5Q222.8 647.8 222.8 660.5Z" fill="#2f9320"/><path d="M447.8 660.5Q448.6 646.5 458.1 635.0Q454.9 646.5 451.3 660.5Z" fill="#2a8a18"/><path d="M216.1 660.5Q213.8 648.6 219.0 638.8Q224.3 648.6 222.0 660.5Z" fill="#4fb22b"/><path d="M247.4 660.5Q242.5 646.1 235.7 634.2Q249.1 646.1 251.1 660.5Z" fill="#4fb22b"/><path d="M417.6 660.5Q414.6 645.0 414.2 632.4Q421.9 645.0 421.6 660.5Z" fill="#2f9320"/><path d="M516.9 660.5Q515.8 649.2 522.0 639.9Q524.1 649.2 521.5 660.5Z" fill="#3aa022"/><path d="M144.3 660.5Q143.1 649.1 150.9 639.7Q152.8 649.1 149.7 660.5Z" fill="#2f9320"/><path d="M165.6 660.5Q165.4 643.1 174.0 628.8Q173.4 643.1 170.1 660.5Z" fill="#3aa022"/><path d="M9.7 660.5Q9.8 642.4 18.3 627.6Q16.9 642.4 13.7 660.5Z" fill="#3c9d1f"/><path d="M-8.4 660.5Q-12.2 644.8 -15.1 631.9Q-5.0 644.8 -4.4 660.5Z" fill="#45aa26"/><path d="M-7.4 660.5Q-11.5 642.1 -15.6 627.0Q-4.3 642.1 -3.3 660.5Z" fill="#6cc436"/><path d="M-9.1 660.5Q-12.2 645.2 -14.1 632.6Q-5.9 645.2 -5.6 660.5Z" fill="#55b830"/><path d="M17.3 660.5Q18.4 643.3 28.1 629.2Q23.9 643.3 20.4 660.5Z" fill="#2a8a18"/><path d="M-15.0 660.5Q-20.7 646.8 -30.1 635.7Q-14.2 646.8 -11.4 660.5Z" fill="#3aa022"/><path d="M-2.6 660.5Q-5.0 642.2 -4.1 627.3Q1.9 642.2 1.2 660.5Z" fill="#1f7d14"/><path d="M15.7 660.5Q16.4 641.8 24.5 626.5Q21.5 641.8 18.5 660.5Z" fill="#3c9d1f"/><path d="M25.2 660.5Q28.1 648.8 43.0 639.3Q33.4 648.8 28.1 660.5Z" fill="#55b830"/><path d="M16.3 660.5Q16.6 643.4 25.3 629.5Q23.5 643.4 20.2 660.5Z" fill="#2a8a18"/><path d="M-10.0 660.5Q-14.1 644.6 -20.2 631.5Q-8.7 644.6 -6.9 660.5Z" fill="#3c9d1f"/><path d="M19.5 660.5Q21.0 644.2 31.9 630.9Q26.4 644.2 22.5 660.5Z" fill="#3aa022"/><path d="M44.2 660.5Q44.4 642.4 53.2 627.6Q51.4 642.4 48.1 660.5Z" fill="#3c9d1f"/><path d="M21.2 660.5Q17.0 642.7 11.6 628.2Q23.1 642.7 24.6 660.5Z" fill="#4fb22b"/><path d="M48.7 660.5Q51.4 644.6 66.8 631.6Q57.7 644.6 52.2 660.5Z" fill="#4fb22b"/><path d="M44.4 660.5Q45.3 643.9 54.2 630.3Q50.5 643.9 47.2 660.5Z" fill="#237f16"/><path d="M43.4 660.5Q44.1 642.6 54.1 627.9Q50.8 642.6 47.1 660.5Z" fill="#237f16"/><path d="M46.6 660.5Q48.5 642.5 59.9 627.7Q53.5 642.5 49.4 660.5Z" fill="#4fb22b"/><path d="M20.1 660.5Q16.1 643.2 10.2 629.1Q21.3 643.2 22.9 660.5Z" fill="#3aa022"/><path d="M45.5 660.5Q45.7 644.4 54.1 631.2Q52.4 644.4 49.3 660.5Z" fill="#2f9320"/><path d="M25.4 660.5Q23.7 641.9 26.6 626.6Q30.4 641.9 29.1 660.5Z" fill="#3c9d1f"/><path d="M45.2 660.5Q47.1 644.5 61.8 631.5Q54.9 644.5 49.5 660.5Z" fill="#2a8a18"/><path d="M46.8 660.5Q48.9 644.1 62.0 630.7Q54.8 644.1 50.0 660.5Z" fill="#55b830"/><path d="M15.1 660.5Q11.7 644.1 6.9 630.6Q16.5 644.1 17.8 660.5Z" fill="#4fb22b"/><path d="M60.7 660.5Q60.4 642.1 66.0 627.0Q65.8 642.1 63.7 660.5Z" fill="#3aa022"/><path d="M49.3 660.5Q46.0 641.9 43.4 626.7Q52.3 641.9 52.8 660.5Z" fill="#45aa26"/><path d="M60.2 660.5Q60.1 642.2 66.4 627.3Q65.7 642.2 63.3 660.5Z" fill="#1f7d14"/><path d="M39.6 660.5Q34.7 643.7 26.9 630.0Q40.5 643.7 42.8 660.5Z" fill="#2f9320"/><path d="M50.4 660.5Q48.3 642.6 48.2 628.0Q53.5 642.6 53.2 660.5Z" fill="#2a8a18"/><path d="M44.6 660.5Q40.3 642.9 33.0 628.4Q45.1 642.9 47.3 660.5Z" fill="#45aa26"/><path d="M74.0 660.5Q76.3 647.1 89.4 636.2Q81.6 647.1 76.9 660.5Z" fill="#45aa26"/><path d="M72.1 660.5Q73.1 646.6 85.1 635.2Q81.0 646.6 76.5 660.5Z" fill="#3c9d1f"/><path d="M47.8 660.5Q44.3 643.3 40.0 629.2Q49.5 643.3 50.7 660.5Z" fill="#3aa022"/><path d="M67.6 660.5Q68.5 642.7 76.9 628.1Q73.5 642.7 70.4 660.5Z" fill="#3c9d1f"/><path d="M94.7 660.5Q94.7 642.5 100.1 627.8Q99.4 642.5 97.3 660.5Z" fill="#3c9d1f"/><path d="M79.5 660.5Q77.7 642.3 81.0 627.3Q85.1 642.3 83.6 660.5Z" fill="#55b830"/><path d="M70.6 660.5Q67.4 645.9 63.4 634.0Q72.2 645.9 73.3 660.5Z" fill="#4fb22b"/><path d="M103.2 660.5Q105.3 644.1 120.8 630.8Q113.1 644.1 107.5 660.5Z" fill="#3aa022"/><path d="M98.8 660.5Q100.2 643.3 113.6 629.3Q108.2 643.3 103.3 660.5Z" fill="#2f9320"/><path d="M73.2 660.5Q68.8 644.6 64.3 631.6Q76.2 644.6 77.3 660.5Z" fill="#3c9d1f"/><path d="M101.3 660.5Q103.3 644.3 117.5 631.0Q110.3 644.3 105.2 660.5Z" fill="#4fb22b"/><path d="M102.6 660.5Q104.2 642.4 114.5 627.6Q109.0 642.4 105.3 660.5Z" fill="#1f7d14"/><path d="M99.4 660.5Q101.2 644.7 112.5 631.8Q106.3 644.7 102.2 660.5Z" fill="#3aa022"/><path d="M97.4 660.5Q97.9 642.0 105.2 626.9Q103.0 642.0 100.3 660.5Z" fill="#3aa022"/><path d="M73.8 660.5Q70.2 642.5 65.9 627.7Q75.8 642.5 77.0 660.5Z" fill="#45aa26"/><path d="M124.5 660.5Q124.2 643.0 129.5 628.7Q129.3 643.0 127.3 660.5Z" fill="#2a8a18"/><path d="M100.1 660.5Q97.1 642.4 97.1 627.6Q104.7 642.4 104.3 660.5Z" fill="#2a8a18"/><path d="M116.9 660.5Q115.9 642.2 118.4 627.3Q120.7 642.2 119.6 660.5Z" fill="#2a8a18"/><path d="M124.3 660.5Q124.8 644.8 133.8 632.0Q131.3 644.8 127.9 660.5Z" fill="#1f7d14"/><path d="M130.2 660.5Q131.3 648.0 140.7 637.8Q136.3 648.0 132.9 660.5Z" fill="#2a8a18"/><path d="M89.0 660.5Q84.5 649.2 77.3 640.0Q89.8 649.2 91.9 660.5Z" fill="#237f16"/><path d="M120.8 660.5Q120.9 642.6 130.3 628.0Q128.5 642.6 125.0 660.5Z" fill="#45aa26"/><path d="M108.3 660.5Q106.2 641.9 109.0 626.7Q114.0 641.9 112.7 660.5Z" fill="#2f9320"/><path d="M121.3 660.5Q120.8 643.7 125.9 630.0Q126.5 643.7 124.5 660.5Z" fill="#2a8a18"/><path d="M99.4 660.5Q96.8 642.2 95.7 627.3Q102.4 642.2 102.5 660.5Z" fill="#3c9d1f"/><path d="M134.8 660.5Q132.5 642.5 133.4 627.9Q139.2 642.5 138.5 660.5Z" fill="#45aa26"/><path d="M134.2 660.5Q132.6 642.4 137.1 627.6Q140.6 642.4 138.7 660.5Z" fill="#45aa26"/><path d="M157.7 660.5Q159.9 647.3 175.6 636.6Q167.8 647.3 162.1 660.5Z" fill="#3aa022"/><path d="M159.3 660.5Q162.0 649.1 177.1 639.9Q168.0 649.1 162.7 660.5Z" fill="#237f16"/><path d="M127.7 660.5Q124.2 645.1 119.8 632.4Q129.4 645.1 130.6 660.5Z" fill="#6cc436"/><path d="M153.9 660.5Q155.3 641.8 165.6 626.6Q160.6 641.8 156.9 660.5Z" fill="#6cc436"/><path d="M118.9 660.5Q113.8 648.3 104.7 638.3Q119.1 648.3 121.8 660.5Z" fill="#3c9d1f"/><path d="M149.3 660.5Q150.6 642.5 163.3 627.8Q158.2 642.5 153.5 660.5Z" fill="#237f16"/><path d="M132.7 660.5Q130.1 643.0 128.5 628.8Q135.4 643.0 135.6 660.5Z" fill="#237f16"/><path d="M151.2 660.5Q145.8 645.9 139.4 634.0Q154.1 645.9 155.8 660.5Z" fill="#45aa26"/><path d="M151.1 660.5Q145.6 645.4 136.7 633.1Q152.1 645.4 154.7 660.5Z" fill="#3aa022"/><path d="M151.3 660.5Q145.4 643.8 135.9 630.0Q152.4 643.8 155.2 660.5Z" fill="#45aa26"/><path d="M160.1 660.5Q157.6 642.2 157.8 627.2Q164.1 642.2 163.7 660.5Z" fill="#3aa022"/><path d="M161.5 660.5Q159.2 642.0 160.5 626.9Q166.2 642.0 165.4 660.5Z" fill="#55b830"/><path d="M177.5 660.5Q178.1 642.9 189.7 628.5Q186.4 642.9 182.0 660.5Z" fill="#3aa022"/><path d="M180.0 660.5Q180.3 643.4 190.6 629.3Q188.2 643.4 184.3 660.5Z" fill="#45aa26"/><path d="M150.8 660.5Q146.3 643.4 141.9 629.5Q154.0 643.4 155.1 660.5Z" fill="#4fb22b"/><path d="M175.7 660.5Q176.1 642.2 187.0 627.2Q184.3 642.2 180.2 660.5Z" fill="#4fb22b"/><path d="M193.4 660.5Q190.6 642.6 189.7 627.9Q197.1 642.6 197.0 660.5Z" fill="#3c9d1f"/><path d="M202.4 660.5Q202.3 642.6 210.0 628.0Q209.3 642.6 206.3 660.5Z" fill="#45aa26"/><path d="M174.6 660.5Q169.8 646.3 163.1 634.6Q176.5 646.3 178.3 660.5Z" fill="#45aa26"/><path d="M205.2 660.5Q206.3 643.1 216.3 628.8Q212.2 643.1 208.5 660.5Z" fill="#2f9320"/><path d="M198.3 660.5Q199.2 642.2 207.7 627.2Q204.4 642.2 201.2 660.5Z" fill="#237f16"/><path d="M191.2 660.5Q190.9 642.5 196.4 627.8Q196.5 642.5 194.3 660.5Z" fill="#55b830"/><path d="M208.1 660.5Q209.9 645.8 223.2 633.7Q216.9 645.8 212.1 660.5Z" fill="#55b830"/><path d="M238.3 660.5Q241.7 646.1 257.9 634.3Q246.6 646.1 241.0 660.5Z" fill="#3aa022"/><path d="M247.1 660.5Q250.3 652.8 267.6 646.5Q256.7 652.8 250.6 660.5Z" fill="#237f16"/><path d="M232.6 660.5Q233.2 641.8 243.9 626.5Q240.8 641.8 236.8 660.5Z" fill="#3c9d1f"/><path d="M232.4 660.5Q233.3 642.6 241.6 628.0Q238.3 642.6 235.2 660.5Z" fill="#237f16"/><path d="M232.2 660.5Q232.1 643.4 241.2 629.4Q240.0 643.4 236.6 660.5Z" fill="#3aa022"/><path d="M232.0 660.5Q227.0 644.2 220.0 630.9Q233.8 644.2 235.7 660.5Z" fill="#1f7d14"/><path d="M235.7 660.5Q232.6 642.2 231.6 627.2Q239.6 642.2 239.6 660.5Z" fill="#2f9320"/><path d="M261.7 660.5Q263.6 646.2 275.2 634.4Q268.7 646.2 264.5 660.5Z" fill="#3c9d1f"/><path d="M257.8 660.5Q258.8 643.8 270.3 630.1Q266.1 643.8 261.8 660.5Z" fill="#237f16"/><path d="M269.9 660.5Q273.6 652.8 292.3 646.5Q280.0 652.8 273.4 660.5Z" fill="#3aa022"/><path d="M278.6 660.5Q278.2 642.3 284.1 627.4Q284.4 642.3 282.1 660.5Z" fill="#3aa022"/><path d="M282.1 660.5Q281.2 642.4 284.4 627.5Q286.1 642.4 284.7 660.5Z" fill="#2f9320"/><path d="M281.2 660.5Q281.6 643.4 288.6 629.4Q286.4 643.4 283.8 660.5Z" fill="#45aa26"/><path d="M264.7 660.5Q262.0 642.3 263.2 627.3Q270.1 642.3 269.2 660.5Z" fill="#4fb22b"/><path d="M285.5 660.5Q285.7 645.5 294.9 633.3Q293.2 645.5 289.7 660.5Z" fill="#4fb22b"/><path d="M261.0 660.5Q257.9 642.2 255.4 627.3Q263.9 642.2 264.4 660.5Z" fill="#4fb22b"/><path d="M279.6 660.5Q280.2 642.1 288.4 627.0Q285.7 642.1 282.7 660.5Z" fill="#237f16"/><path d="M287.4 660.5Q287.9 644.7 298.5 631.8Q295.8 644.7 291.8 660.5Z" fill="#3c9d1f"/><path d="M291.0 660.5Q293.1 648.6 308.7 638.8Q301.1 648.6 295.4 660.5Z" fill="#55b830"/><path d="M260.9 660.5Q257.6 644.2 254.0 630.9Q263.0 644.2 263.9 660.5Z" fill="#1f7d14"/><path d="M289.8 660.5Q292.5 648.3 309.9 638.3Q300.4 648.3 294.2 660.5Z" fill="#45aa26"/><path d="M281.6 660.5Q281.9 642.2 289.3 627.3Q287.4 642.2 284.7 660.5Z" fill="#2f9320"/><path d="M267.2 660.5Q264.5 642.2 264.7 627.3Q271.8 642.2 271.3 660.5Z" fill="#4fb22b"/><path d="M280.8 660.5Q281.6 642.1 291.7 627.1Q288.3 642.1 284.5 660.5Z" fill="#45aa26"/><path d="M284.9 660.5Q285.9 642.5 297.7 627.7Q293.6 642.5 289.3 660.5Z" fill="#45aa26"/><path d="M287.2 660.5Q284.0 642.8 283.0 628.2Q291.3 642.8 291.2 660.5Z" fill="#55b830"/><path d="M276.7 660.5Q270.7 649.7 261.9 640.9Q278.7 649.7 281.2 660.5Z" fill="#4fb22b"/><path d="M288.2 660.5Q285.6 643.2 284.0 629.0Q290.8 643.2 291.1 660.5Z" fill="#4fb22b"/><path d="M308.8 660.5Q309.6 643.0 320.4 628.7Q316.7 643.0 312.7 660.5Z" fill="#3aa022"/><path d="M286.8 660.5Q282.9 643.7 276.9 630.0Q287.9 643.7 289.6 660.5Z" fill="#2a8a18"/><path d="M281.2 660.5Q277.4 645.7 275.4 633.5Q285.5 645.7 285.7 660.5Z" fill="#45aa26"/><path d="M271.2 660.5Q264.4 652.8 253.4 646.5Q272.5 652.8 275.7 660.5Z" fill="#4fb22b"/><path d="M336.3 660.5Q337.7 643.4 349.1 629.4Q344.1 643.4 339.9 660.5Z" fill="#3aa022"/><path d="M331.5 660.5Q332.8 642.4 344.7 627.5Q339.7 642.4 335.4 660.5Z" fill="#2a8a18"/><path d="M307.1 660.5Q302.7 644.4 296.5 631.3Q308.7 644.4 310.4 660.5Z" fill="#2f9320"/><path d="M337.8 660.5Q339.9 645.9 355.1 634.0Q347.6 645.9 342.1 660.5Z" fill="#55b830"/><path d="M334.0 660.5Q334.9 644.8 344.7 631.9Q341.1 644.8 337.5 660.5Z" fill="#3c9d1f"/><path d="M334.8 660.5Q335.6 642.8 347.2 628.3Q343.6 642.8 339.3 660.5Z" fill="#4fb22b"/><path d="M333.4 660.5Q334.3 642.2 343.1 627.3Q339.4 642.2 336.2 660.5Z" fill="#237f16"/><path d="M312.2 660.5Q309.1 643.9 305.7 630.4Q314.1 643.9 315.0 660.5Z" fill="#55b830"/><path d="M339.1 660.5Q341.3 647.5 354.0 636.8Q346.6 647.5 342.1 660.5Z" fill="#4fb22b"/><path d="M377.7 660.5Q380.7 652.8 397.2 646.5Q387.0 652.8 381.1 660.5Z" fill="#45aa26"/><path d="M363.5 660.5Q365.1 645.0 375.5 632.4Q369.8 645.0 366.1 660.5Z" fill="#4fb22b"/><path d="M366.6 660.5Q368.7 644.6 383.8 631.6Q376.1 644.6 370.7 660.5Z" fill="#2f9320"/><path d="M342.9 660.5Q341.1 642.1 341.8 627.1Q346.2 642.1 345.7 660.5Z" fill="#6cc436"/><path d="M337.5 660.5Q333.4 643.8 328.4 630.2Q339.7 643.8 341.0 660.5Z" fill="#45aa26"/><path d="M331.7 660.5Q326.1 648.1 317.8 637.9Q333.5 648.1 335.8 660.5Z" fill="#45aa26"/><path d="M362.6 660.5Q363.5 645.3 373.1 632.8Q369.3 645.3 365.8 660.5Z" fill="#3c9d1f"/><path d="M361.6 660.5Q361.8 644.7 370.6 631.8Q369.0 644.7 365.6 660.5Z" fill="#4fb22b"/><path d="M361.4 660.5Q362.1 643.8 372.0 630.1Q368.7 643.8 365.1 660.5Z" fill="#45aa26"/><path d="M336.8 660.5Q332.7 644.4 329.0 631.2Q339.8 644.4 340.7 660.5Z" fill="#55b830"/><path d="M392.0 660.5Q392.5 643.7 401.5 630.0Q399.0 643.7 395.6 660.5Z" fill="#4fb22b"/><path d="M366.4 660.5Q362.4 644.8 357.3 632.0Q368.4 644.8 369.8 660.5Z" fill="#2a8a18"/><path d="M391.9 660.5Q393.0 642.6 404.3 627.9Q399.9 642.6 395.7 660.5Z" fill="#4fb22b"/><path d="M395.8 660.5Q396.8 644.7 405.5 631.9Q401.7 644.7 398.5 660.5Z" fill="#2a8a18"/><path d="M371.9 660.5Q368.3 642.9 364.1 628.6Q373.8 642.9 374.9 660.5Z" fill="#237f16"/><path d="M360.5 660.5Q356.1 650.7 348.4 642.7Q360.9 650.7 363.2 660.5Z" fill="#3c9d1f"/><path d="M358.8 660.5Q353.4 649.0 346.1 639.6Q361.2 649.0 363.1 660.5Z" fill="#4fb22b"/><path d="M365.7 660.5Q360.7 643.3 354.4 629.2Q368.2 643.3 369.9 660.5Z" fill="#237f16"/><path d="M366.1 660.5Q360.7 644.1 351.9 630.6Q367.0 644.1 369.6 660.5Z" fill="#45aa26"/><path d="M417.8 660.5Q418.7 643.3 428.3 629.1Q424.5 643.3 421.0 660.5Z" fill="#4fb22b"/><path d="M418.0 660.5Q419.5 644.4 433.6 631.2Q427.7 644.4 422.6 660.5Z" fill="#2f9320"/><path d="M389.1 660.5Q384.1 644.3 375.2 631.1Q389.3 644.3 392.0 660.5Z" fill="#4fb22b"/><path d="M417.3 660.5Q418.2 643.8 428.5 630.1Q424.8 643.8 421.0 660.5Z" fill="#3c9d1f"/><path d="M430.3 660.5Q434.1 652.8 453.3 646.5Q440.8 652.8 434.1 660.5Z" fill="#3aa022"/><path d="M431.7 660.5Q434.5 652.8 450.6 646.5Q441.2 652.8 435.4 660.5Z" fill="#3c9d1f"/><path d="M387.7 660.5Q382.5 645.0 376.4 632.4Q390.8 645.0 392.3 660.5Z" fill="#237f16"/><path d="M384.0 660.5Q377.3 650.7 366.0 642.6Q384.8 650.7 388.1 660.5Z" fill="#4fb22b"/><path d="M422.1 660.5Q419.5 642.4 417.6 627.6Q424.4 642.4 424.8 660.5Z" fill="#4fb22b"/><path d="M416.4 660.5Q413.2 643.4 409.0 629.4Q418.0 643.4 419.1 660.5Z" fill="#45aa26"/><path d="M409.0 660.5Q402.4 652.8 390.6 646.4Q409.3 652.8 412.8 660.5Z" fill="#4fb22b"/><path d="M435.1 660.5Q434.0 642.0 437.2 626.9Q439.5 642.0 438.1 660.5Z" fill="#55b830"/><path d="M424.5 660.5Q420.2 642.2 416.9 627.1Q428.4 642.2 429.1 660.5Z" fill="#3aa022"/><path d="M423.8 660.5Q421.8 642.8 424.5 628.2Q429.2 642.8 427.9 660.5Z" fill="#2a8a18"/><path d="M414.3 660.5Q409.4 647.8 403.3 637.4Q416.6 647.8 418.2 660.5Z" fill="#3aa022"/><path d="M437.6 660.5Q436.9 642.4 443.5 627.5Q444.4 642.4 441.8 660.5Z" fill="#55b830"/><path d="M443.3 660.5Q445.2 643.7 457.5 629.9Q451.0 643.7 446.5 660.5Z" fill="#55b830"/><path d="M479.5 660.5Q482.0 646.8 495.4 635.5Q487.0 646.8 482.3 660.5Z" fill="#3c9d1f"/><path d="M472.4 660.5Q472.9 642.9 481.0 628.4Q478.4 642.9 475.4 660.5Z" fill="#55b830"/><path d="M472.8 660.5Q471.8 643.0 478.3 628.6Q480.0 643.0 477.4 660.5Z" fill="#55b830"/><path d="M479.4 660.5Q481.1 643.7 492.8 629.9Q486.8 643.7 482.5 660.5Z" fill="#237f16"/><path d="M478.2 660.5Q480.0 642.7 491.2 628.2Q485.0 642.7 480.9 660.5Z" fill="#3aa022"/><path d="M452.8 660.5Q449.6 641.9 447.1 626.7Q455.7 641.9 456.1 660.5Z" fill="#3c9d1f"/><path d="M452.5 660.5Q449.4 642.1 446.1 627.1Q454.5 642.1 455.3 660.5Z" fill="#3c9d1f"/><path d="M507.5 660.5Q508.2 643.8 518.6 630.1Q515.3 643.8 511.4 660.5Z" fill="#45aa26"/><path d="M476.6 660.5Q472.2 645.9 464.3 633.9Q476.9 645.9 479.3 660.5Z" fill="#3aa022"/><path d="M476.2 660.5Q470.8 646.1 461.9 634.3Q477.0 646.1 479.7 660.5Z" fill="#3c9d1f"/><path d="M481.1 660.5Q477.0 642.1 470.8 627.0Q482.1 642.1 483.9 660.5Z" fill="#2f9320"/><path d="M500.8 660.5Q499.9 642.9 504.7 628.5Q506.4 642.9 504.4 660.5Z" fill="#55b830"/><path d="M494.5 660.5Q492.1 641.8 493.4 626.6Q499.3 641.8 498.4 660.5Z" fill="#4fb22b"/><path d="M499.8 660.5Q499.8 642.5 507.9 627.8Q506.8 642.5 503.7 660.5Z" fill="#45aa26"/><path d="M488.8 660.5Q486.6 642.7 489.8 628.1Q494.8 642.7 493.3 660.5Z" fill="#3aa022"/><path d="M486.6 660.5Q482.6 642.5 480.0 627.7Q490.6 642.5 491.0 660.5Z" fill="#45aa26"/><path d="M498.1 660.5Q496.6 642.4 500.4 627.6Q503.8 642.4 502.2 660.5Z" fill="#4fb22b"/><path d="M485.4 660.5Q482.4 642.8 479.4 628.4Q487.4 642.8 488.2 660.5Z" fill="#1f7d14"/><path d="M483.3 660.5Q480.0 643.1 479.3 628.8Q487.9 643.1 487.7 660.5Z" fill="#45aa26"/><path d="M479.6 660.5Q476.1 642.4 471.9 627.7Q481.3 642.4 482.4 660.5Z" fill="#237f16"/><path d="M502.1 660.5Q502.2 642.4 509.0 627.6Q507.9 642.4 505.3 660.5Z" fill="#45aa26"/><path d="M490.3 660.5Q488.7 642.3 490.9 627.5Q494.7 642.3 493.6 660.5Z" fill="#45aa26"/><path d="M519.5 660.5Q521.8 652.8 536.3 646.5Q528.4 652.8 523.2 660.5Z" fill="#3aa022"/><path d="M533.5 660.5Q533.9 643.6 543.5 629.8Q540.9 643.6 537.3 660.5Z" fill="#237f16"/><path d="M509.4 660.5Q505.8 645.7 503.4 633.6Q513.1 645.7 513.5 660.5Z" fill="#4fb22b"/><path d="M513.1 660.5Q509.8 643.8 507.1 630.1Q516.1 643.8 516.7 660.5Z" fill="#237f16"/><path d="M519.2 660.5Q517.3 641.8 518.1 626.6Q522.8 641.8 522.3 660.5Z" fill="#55b830"/><path d="M517.9 660.5Q515.5 642.4 514.3 627.5Q520.6 642.4 520.7 660.5Z" fill="#1f7d14"/><path d="M508.4 660.5Q504.1 644.0 499.5 630.4Q511.3 644.0 512.4 660.5Z" fill="#2f9320"/><path d="M536.3 660.5Q538.0 642.1 549.2 627.1Q543.3 642.1 539.3 660.5Z" fill="#45aa26"/><path d="M529.4 660.5Q529.5 641.9 538.5 626.7Q537.0 641.9 533.6 660.5Z" fill="#3c9d1f"/><path d="M538.7 660.5Q540.0 644.4 551.7 631.3Q546.5 644.4 542.3 660.5Z" fill="#3c9d1f"/><path d="M531.9 660.5Q530.9 643.1 536.6 628.8Q538.2 643.1 535.9 660.5Z" fill="#45aa26"/><path d="M510.1 660.5Q505.3 643.2 499.9 629.0Q512.8 643.2 514.2 660.5Z" fill="#3c9d1f"/><path d="M538.5 660.5Q535.7 642.0 534.3 626.9Q541.6 642.0 541.8 660.5Z" fill="#237f16"/><path d="M563.9 660.5Q564.0 643.4 571.3 629.5Q570.0 643.4 567.3 660.5Z" fill="#3aa022"/><path d="M560.0 660.5Q559.7 642.5 568.3 627.7Q567.8 642.5 564.5 660.5Z" fill="#3aa022"/><path d="M532.0 660.5Q526.2 645.6 515.7 633.5Q532.1 645.6 535.3 660.5Z" fill="#4fb22b"/><path d="M535.0 660.5Q531.8 645.3 528.4 632.8Q537.2 645.3 538.0 660.5Z" fill="#6cc436"/><path d="M566.7 660.5Q568.6 642.9 581.1 628.5Q574.5 642.9 570.0 660.5Z" fill="#45aa26"/><path d="M571.0 660.5Q567.8 644.3 565.1 631.0Q573.6 644.3 574.2 660.5Z" fill="#45aa26"/><path d="M568.2 660.5Q564.8 643.0 561.6 628.6Q570.8 643.0 571.5 660.5Z" fill="#4fb22b"/><path d="M575.3 660.5Q572.7 642.3 574.1 627.3Q580.4 642.3 579.5 660.5Z" fill="#45aa26"/><path d="M594.1 660.5Q594.4 642.0 603.0 626.9Q601.1 642.0 597.8 660.5Z" fill="#55b830"/><path d="M567.5 660.5Q563.9 644.9 561.2 632.1Q570.9 644.9 571.4 660.5Z" fill="#6cc436"/><path d="M592.8 660.5Q593.3 642.0 602.3 626.9Q599.6 642.0 596.3 660.5Z" fill="#45aa26"/><path d="M569.7 660.5Q566.0 642.0 563.5 626.9Q573.4 642.0 573.8 660.5Z" fill="#55b830"/><path d="M618.3 660.5Q618.5 642.3 625.3 627.5Q624.0 642.3 621.4 660.5Z" fill="#6cc436"/><path d="M586.8 660.5Q580.9 649.2 572.6 640.0Q588.8 649.2 591.1 660.5Z" fill="#2a8a18"/><path d="M624.3 660.5Q626.0 642.0 638.6 626.9Q632.3 642.0 627.8 660.5Z" fill="#2a8a18"/><path d="M618.2 660.5Q617.7 642.1 623.2 627.0Q623.7 642.1 621.6 660.5Z" fill="#3aa022"/><path d="M622.6 660.5Q622.7 643.5 631.8 629.6Q630.2 643.5 626.7 660.5Z" fill="#3c9d1f"/><path d="M633.6 660.5Q631.5 642.7 630.9 628.1Q636.6 642.7 636.5 660.5Z" fill="#3c9d1f"/><path d="M647.6 660.5Q647.7 642.8 656.4 628.4Q655.0 642.8 651.7 660.5Z" fill="#55b830"/><path d="M648.5 660.5Q649.0 642.6 656.2 627.9Q654.0 642.6 651.4 660.5Z" fill="#3c9d1f"/><path d="M626.8 660.5Q622.9 645.0 620.7 632.3Q631.0 645.0 631.3 660.5Z" fill="#45aa26"/><path d="M637.6 660.5Q636.2 641.9 639.3 626.8Q642.6 641.9 641.2 660.5Z" fill="#55b830"/><path d="M630.9 660.5Q628.3 642.9 629.4 628.5Q635.9 642.9 635.1 660.5Z" fill="#3aa022"/><path d="M648.0 660.5Q647.9 642.9 653.7 628.5Q653.2 642.9 651.0 660.5Z" fill="#3aa022"/><path d="M630.3 660.5Q626.9 642.8 624.7 628.3Q633.7 642.8 634.1 660.5Z" fill="#6cc436"/><path d="M630.5 660.5Q627.4 642.3 623.9 627.5Q632.4 642.3 633.3 660.5Z" fill="#3c9d1f"/><path d="M644.5 660.5Q643.2 641.8 646.0 626.6Q648.9 641.8 647.7 660.5Z" fill="#3c9d1f"/><path d="M649.1 660.5Q643.5 645.8 635.1 633.8Q650.7 645.8 653.1 660.5Z" fill="#1f7d14"/><path d="M692.8 660.5Q695.2 652.8 709.0 646.5Q701.0 652.8 696.0 660.5Z" fill="#3c9d1f"/><path d="M684.7 660.5Q685.9 646.8 695.4 635.7Q690.9 646.8 687.4 660.5Z" fill="#6cc436"/><path d="M648.3 660.5Q644.0 647.0 640.1 636.0Q651.7 647.0 652.6 660.5Z" fill="#4fb22b"/><path d="M649.0 660.5Q644.0 645.0 637.4 632.4Q651.0 645.0 652.9 660.5Z" fill="#3c9d1f"/><path d="M649.2 660.5Q643.9 645.2 634.7 632.7Q649.8 645.2 652.5 660.5Z" fill="#4fb22b"/><path d="M705.6 660.5Q707.1 643.9 718.0 630.4Q712.8 643.9 708.8 660.5Z" fill="#45aa26"/><path d="M710.6 660.5Q712.9 647.8 725.5 637.3Q717.8 647.8 713.4 660.5Z" fill="#3c9d1f"/><path d="M680.9 660.5Q677.8 642.5 674.4 627.7Q682.8 642.5 683.7 660.5Z" fill="#3c9d1f"/><path d="M678.8 660.5Q674.4 643.2 670.4 629.0Q682.1 643.2 683.0 660.5Z" fill="#3aa022"/><path d="M671.3 660.5Q666.3 648.5 658.2 638.7Q672.1 648.5 674.5 660.5Z" fill="#3c9d1f"/><path d="M289.1 660.5Q287.8 654.2 290.0 649.1Q293.2 654.2 292.1 660.5Z" fill="#2a8a18"/><path d="M267.8 660.5Q264.6 645.9 264.5 634.0Q272.8 645.9 272.3 660.5Z" fill="#3aa022"/><path d="M255.2 660.5Q253.0 653.6 252.3 648.0Q258.1 653.6 258.0 660.5Z" fill="#2a8a18"/><path d="M343.7 660.5Q344.0 654.7 354.3 649.9Q351.9 654.7 348.0 660.5Z" fill="#7ccf3c"/><path d="M514.2 660.5Q514.5 651.3 523.1 643.8Q521.1 651.3 517.9 660.5Z" fill="#237f16"/><path d="M577.0 660.5Q575.1 650.5 578.4 642.3Q582.8 650.5 581.3 660.5Z" fill="#45aa26"/><path d="M536.7 660.5Q534.1 653.7 535.3 648.1Q542.0 653.7 541.1 660.5Z" fill="#2a8a18"/><path d="M133.3 660.5Q127.6 645.4 119.3 633.0Q135.1 645.4 137.4 660.5Z" fill="#55b830"/><path d="M165.7 660.5Q162.0 647.0 159.3 635.9Q169.2 647.0 169.7 660.5Z" fill="#45aa26"/><path d="M6.8 660.5Q4.2 650.6 6.2 642.5Q12.6 650.6 11.5 660.5Z" fill="#a5df55"/><path d="M447.5 660.5Q443.4 651.3 437.3 643.8Q448.8 651.3 450.6 660.5Z" fill="#2f9320"/><path d="M511.2 660.5Q509.4 651.5 513.5 644.2Q517.4 651.5 515.6 660.5Z" fill="#6cc436"/><path d="M250.5 660.5Q249.5 648.1 256.1 638.0Q257.9 648.1 255.2 660.5Z" fill="#6cc436"/><path d="M620.9 660.5Q619.0 654.7 621.1 650.0Q625.9 654.7 624.8 660.5Z" fill="#4fb22b"/><path d="M445.5 660.5Q441.5 648.6 437.9 638.8Q448.9 648.6 449.6 660.5Z" fill="#6cc436"/><path d="M535.2 660.5Q534.2 650.2 536.6 641.7Q538.9 650.2 537.8 660.5Z" fill="#a5df55"/><path d="M629.4 660.5Q628.7 651.8 633.4 644.6Q634.5 651.8 632.7 660.5Z" fill="#8fd644"/><path d="M540.8 660.5Q535.9 648.7 528.9 639.0Q542.4 648.7 544.4 660.5Z" fill="#8fd644"/><path d="M441.7 660.5Q439.9 646.6 440.9 635.3Q445.2 646.6 444.6 660.5Z" fill="#2f9320"/><path d="M700.1 660.5Q701.7 651.1 711.6 643.3Q706.3 651.1 702.7 660.5Z" fill="#3aa022"/><path d="M245.3 660.5Q242.3 647.8 242.5 637.4Q250.1 647.8 249.6 660.5Z" fill="#2a8a18"/><path d="M262.7 660.5Q260.1 649.2 262.6 639.9Q268.9 649.2 267.6 660.5Z" fill="#3aa022"/><path d="M176.3 660.5Q173.8 649.9 176.4 641.2Q182.5 649.9 181.2 660.5Z" fill="#3aa022"/><path d="M540.7 660.5Q543.4 648.3 561.6 638.3Q552.0 648.3 545.5 660.5Z" fill="#45aa26"/><path d="M179.3 660.5Q178.4 645.6 182.4 633.4Q184.3 645.6 182.7 660.5Z" fill="#45aa26"/><path d="M551.8 660.5Q550.5 647.1 553.0 636.1Q556.2 647.1 555.0 660.5Z" fill="#45aa26"/><path d="M14.6 660.5Q12.5 646.7 16.4 635.5Q21.1 646.7 19.3 660.5Z" fill="#3aa022"/><path d="M95.5 660.5Q94.2 651.4 98.9 643.9Q101.5 651.4 99.6 660.5Z" fill="#45aa26"/><path d="M83.1 660.5Q81.6 653.2 84.9 647.3Q88.1 653.2 86.7 660.5Z" fill="#3aa022"/><path d="M257.7 660.5Q258.8 649.9 271.8 641.2Q267.0 649.9 262.2 660.5Z" fill="#1f7d14"/><path d="M242.1 660.5Q241.3 645.9 246.9 634.0Q248.0 645.9 245.7 660.5Z" fill="#45aa26"/><path d="M646.1 660.5Q642.0 652.6 636.5 646.1Q647.7 652.6 649.2 660.5Z" fill="#8fd644"/><path d="M67.9 660.5Q66.6 645.8 71.8 633.8Q74.3 645.8 72.2 660.5Z" fill="#2f9320"/><path d="M91.0 660.5Q89.1 648.3 91.3 638.2Q95.8 648.3 94.7 660.5Z" fill="#3c9d1f"/><path d="M263.3 660.5Q260.9 654.4 261.8 649.5Q267.7 654.4 267.1 660.5Z" fill="#3c9d1f"/><path d="M131.9 660.5Q129.5 648.0 127.6 637.7Q134.2 648.0 134.5 660.5Z" fill="#3aa022"/><path d="M245.5 660.5Q238.9 650.2 229.2 641.8Q247.7 650.2 250.4 660.5Z" fill="#7ccf3c"/><path d="M66.1 660.5Q63.8 648.8 66.8 639.3Q72.2 648.8 70.7 660.5Z" fill="#237f16"/><path d="M213.6 660.5Q211.6 649.2 213.6 640.0Q218.3 649.2 217.3 660.5Z" fill="#a5df55"/><path d="M280.9 660.5Q280.3 645.5 285.7 633.3Q286.4 645.5 284.2 660.5Z" fill="#3c9d1f"/><path d="M631.2 660.5Q625.0 653.0 612.1 646.9Q630.0 653.0 634.0 660.5Z" fill="#3c9d1f"/><path d="M547.7 660.5Q544.6 647.6 543.6 637.0Q551.8 647.6 551.7 660.5Z" fill="#2a8a18"/><path d="M237.2 660.5Q236.6 653.5 243.5 647.8Q244.0 653.5 241.3 660.5Z" fill="#45aa26"/><path d="M483.9 660.5Q484.9 650.9 496.8 643.1Q492.7 650.9 488.3 660.5Z" fill="#1f7d14"/><path d="M209.3 660.5Q208.9 648.8 214.4 639.2Q214.6 648.8 212.5 660.5Z" fill="#45aa26"/><path d="M212.5 660.5Q209.2 649.6 204.4 640.7Q213.8 649.6 215.1 660.5Z" fill="#3c9d1f"/><path d="M124.6 660.5Q121.8 653.0 119.5 646.8Q127.1 653.0 127.6 660.5Z" fill="#8fd644"/><path d="M670.8 660.5Q672.2 645.5 682.1 633.3Q677.1 645.5 673.5 660.5Z" fill="#8fd644"/><path d="M598.7 660.5Q599.2 654.6 608.3 649.7Q605.9 654.6 602.4 660.5Z" fill="#6cc436"/><path d="M466.7 660.5Q466.7 652.5 476.9 645.9Q475.3 652.5 471.5 660.5Z" fill="#4fb22b"/><path d="M653.1 660.5Q652.3 652.3 660.3 645.6Q661.3 652.3 658.1 660.5Z" fill="#8fd644"/><path d="M611.0 660.5Q610.3 652.6 613.6 646.1Q614.9 652.6 613.6 660.5Z" fill="#7ccf3c"/><path d="M469.6 660.5Q469.2 649.2 478.3 640.0Q478.0 649.2 474.5 660.5Z" fill="#1f7d14"/><path d="M306.8 660.5Q307.0 648.1 315.5 637.9Q313.8 648.1 310.6 660.5Z" fill="#2a8a18"/><path d="M352.1 660.5Q353.3 649.2 364.4 640.0Q359.7 649.2 355.6 660.5Z" fill="#237f16"/><path d="M348.6 660.5Q343.7 650.1 335.1 641.7Q348.9 650.1 351.4 660.5Z" fill="#55b830"/><path d="M285.2 660.5Q278.7 646.3 266.0 634.7Q284.5 646.3 288.4 660.5Z" fill="#2a8a18"/><path d="M167.8 660.5Q166.0 650.4 169.4 642.2Q173.4 650.4 171.9 660.5Z" fill="#6cc436"/><path d="M67.7 660.5Q64.7 646.6 64.0 635.2Q71.6 646.6 71.4 660.5Z" fill="#237f16"/><path d="M10.1 660.5Q8.5 651.7 10.5 644.6Q14.4 651.7 13.4 660.5Z" fill="#2a8a18"/><path d="M31.1 660.5Q31.4 653.2 42.0 647.2Q39.8 653.2 35.8 660.5Z" fill="#7ccf3c"/><path d="M493.0 660.5Q492.7 647.8 500.9 637.4Q500.6 647.8 497.4 660.5Z" fill="#3aa022"/><path d="M531.1 660.5Q531.7 648.7 541.4 639.1Q538.3 648.7 534.7 660.5Z" fill="#3c9d1f"/><path d="M116.8 660.5Q117.7 651.6 129.8 644.3Q125.9 651.6 121.4 660.5Z" fill="#a5df55"/><path d="M235.8 660.5Q234.4 646.0 236.1 634.2Q239.5 646.0 238.6 660.5Z" fill="#8fd644"/><path d="M527.0 660.5Q522.8 648.6 519.6 638.8Q530.9 648.6 531.5 660.5Z" fill="#55b830"/><path d="M409.3 660.5Q407.7 653.5 409.7 647.8Q413.5 653.5 412.5 660.5Z" fill="#1f7d14"/><path d="M348.7 660.5Q346.5 647.5 348.1 636.9Q353.6 647.5 352.6 660.5Z" fill="#237f16"/><path d="M232.2 660.5Q232.2 648.8 240.2 639.2Q239.0 648.8 236.0 660.5Z" fill="#55b830"/><path d="M276.0 660.5Q275.3 650.8 280.4 642.8Q281.5 650.8 279.4 660.5Z" fill="#6cc436"/><path d="M62.3 660.5Q60.5 654.8 62.5 650.2Q67.0 654.8 65.9 660.5Z" fill="#6cc436"/><path d="M83.2 660.5Q79.4 654.6 76.3 649.8Q86.4 654.6 87.1 660.5Z" fill="#237f16"/><path d="M618.7 660.5Q616.9 645.7 618.1 633.6Q622.8 645.7 622.1 660.5Z" fill="#1f7d14"/><path d="M643.0 660.5Q643.8 652.7 654.9 646.3Q651.3 652.7 647.2 660.5Z" fill="#3c9d1f"/><path d="M179.2 660.5Q178.5 648.1 183.9 637.9Q184.8 648.1 182.7 660.5Z" fill="#2f9320"/><path d="M130.0 660.5Q125.8 647.0 122.5 636.0Q133.8 647.0 134.4 660.5Z" fill="#45aa26"/><path d="M79.4 660.5Q81.5 649.1 95.4 639.8Q88.0 649.1 83.0 660.5Z" fill="#237f16"/><path d="M685.8 660.5Q684.3 650.8 686.0 642.9Q689.8 650.8 688.9 660.5Z" fill="#8fd644"/><path d="M571.9 660.5Q565.3 648.4 555.6 638.5Q574.0 648.4 576.8 660.5Z" fill="#6cc436"/><path d="M91.3 660.5Q91.1 648.1 95.7 638.0Q95.6 648.1 93.8 660.5Z" fill="#4fb22b"/><path d="M175.7 660.5Q174.3 645.8 176.6 633.8Q179.8 645.8 178.7 660.5Z" fill="#45aa26"/><path d="M153.0 660.5Q150.7 646.2 149.8 634.4Q155.6 646.2 155.7 660.5Z" fill="#6cc436"/><path d="M575.1 660.5Q572.7 653.2 576.0 647.2Q581.5 653.2 579.9 660.5Z" fill="#2a8a18"/><path d="M231.1 660.5Q228.0 649.0 224.6 639.6Q233.0 649.0 233.9 660.5Z" fill="#4fb22b"/><path d="M662.9 660.5Q657.1 653.3 647.4 647.3Q663.6 653.3 666.5 660.5Z" fill="#45aa26"/><path d="M396.3 660.5Q395.0 653.3 397.9 647.4Q400.9 653.3 399.6 660.5Z" fill="#6cc436"/><path d="M103.6 660.5Q101.3 645.3 103.5 632.9Q108.9 645.3 107.8 660.5Z" fill="#3c9d1f"/><path d="M553.9 660.5Q557.5 653.5 575.2 647.7Q563.2 653.5 557.0 660.5Z" fill="#3c9d1f"/><path d="M148.7 660.5Q144.7 649.0 142.7 639.6Q153.2 649.0 153.4 660.5Z" fill="#8fd644"/><path d="M233.7 660.5Q230.7 651.1 230.8 643.4Q238.6 651.1 238.1 660.5Z" fill="#4fb22b"/><path d="M604.2 660.5Q604.4 645.3 610.4 632.8Q609.1 645.3 606.8 660.5Z" fill="#7ccf3c"/><path d="M176.1 660.5Q176.3 645.3 185.0 632.9Q183.2 645.3 179.9 660.5Z" fill="#7ccf3c"/><path d="M144.5 660.5Q143.1 645.3 149.0 632.8Q151.7 645.3 149.3 660.5Z" fill="#8fd644"/><path d="M579.4 660.5Q576.8 649.9 577.2 641.3Q584.0 649.9 583.4 660.5Z" fill="#237f16"/><path d="M124.5 660.5Q122.3 651.7 121.0 644.4Q126.8 651.7 127.0 660.5Z" fill="#8fd644"/><path d="M528.3 660.5Q523.8 653.2 520.5 647.1Q532.6 653.2 533.2 660.5Z" fill="#2a8a18"/><path d="M148.7 660.5Q145.5 646.9 142.6 635.7Q151.2 646.9 151.8 660.5Z" fill="#3aa022"/><path d="M583.5 660.5Q581.2 647.2 583.1 636.3Q588.7 647.2 587.7 660.5Z" fill="#8fd644"/><path d="M558.5 660.5Q559.8 648.1 569.7 637.9Q564.8 648.1 561.2 660.5Z" fill="#1f7d14"/><path d="M13.9 660.5Q9.9 649.4 7.5 640.3Q18.3 649.4 18.6 660.5Z" fill="#2a8a18"/><path d="M581.2 660.5Q577.7 649.2 577.6 640.0Q586.6 649.2 586.1 660.5Z" fill="#a5df55"/><path d="M570.4 660.5Q569.2 650.5 575.5 642.3Q577.6 650.5 575.0 660.5Z" fill="#3aa022"/><path d="M180.1 660.5Q181.2 646.6 191.5 635.2Q187.3 646.6 183.5 660.5Z" fill="#55b830"/><path d="M209.4 660.5Q210.4 654.0 219.7 648.7Q215.8 654.0 212.4 660.5Z" fill="#a5df55"/><path d="M603.5 660.5Q601.7 649.0 603.1 639.6Q607.4 649.0 606.7 660.5Z" fill="#6cc436"/><path d="M60.3 660.5Q57.3 645.3 53.9 632.8Q62.0 645.3 62.9 660.5Z" fill="#6cc436"/><path d="M269.5 660.5Q267.1 649.3 266.5 640.2Q272.8 649.3 272.7 660.5Z" fill="#7ccf3c"/><path d="M114.8 660.5Q111.5 648.8 110.1 639.2Q118.9 648.8 118.9 660.5Z" fill="#55b830"/><path d="M208.3 660.5Q209.6 649.3 218.7 640.1Q214.2 649.3 210.9 660.5Z" fill="#45aa26"/><path d="M362.9 660.5Q359.6 650.3 357.8 641.9Q366.6 650.3 366.7 660.5Z" fill="#8fd644"/><path d="M296.4 660.5Q296.4 649.3 302.2 640.1Q301.3 649.3 299.1 660.5Z" fill="#7ccf3c"/><path d="M223.8 660.5Q224.0 653.6 233.3 647.9Q231.2 653.6 227.8 660.5Z" fill="#a5df55"/><path d="M127.9 660.5Q127.9 652.0 138.0 645.0Q136.7 652.0 132.8 660.5Z" fill="#55b830"/><path d="M485.6 660.5Q480.1 647.1 471.0 636.2Q486.4 647.1 489.1 660.5Z" fill="#237f16"/><path d="M383.4 660.5Q383.0 652.1 389.6 645.2Q389.6 652.1 387.0 660.5Z" fill="#237f16"/><path d="M88.2 660.5Q88.8 651.2 98.9 643.6Q95.8 651.2 92.0 660.5Z" fill="#55b830"/><path d="M168.5 660.5Q167.5 651.3 173.1 643.8Q174.8 651.3 172.5 660.5Z" fill="#3c9d1f"/><path d="M611.4 660.5Q607.0 645.9 602.9 633.9Q614.9 645.9 615.9 660.5Z" fill="#55b830"/><path d="M391.4 660.5Q391.7 648.8 401.2 639.2Q399.0 648.8 395.4 660.5Z" fill="#237f16"/><path d="M619.6 660.5Q616.0 651.8 612.7 644.7Q622.4 651.8 623.1 660.5Z" fill="#55b830"/><path d="M67.1 660.5Q67.3 653.2 78.2 647.3Q76.1 653.2 71.9 660.5Z" fill="#3aa022"/><path d="M223.1 660.5Q220.4 653.6 221.7 647.9Q228.4 653.6 227.5 660.5Z" fill="#8fd644"/><path d="M86.9 660.5Q82.5 651.6 76.9 644.2Q89.0 651.6 90.6 660.5Z" fill="#7ccf3c"/><path d="M574.9 660.5Q569.4 651.6 559.9 644.4Q575.4 651.6 578.2 660.5Z" fill="#55b830"/><path d="M70.0 660.5Q71.8 651.9 85.2 644.8Q78.7 651.9 73.8 660.5Z" fill="#7ccf3c"/><path d="M609.7 660.5Q609.4 647.5 616.5 636.8Q616.4 647.5 613.6 660.5Z" fill="#45aa26"/><path d="M317.0 660.5Q319.5 653.6 335.5 648.0Q326.8 653.6 321.1 660.5Z" fill="#8fd644"/><path d="M137.2 660.5Q138.1 645.5 146.3 633.1Q142.8 645.5 139.8 660.5Z" fill="#a5df55"/><path d="M655.8 660.5Q655.2 652.2 663.2 645.4Q663.8 652.2 660.6 660.5Z" fill="#55b830"/><path d="M62.5 660.5Q60.7 645.9 61.1 633.9Q65.7 645.9 65.3 660.5Z" fill="#237f16"/><path d="M675.9 660.5Q671.8 650.6 665.0 642.5Q676.3 650.6 678.4 660.5Z" fill="#2f9320"/><path d="M35.2 660.5Q31.0 654.9 24.9 650.3Q36.5 654.9 38.3 660.5Z" fill="#a5df55"/><path d="M656.8 660.5Q655.9 651.3 662.9 643.7Q664.2 651.3 661.4 660.5Z" fill="#a5df55"/><path d="M528.8 660.5Q526.5 651.1 527.2 643.3Q533.1 651.1 532.5 660.5Z" fill="#3aa022"/><path d="M1.4 660.5Q0.0 646.7 4.2 635.4Q7.0 646.7 5.3 660.5Z" fill="#a5df55"/><path d="M343.9 660.5Q344.5 647.1 353.4 636.1Q350.6 647.1 347.3 660.5Z" fill="#237f16"/><path d="M484.2 660.5Q478.9 650.5 471.1 642.4Q485.8 650.5 488.0 660.5Z" fill="#7ccf3c"/><path d="M3.0 660.5Q-0.3 646.1 -1.1 634.3Q7.4 646.1 7.3 660.5Z" fill="#3c9d1f"/><path d="M389.6 660.5Q390.3 649.6 402.1 640.6Q398.5 649.6 394.1 660.5Z" fill="#4fb22b"/><path d="M262.7 660.5Q261.2 645.2 265.3 632.6Q268.6 645.2 266.8 660.5Z" fill="#1f7d14"/><path d="M648.6 660.5Q649.3 650.4 657.8 642.1Q654.8 650.4 651.7 660.5Z" fill="#7ccf3c"/><path d="M315.4 660.5Q314.7 654.2 322.6 649.1Q323.3 654.2 320.2 660.5Z" fill="#55b830"/><path d="M659.7 660.5Q655.5 649.3 650.6 640.1Q662.1 649.3 663.4 660.5Z" fill="#8fd644"/><path d="M152.5 660.5Q150.6 650.7 152.2 642.7Q157.0 650.7 156.1 660.5Z" fill="#55b830"/><path d="M243.1 660.5Q235.4 653.8 222.1 648.2Q243.7 653.8 247.7 660.5Z" fill="#2f9320"/><path d="M156.1 660.5Q158.1 652.8 169.7 646.5Q162.7 652.8 158.6 660.5Z" fill="#3aa022"/><path d="M201.1 660.5Q194.9 654.8 185.7 650.2Q203.0 654.8 205.6 660.5Z" fill="#4fb22b"/><path d="M422.0 660.5Q422.7 652.0 434.0 645.1Q430.5 652.0 426.3 660.5Z" fill="#8fd644"/><path d="M446.3 660.5Q440.7 653.3 431.0 647.4Q447.0 653.3 449.8 660.5Z" fill="#2a8a18"/><path d="M329.4 660.5Q329.4 648.9 335.9 639.4Q334.8 648.9 332.3 660.5Z" fill="#55b830"/><path d="M622.6 660.5Q622.5 646.5 628.3 635.1Q627.8 646.5 625.6 660.5Z" fill="#3aa022"/><path d="M260.1 660.5Q256.2 648.9 252.6 639.5Q263.4 648.9 264.1 660.5Z" fill="#45aa26"/><path d="M3.1 660.5Q0.2 651.5 -2.7 644.1Q5.2 651.5 5.8 660.5Z" fill="#45aa26"/><path d="M232.2 660.5Q232.9 647.9 244.3 637.6Q241.0 647.9 236.8 660.5Z" fill="#237f16"/><path d="M123.5 660.5Q118.9 645.4 110.6 633.1Q123.7 645.4 126.2 660.5Z" fill="#55b830"/><path d="M696.4 660.5Q693.0 651.9 689.0 644.9Q698.4 651.9 699.5 660.5Z" fill="#55b830"/><path d="M71.3 660.5Q72.1 651.3 84.9 643.8Q80.9 651.3 76.2 660.5Z" fill="#3aa022"/><path d="M377.9 660.5Q376.3 654.3 379.7 649.1Q383.2 654.3 381.7 660.5Z" fill="#8fd644"/><path d="M395.6 660.5Q389.0 651.4 379.5 644.0Q397.8 651.4 400.5 660.5Z" fill="#6cc436"/><path d="M181.0 660.5Q177.5 646.9 172.5 635.7Q182.1 646.9 183.6 660.5Z" fill="#4fb22b"/><path d="M16.1 660.5Q15.7 652.1 20.3 645.2Q20.5 652.1 18.7 660.5Z" fill="#55b830"/><path d="M501.6 660.5Q500.6 648.5 503.3 638.8Q505.5 648.5 504.3 660.5Z" fill="#45aa26"/><path d="M49.4 660.5Q47.6 648.1 47.9 638.0Q52.5 648.1 52.1 660.5Z" fill="#a5df55"/><path d="M565.5 660.5Q564.8 650.5 571.9 642.2Q572.8 650.5 570.0 660.5Z" fill="#237f16"/><path d="M655.3 660.5Q652.9 649.7 656.0 640.9Q661.8 649.7 660.2 660.5Z" fill="#8fd644"/><path d="M335.2 660.5Q336.6 647.3 347.5 636.5Q342.2 647.3 338.3 660.5Z" fill="#6cc436"/><path d="M395.5 660.5Q395.9 646.6 402.4 635.2Q400.5 646.6 398.1 660.5Z" fill="#55b830"/><path d="M606.3 660.5Q608.7 654.4 625.4 649.5Q616.8 654.4 610.8 660.5Z" fill="#3c9d1f"/><path d="M242.5 660.5Q242.3 651.0 248.3 643.2Q247.7 651.0 245.4 660.5Z" fill="#7ccf3c"/><path d="M64.2 660.5Q61.5 647.9 59.4 637.7Q66.6 647.9 67.0 660.5Z" fill="#3aa022"/><path d="M312.3 660.5Q309.1 649.1 308.3 639.8Q316.8 649.1 316.6 660.5Z" fill="#a5df55"/><path d="M17.7 660.5Q13.2 646.6 6.5 635.3Q19.1 646.6 21.0 660.5Z" fill="#1f7d14"/><path d="M304.9 660.5Q298.3 652.7 284.8 646.2Q303.7 652.7 307.9 660.5Z" fill="#2a8a18"/><path d="M452.5 660.5Q447.9 652.7 440.7 646.4Q453.4 652.7 455.5 660.5Z" fill="#2a8a18"/><path d="M310.0 660.5Q307.6 645.2 308.3 632.8Q314.3 645.2 313.7 660.5Z" fill="#237f16"/><path d="M563.2 660.5Q563.8 650.3 571.6 642.0Q569.0 650.3 566.1 660.5Z" fill="#4fb22b"/><path d="M563.6 660.5Q564.7 653.2 575.6 647.2Q571.2 653.2 567.2 660.5Z" fill="#3c9d1f"/><path d="M72.6 660.5Q72.8 647.6 82.2 637.1Q80.3 647.6 76.7 660.5Z" fill="#45aa26"/><path d="M603.1 660.5Q600.1 654.2 601.4 649.0Q608.9 654.2 608.0 660.5Z" fill="#4fb22b"/><path d="M485.1 660.5Q481.6 649.0 478.6 639.5Q488.0 649.0 488.6 660.5Z" fill="#237f16"/><path d="M657.7 660.5Q658.3 652.2 670.2 645.3Q666.9 652.2 662.5 660.5Z" fill="#237f16"/><path d="M231.2 660.5Q231.3 652.8 240.1 646.5Q238.7 652.8 235.3 660.5Z" fill="#8fd644"/><path d="M166.3 660.5Q166.6 650.6 175.4 642.5Q173.3 650.6 170.0 660.5Z" fill="#3c9d1f"/><path d="M307.7 660.5Q301.7 648.5 293.8 638.8Q310.1 648.5 312.3 660.5Z" fill="#2f9320"/><path d="M160.3 660.5Q158.8 646.7 160.0 635.5Q163.8 646.7 163.1 660.5Z" fill="#237f16"/><path d="M526.4 660.5Q525.3 648.8 531.9 639.1Q533.9 648.8 531.3 660.5Z" fill="#7ccf3c"/><path d="M331.2 660.5Q327.7 651.0 323.1 643.2Q333.0 651.0 334.2 660.5Z" fill="#55b830"/><path d="M664.9 660.5Q661.8 653.7 661.9 648.2Q669.7 653.7 669.3 660.5Z" fill="#45aa26"/><path d="M291.7 660.5Q288.2 645.5 285.8 633.2Q295.2 645.5 295.6 660.5Z" fill="#3aa022"/><path d="M140.9 660.5Q141.4 646.1 153.1 634.3Q150.1 646.1 145.7 660.5Z" fill="#45aa26"/><path d="M527.1 660.5Q529.2 646.6 540.9 635.3Q533.8 646.6 529.7 660.5Z" fill="#8fd644"/><path d="M572.0 660.5Q571.4 653.9 579.0 648.5Q579.4 653.9 576.5 660.5Z" fill="#4fb22b"/><path d="M689.2 660.5Q687.3 646.7 691.3 635.5Q695.6 646.7 693.8 660.5Z" fill="#1f7d14"/><path d="M649.6 660.5Q645.8 647.7 643.3 637.3Q653.4 647.7 653.9 660.5Z" fill="#237f16"/><path d="M415.6 660.5Q415.9 653.4 424.5 647.7Q422.5 653.4 419.2 660.5Z" fill="#6cc436"/><path d="M187.7 660.5Q183.1 645.9 177.3 633.9Q190.0 645.9 191.6 660.5Z" fill="#1f7d14"/><path d="M202.7 660.5Q205.5 646.2 219.4 634.5Q210.3 646.2 205.4 660.5Z" fill="#3c9d1f"/><path d="M576.7 660.5Q575.7 655.0 580.2 650.4Q582.1 655.0 580.2 660.5Z" fill="#2a8a18"/><path d="M557.8 660.5Q556.5 650.3 562.2 641.9Q564.9 650.3 562.5 660.5Z" fill="#3aa022"/><path d="M7.2 660.5Q4.5 654.1 6.1 648.8Q12.8 654.1 11.8 660.5Z" fill="#7ccf3c"/><path d="M364.8 660.5Q364.2 652.7 369.3 646.3Q370.2 652.7 368.1 660.5Z" fill="#1f7d14"/><path d="M486.6 660.5Q484.0 649.9 485.2 641.2Q491.7 649.9 490.9 660.5Z" fill="#a5df55"/><path d="M401.2 660.5Q396.4 653.4 390.7 647.5Q403.8 653.4 405.3 660.5Z" fill="#1f7d14"/><path d="M56.8 660.5Q54.9 647.6 55.9 637.0Q60.5 647.6 59.8 660.5Z" fill="#45aa26"/><path d="M706.4 660.5Q706.0 651.1 713.7 643.5Q713.5 651.1 710.5 660.5Z" fill="#55b830"/><path d="M706.1 660.5Q702.8 650.1 701.8 641.6Q710.4 650.1 710.3 660.5Z" fill="#55b830"/><path d="M3.2 660.5Q3.3 653.0 11.1 646.9Q9.8 653.0 6.8 660.5Z" fill="#2f9320"/><path d="M217.4 660.5Q215.5 646.6 218.8 635.2Q223.3 646.6 221.8 660.5Z" fill="#6cc436"/><path d="M161.7 660.5Q159.8 645.8 160.1 633.7Q164.8 645.8 164.4 660.5Z" fill="#55b830"/><path d="M85.4 660.5Q84.3 654.5 90.2 649.6Q92.1 654.5 89.7 660.5Z" fill="#8fd644"/><path d="M490.2 660.5Q489.5 654.7 497.1 649.9Q498.0 654.7 495.0 660.5Z" fill="#55b830"/><path d="M159.7 660.5Q158.6 649.4 162.5 640.3Q164.9 649.4 163.2 660.5Z" fill="#3aa022"/><path d="M242.8 660.5Q239.4 648.6 239.9 638.9Q248.4 648.6 247.7 660.5Z" fill="#3c9d1f"/><path d="M186.2 660.5Q187.3 650.0 196.0 641.3Q192.1 650.0 188.9 660.5Z" fill="#3aa022"/><path d="M152.7 660.5Q149.4 652.7 148.5 646.4Q156.9 652.7 156.8 660.5Z" fill="#6cc436"/><path d="M413.7 660.5Q417.0 647.2 434.0 636.4Q423.2 647.2 417.2 660.5Z" fill="#1f7d14"/><path d="M518.5 660.5Q516.4 649.6 520.6 640.7Q525.4 649.6 523.5 660.5Z" fill="#8fd644"/><path d="M465.9 660.5Q464.0 653.7 463.7 648.1Q468.6 653.7 468.5 660.5Z" fill="#3c9d1f"/><path d="M112.0 660.5Q107.7 649.6 102.8 640.7Q114.4 649.6 115.7 660.5Z" fill="#3aa022"/><path d="M485.4 660.5Q487.4 646.5 499.3 635.1Q492.5 646.5 488.2 660.5Z" fill="#3aa022"/><path d="M253.3 660.5Q255.9 651.8 272.5 644.7Q263.7 651.8 257.7 660.5Z" fill="#3c9d1f"/><path d="M469.1 660.5Q468.5 648.6 472.5 638.8Q473.4 648.6 471.8 660.5Z" fill="#3c9d1f"/><path d="M323.2 660.5Q324.1 653.0 332.7 646.8Q329.2 653.0 326.0 660.5Z" fill="#55b830"/><path d="M320.7 660.5Q315.4 645.2 304.8 632.7Q320.0 645.2 323.2 660.5Z" fill="#237f16"/><path d="M437.2 660.5Q433.7 648.3 430.3 638.4Q439.9 648.3 440.7 660.5Z" fill="#2a8a18"/><path d="M465.1 660.5Q461.3 653.1 458.1 647.0Q468.4 653.1 469.1 660.5Z" fill="#3aa022"/><path d="M52.5 660.5Q52.2 647.4 57.9 636.7Q57.6 647.4 55.5 660.5Z" fill="#4fb22b"/><path d="M195.8 660.5Q196.2 653.0 204.9 646.9Q202.6 653.0 199.3 660.5Z" fill="#2a8a18"/><path d="M475.8 660.5Q473.3 652.7 475.0 646.3Q481.4 652.7 480.3 660.5Z" fill="#237f16"/><path d="M114.1 660.5Q113.7 646.4 118.4 635.0Q118.9 646.4 117.0 660.5Z" fill="#7ccf3c"/><path d="M450.9 660.5Q451.9 649.8 461.5 641.1Q457.4 649.8 453.9 660.5Z" fill="#55b830"/><path d="M675.0 660.5Q670.8 653.0 664.5 646.8Q676.1 653.0 677.9 660.5Z" fill="#4fb22b"/><path d="M53.3 660.5Q54.7 651.5 64.6 644.2Q59.6 651.5 56.0 660.5Z" fill="#2f9320"/><path d="M44.0 660.5Q40.8 645.8 36.7 633.8Q45.4 645.8 46.5 660.5Z" fill="#7ccf3c"/><path d="M64.5 660.5Q62.0 649.4 63.7 640.3Q70.0 649.4 68.9 660.5Z" fill="#2f9320"/><path d="M661.5 660.5Q659.0 650.8 661.8 642.9Q667.9 650.8 666.4 660.5Z" fill="#45aa26"/><path d="M669.6 660.5Q665.3 651.1 662.0 643.4Q673.6 651.1 674.2 660.5Z" fill="#237f16"/><path d="M544.2 660.5Q543.8 649.7 551.6 640.8Q551.6 649.7 548.5 660.5Z" fill="#7ccf3c"/><path d="M656.2 660.5Q654.6 654.6 655.8 649.7Q659.8 654.6 659.1 660.5Z" fill="#4fb22b"/><path d="M309.8 660.5Q309.5 652.7 317.9 646.3Q317.5 652.7 314.3 660.5Z" fill="#2f9320"/><path d="M520.8 660.5Q520.0 654.3 524.4 649.2Q525.7 654.3 523.9 660.5Z" fill="#3aa022"/><path d="M700.4 660.5Q696.3 645.1 693.6 632.5Q704.4 645.1 704.9 660.5Z" fill="#3aa022"/><path d="M502.3 660.5Q500.6 646.4 503.3 635.0Q507.4 646.4 506.1 660.5Z" fill="#55b830"/><path d="M16.5 660.5Q14.3 650.3 15.9 642.0Q21.2 650.3 20.3 660.5Z" fill="#3aa022"/><path d="M210.3 660.5Q213.0 650.2 228.7 641.7Q219.5 650.2 213.9 660.5Z" fill="#45aa26"/><path d="M337.7 660.5Q338.5 652.3 347.8 645.5Q344.5 652.3 341.1 660.5Z" fill="#6cc436"/><path d="M93.2 660.5Q86.4 654.8 72.6 650.2Q92.1 654.8 96.4 660.5Z" fill="#45aa26"/><path d="M551.3 660.5Q547.7 651.8 544.4 644.7Q554.1 651.8 554.9 660.5Z" fill="#6cc436"/><path d="M563.4 660.5Q563.1 654.9 569.2 650.4Q569.2 654.9 566.8 660.5Z" fill="#4fb22b"/><path d="M232.9 660.5Q232.5 653.7 239.4 648.1Q239.5 653.7 236.9 660.5Z" fill="#6cc436"/><path d="M406.4 660.5Q402.7 645.5 401.1 633.2Q410.9 645.5 410.9 660.5Z" fill="#45aa26"/><path d="M488.5 660.5Q485.0 647.9 480.5 637.5Q490.2 647.9 491.4 660.5Z" fill="#6cc436"/><path d="M399.0 660.5Q396.7 646.1 397.5 634.3Q403.4 646.1 402.7 660.5Z" fill="#4fb22b"/><path d="M650.3 660.5Q651.2 651.3 660.6 643.9Q657.0 651.3 653.5 660.5Z" fill="#2f9320"/><path d="M156.7 660.5Q149.3 652.3 132.9 645.6Q154.3 652.3 159.5 660.5Z" fill="#2f9320"/><path d="M330.6 660.5Q329.1 646.4 335.2 634.9Q338.1 646.4 335.6 660.5Z" fill="#55b830"/><path d="M553.6 660.5Q552.0 647.9 557.2 637.7Q560.5 647.9 558.3 660.5Z" fill="#45aa26"/><path d="M348.1 660.5Q346.0 652.8 345.1 646.5Q350.8 652.8 350.8 660.5Z" fill="#3c9d1f"/><path d="M259.3 660.5Q258.5 646.6 265.6 635.2Q266.7 646.6 263.9 660.5Z" fill="#8fd644"/><path d="M618.7 660.5Q616.2 649.3 618.5 640.2Q624.6 649.3 623.3 660.5Z" fill="#237f16"/><path d="M157.2 660.5Q157.8 652.4 168.4 645.7Q165.5 652.4 161.5 660.5Z" fill="#8fd644"/><path d="M511.7 660.5Q510.2 650.0 514.1 641.3Q517.4 650.0 515.7 660.5Z" fill="#2a8a18"/><path d="M675.8 660.5Q678.9 649.1 694.5 639.8Q684.2 649.1 678.7 660.5Z" fill="#2f9320"/><path d="M455.2 660.5Q454.7 648.9 463.2 639.4Q463.3 648.9 460.0 660.5Z" fill="#3c9d1f"/><path d="M93.2 660.5Q92.9 654.9 98.9 650.3Q98.9 654.9 96.6 660.5Z" fill="#3aa022"/><path d="M589.5 660.5Q591.4 645.7 607.2 633.6Q600.0 645.7 594.3 660.5Z" fill="#3c9d1f"/><path d="M46.8 660.5Q43.4 651.2 42.3 643.5Q51.2 651.2 51.1 660.5Z" fill="#2a8a18"/><path d="M95.9 660.5Q94.5 650.0 100.5 641.4Q103.4 650.0 100.9 660.5Z" fill="#3c9d1f"/><path d="M117.1 660.5Q114.9 651.9 114.6 644.8Q120.3 651.9 120.1 660.5Z" fill="#237f16"/><path d="M197.2 660.5Q198.1 645.3 206.3 632.8Q202.7 645.3 199.7 660.5Z" fill="#6cc436"/><path d="M341.6 660.5Q346.8 654.4 368.7 649.3Q352.0 654.4 344.5 660.5Z" fill="#8fd644"/><path d="M621.7 660.5Q624.3 652.7 637.7 646.4Q629.0 652.7 624.3 660.5Z" fill="#2a8a18"/><path d="M462.0 660.5Q463.6 647.4 474.0 636.6Q468.5 647.4 464.7 660.5Z" fill="#8fd644"/><path d="M22.4 660.5Q20.3 649.9 21.9 641.2Q27.2 649.9 26.2 660.5Z" fill="#2a8a18"/><path d="M334.7 660.5Q333.9 647.6 338.4 637.1Q339.9 647.6 338.0 660.5Z" fill="#2a8a18"/><path d="M84.1 660.5Q82.2 653.9 82.0 648.6Q87.0 653.9 86.8 660.5Z" fill="#3aa022"/><path d="M420.7 660.5Q421.3 649.5 430.1 640.5Q427.4 649.5 424.1 660.5Z" fill="#7ccf3c"/><path d="M560.4 660.5Q559.5 647.5 564.6 636.8Q566.2 647.5 564.1 660.5Z" fill="#2f9320"/><path d="M423.3 660.5Q421.9 653.8 426.3 648.4Q429.2 653.8 427.3 660.5Z" fill="#6cc436"/><path d="M543.0 660.5Q542.2 648.2 550.1 638.1Q551.0 648.2 547.9 660.5Z" fill="#2a8a18"/><path d="M689.2 660.5Q687.7 652.4 689.0 645.8Q692.7 652.4 692.0 660.5Z" fill="#a5df55"/><path d="M236.3 660.5Q238.8 652.6 256.8 646.2Q247.7 652.6 241.3 660.5Z" fill="#1f7d14"/><path d="M127.5 660.5Q124.1 653.1 119.4 647.0Q128.8 653.1 130.1 660.5Z" fill="#2a8a18"/><path d="M156.7 660.5Q156.9 648.5 163.1 638.7Q161.7 648.5 159.4 660.5Z" fill="#2a8a18"/><path d="M203.2 660.5Q200.0 647.8 198.4 637.3Q206.7 647.8 206.8 660.5Z" fill="#1f7d14"/><path d="M410.6 660.5Q410.6 652.6 418.8 646.2Q417.6 652.6 414.5 660.5Z" fill="#1f7d14"/><path d="M259.6 660.5Q252.1 650.7 238.2 642.7Q259.5 650.7 263.7 660.5Z" fill="#237f16"/><path d="M35.2 660.5Q30.5 646.7 24.8 635.4Q37.7 646.7 39.2 660.5Z" fill="#1f7d14"/><path d="M504.2 660.5Q500.7 654.8 498.4 650.1Q507.9 654.8 508.2 660.5Z" fill="#3c9d1f"/><path d="M646.1 660.5Q644.9 654.1 647.1 648.8Q649.9 654.1 648.9 660.5Z" fill="#237f16"/><path d="M360.3 660.5Q359.4 649.7 364.7 640.9Q366.1 649.7 364.0 660.5Z" fill="#45aa26"/><path d="M232.3 660.5Q234.8 653.6 249.0 648.0Q240.6 653.6 235.6 660.5Z" fill="#7ccf3c"/><path d="M664.8 660.5Q666.7 652.5 677.6 646.0Q671.3 652.5 667.4 660.5Z" fill="#7ccf3c"/><path d="M211.3 660.5Q211.5 648.9 218.4 639.4Q217.1 648.9 214.5 660.5Z" fill="#3aa022"/><path d="M111.8 660.5Q111.0 651.4 116.9 643.9Q118.1 651.4 115.7 660.5Z" fill="#2a8a18"/><path d="M80.8 660.5Q75.6 649.9 69.9 641.2Q84.0 649.9 85.4 660.5Z" fill="#3aa022"/><path d="M452.0 660.5Q452.6 649.3 464.5 640.2Q461.2 649.3 456.8 660.5Z" fill="#3c9d1f"/><path d="M11.3 660.5Q9.0 651.5 7.4 644.2Q13.6 651.5 13.9 660.5Z" fill="#1f7d14"/><path d="M663.6 660.5Q664.5 650.2 673.5 641.7Q669.9 650.2 666.6 660.5Z" fill="#6cc436"/><path d="M12.1 660.5Q10.8 649.6 13.9 640.6Q16.9 649.6 15.5 660.5Z" fill="#2f9320"/><path d="M539.3 660.5Q541.2 654.1 555.1 648.9Q548.4 654.1 543.3 660.5Z" fill="#7ccf3c"/><path d="M438.8 660.5Q438.1 654.6 443.2 649.7Q444.3 654.6 442.3 660.5Z" fill="#55b830"/><path d="M590.8 660.5Q590.0 649.0 597.6 639.7Q598.6 649.0 595.6 660.5Z" fill="#55b830"/><path d="M548.3 660.5Q546.8 653.1 551.9 647.0Q555.1 653.1 552.9 660.5Z" fill="#7ccf3c"/><path d="M681.6 660.5Q679.5 645.4 680.7 633.0Q685.9 645.4 685.1 660.5Z" fill="#7ccf3c"/><path d="M100.0 660.5Q104.0 646.4 124.9 634.9Q111.7 646.4 104.3 660.5Z" fill="#1f7d14"/><path d="M82.4 660.5Q83.2 645.7 93.1 633.7Q89.7 645.7 86.0 660.5Z" fill="#2a8a18"/><path d="M429.7 660.5Q424.7 651.8 419.1 644.6Q432.6 651.8 434.1 660.5Z" fill="#237f16"/><path d="M636.9 660.5Q639.1 648.0 652.3 637.7Q644.6 648.0 639.9 660.5Z" fill="#237f16"/><path d="M543.0 660.5Q538.5 654.3 534.7 649.1Q546.9 654.3 547.7 660.5Z" fill="#55b830"/><path d="M266.4 660.5Q266.5 651.4 276.7 644.0Q275.1 651.4 271.2 660.5Z" fill="#a5df55"/><path d="M696.3 660.5Q694.2 649.7 698.1 640.8Q702.8 649.7 701.1 660.5Z" fill="#3c9d1f"/><path d="M381.8 660.5Q379.7 652.5 381.8 645.9Q386.8 652.5 385.7 660.5Z" fill="#4fb22b"/><path d="M216.6 660.5Q217.0 649.7 224.1 640.8Q222.2 649.7 219.5 660.5Z" fill="#3aa022"/><path d="M341.2 660.5Q340.8 648.5 350.2 638.7Q349.7 648.5 346.1 660.5Z" fill="#3aa022"/><path d="M619.9 660.5Q619.6 648.7 624.2 639.0Q624.5 648.7 622.7 660.5Z" fill="#2a8a18"/><path d="M343.1 660.5Q341.5 646.4 345.7 634.8Q349.2 646.4 347.4 660.5Z" fill="#6cc436"/><path d="M302.7 660.5Q300.8 647.1 301.4 636.1Q306.2 647.1 305.7 660.5Z" fill="#6cc436"/><path d="M127.6 660.5Q127.1 648.1 135.3 638.0Q135.4 648.1 132.3 660.5Z" fill="#6cc436"/><path d="M578.9 660.5Q578.9 646.7 586.4 635.5Q585.5 646.7 582.6 660.5Z" fill="#237f16"/><path d="M271.4 660.5Q272.4 649.5 281.0 640.6Q277.1 649.5 274.0 660.5Z" fill="#55b830"/><path d="M643.2 660.5Q642.3 648.5 645.8 638.7Q647.5 648.5 646.0 660.5Z" fill="#2f9320"/><path d="M198.7 660.5Q195.2 647.0 193.8 636.0Q203.0 647.0 203.1 660.5Z" fill="#3aa022"/><path d="M207.1 660.5Q202.7 647.0 199.4 635.9Q211.0 647.0 211.7 660.5Z" fill="#2f9320"/><path d="M178.4 660.5Q175.9 650.9 178.4 643.1Q184.4 650.9 183.1 660.5Z" fill="#7ccf3c"/><path d="M187.3 660.5Q186.5 650.7 192.0 642.7Q193.3 650.7 191.1 660.5Z" fill="#3c9d1f"/><path d="M47.7 660.5Q45.1 651.5 45.2 644.1Q51.8 651.5 51.4 660.5Z" fill="#3aa022"/><path d="M595.7 660.5Q592.1 647.1 586.8 636.0Q596.8 647.1 598.3 660.5Z" fill="#1f7d14"/><path d="M663.7 660.5Q664.0 646.1 672.7 634.3Q670.8 646.1 667.5 660.5Z" fill="#2a8a18"/><path d="M68.3 660.5Q66.4 652.1 68.9 645.3Q73.3 652.1 72.1 660.5Z" fill="#2a8a18"/><path d="M677.0 660.5Q673.9 647.5 674.7 636.8Q682.6 647.5 681.9 660.5Z" fill="#1f7d14"/><path d="M509.7 660.5Q509.8 649.0 516.7 639.7Q515.4 649.0 512.8 660.5Z" fill="#7ccf3c"/><path d="M673.2 660.5Q669.8 648.6 668.0 638.9Q677.1 648.6 677.3 660.5Z" fill="#55b830"/><path d="M557.1 660.5Q557.1 651.4 565.1 643.9Q564.1 651.4 561.0 660.5Z" fill="#2f9320"/><path d="M4.8 660.5Q1.8 647.3 -1.7 636.5Q6.6 647.3 7.5 660.5Z" fill="#2a8a18"/><path d="M131.9 660.5Q127.8 647.9 123.3 637.5Q134.5 647.9 135.7 660.5Z" fill="#1f7d14"/><path d="M136.3 660.5Q137.2 648.7 149.2 639.1Q145.1 648.7 140.6 660.5Z" fill="#237f16"/><path d="M91.0 660.5Q90.7 646.4 97.1 634.9Q96.9 646.4 94.4 660.5Z" fill="#a5df55"/><path d="M93.7 660.5Q92.7 651.5 99.8 644.1Q101.2 651.5 98.3 660.5Z" fill="#7ccf3c"/><path d="M558.9 660.5Q559.4 649.5 570.6 640.5Q567.8 649.5 563.6 660.5Z" fill="#2a8a18"/><path d="M10.1 658.0L6.4 645.1L13.3 658.0Z" fill="#b4e05c"/><path d="M7.4 659.1L2.3 654.1L10.6 659.1Z" fill="#c5e86e"/><path d="M10.5 656.8L8.8 646.1L13.7 656.8Z" fill="#b4e05c"/><path d="M10.3 656.7L20.6 649.3L13.5 656.7Z" fill="#b4e05c"/><path d="M6.2 658.8L8.5 646.9L9.4 658.8Z" fill="#b4e05c"/><path d="M40.7 657.5L33.9 651.0L43.9 657.5Z" fill="#c5e86e"/><path d="M46.3 656.8L56.9 648.0L49.5 656.8Z" fill="#d4ef84"/><path d="M43.2 655.9L44.8 646.3L46.4 655.9Z" fill="#d4ef84"/><path d="M42.1 654.7L41.1 642.9L45.3 654.7Z" fill="#c5e86e"/><path d="M45.9 658.5L53.4 646.4L49.1 658.5Z" fill="#d4ef84"/><path d="M97.6 654.9L88.9 648.8L100.8 654.9Z" fill="#d4ef84"/><path d="M98.6 658.9L107.6 653.1L101.8 658.9Z" fill="#b4e05c"/><path d="M97.4 658.4L98.8 645.6L100.6 658.4Z" fill="#b4e05c"/><path d="M99.3 657.4L102.6 644.2L102.5 657.4Z" fill="#c5e86e"/><path d="M97.5 656.4L94.1 645.9L100.7 656.4Z" fill="#b4e05c"/><path d="M172.5 655.5L179.2 646.9L175.7 655.5Z" fill="#c5e86e"/><path d="M171.9 655.7L172.4 642.6L175.1 655.7Z" fill="#c5e86e"/><path d="M170.0 656.5L179.6 646.8L173.2 656.5Z" fill="#b4e05c"/><path d="M172.5 657.1L175.4 643.8L175.7 657.1Z" fill="#d4ef84"/><path d="M169.8 659.2L165.1 653.1L173.0 659.2Z" fill="#d4ef84"/><path d="M251.3 659.4L246.8 646.0L254.5 659.4Z" fill="#c5e86e"/><path d="M246.8 657.6L237.3 650.4L250.0 657.6Z" fill="#d4ef84"/><path d="M245.5 658.9L258.2 652.0L248.7 658.9Z" fill="#d4ef84"/><path d="M249.1 657.3L259.6 649.3L252.3 657.3Z" fill="#d4ef84"/><path d="M248.4 658.5L252.3 645.7L251.6 658.5Z" fill="#d4ef84"/><path d="M300.7 658.0L310.8 650.1L303.9 658.0Z" fill="#b4e05c"/><path d="M295.8 655.3L300.2 646.6L299.0 655.3Z" fill="#c5e86e"/><path d="M295.9 657.1L298.8 646.2L299.1 657.1Z" fill="#b4e05c"/><path d="M297.7 656.9L306.1 646.4L300.9 656.9Z" fill="#c5e86e"/><path d="M299.2 659.3L306.7 651.4L302.4 659.3Z" fill="#c5e86e"/><path d="M369.6 656.9L380.9 651.7L372.8 656.9Z" fill="#d4ef84"/><path d="M370.7 657.4L380.9 651.5L373.9 657.4Z" fill="#b4e05c"/><path d="M371.7 655.1L374.5 643.9L374.9 655.1Z" fill="#c5e86e"/><path d="M373.0 655.3L370.3 646.4L376.2 655.3Z" fill="#d4ef84"/><path d="M371.4 656.8L379.6 651.6L374.6 656.8Z" fill="#c5e86e"/><path d="M438.8 659.4L445.0 650.9L442.0 659.4Z" fill="#c5e86e"/><path d="M441.2 658.9L449.2 651.5L444.4 658.9Z" fill="#b4e05c"/><path d="M435.5 654.7L441.2 643.4L438.7 654.7Z" fill="#d4ef84"/><path d="M436.7 654.8L448.9 645.4L439.9 654.8Z" fill="#c5e86e"/><path d="M435.9 656.6L431.1 647.6L439.1 656.6Z" fill="#c5e86e"/><path d="M502.7 657.1L495.3 651.5L505.9 657.1Z" fill="#c5e86e"/><path d="M502.2 656.1L510.4 643.3L505.4 656.1Z" fill="#d4ef84"/><path d="M503.9 656.7L502.2 645.3L507.1 656.7Z" fill="#c5e86e"/><path d="M506.2 654.8L500.6 642.6L509.4 654.8Z" fill="#d4ef84"/><path d="M503.3 656.4L505.5 647.3L506.5 656.4Z" fill="#b4e05c"/><path d="M570.2 656.2L570.7 644.9L573.4 656.2Z" fill="#b4e05c"/><path d="M571.3 658.3L575.4 648.4L574.5 658.3Z" fill="#b4e05c"/><path d="M565.9 655.1L557.1 647.1L569.1 655.1Z" fill="#c5e86e"/><path d="M570.0 654.9L563.5 648.4L573.2 654.9Z" fill="#b4e05c"/><path d="M569.8 658.9L562.8 653.9L573.0 658.9Z" fill="#d4ef84"/><path d="M607.5 658.9L608.2 647.5L610.7 658.9Z" fill="#b4e05c"/><path d="M604.0 657.1L604.0 644.4L607.2 657.1Z" fill="#d4ef84"/><path d="M606.6 655.1L601.7 649.3L609.8 655.1Z" fill="#b4e05c"/><path d="M608.2 657.1L601.4 647.3L611.4 657.1Z" fill="#d4ef84"/><path d="M606.5 655.9L601.5 647.7L609.7 655.9Z" fill="#d4ef84"/><path d="M666.4 659.4L665.4 645.8L669.6 659.4Z" fill="#d4ef84"/><path d="M667.6 657.7L662.7 648.2L670.8 657.7Z" fill="#b4e05c"/><path d="M664.7 657.8L673.3 646.5L667.9 657.8Z" fill="#b4e05c"/><path d="M669.0 659.0L666.4 650.2L672.2 659.0Z" fill="#d4ef84"/><path d="M666.5 659.3L658.6 649.8L669.7 659.3Z" fill="#d4ef84"/><path d="M84.5 612L85.5 632" stroke="#8a9a3a" stroke-width="1.3"/><path d="M109 614L104 636" stroke="#8a9a3a" stroke-width="1.3"/><path d="M106 624L103 642" stroke="#8a9a3a" stroke-width="1.3"/><path d="M320 629L322 646" stroke="#8a9a3a" stroke-width="1.3"/><path d="M446 615L450 636" stroke="#8a9a3a" stroke-width="1.3"/><path d="M427 617L436 638" stroke="#8a9a3a" stroke-width="1.3"/><path d="M687 627L692 646" stroke="#8a9a3a" stroke-width="1.3"/><ellipse cx="16.0" cy="618.0" rx="4.5" ry="2.6" fill="#f6d21a"/><ellipse cx="15.5" cy="617.4" rx="2.5" ry="1.3" fill="#fbe34a"/><ellipse cx="84.5" cy="611.6" rx="8" ry="3" fill="#f08c1c"/><ellipse cx="84.0" cy="610.9" rx="4.4" ry="1.5" fill="#f7a63a"/><ellipse cx="109.0" cy="613.0" rx="7.5" ry="3.2" fill="#f08c1c"/><ellipse cx="108.5" cy="612.2" rx="4.1" ry="1.6" fill="#f7a63a"/><ellipse cx="106.0" cy="622.0" rx="7.5" ry="4.5" fill="#f08c1c"/><ellipse cx="105.5" cy="620.9" rx="4.1" ry="2.2" fill="#f7a63a"/><ellipse cx="320.0" cy="628.0" rx="7" ry="3.5" fill="#f08c1c"/><ellipse cx="319.5" cy="627.1" rx="3.9" ry="1.8" fill="#f7a63a"/><ellipse cx="325.0" cy="640.0" rx="5" ry="5" fill="#f7a63a"/><ellipse cx="324.5" cy="638.8" rx="2.8" ry="2.5" fill="#fbb94f"/><ellipse cx="335.0" cy="637.0" rx="5" ry="5" fill="#f7a63a"/><ellipse cx="334.5" cy="635.8" rx="2.8" ry="2.5" fill="#fbb94f"/><ellipse cx="345.5" cy="635.6" rx="4" ry="4" fill="#f7a63a"/><ellipse cx="345.0" cy="634.6" rx="2.2" ry="2.0" fill="#fbb94f"/><ellipse cx="334.7" cy="650.0" rx="4.5" ry="4.2" fill="#f7a63a"/><ellipse cx="334.2" cy="649.0" rx="2.5" ry="2.1" fill="#fbb94f"/><ellipse cx="427.0" cy="615.0" rx="6" ry="5" fill="#f6d21a"/><ellipse cx="426.5" cy="613.8" rx="3.3" ry="2.5" fill="#fbe34a"/><ellipse cx="446.0" cy="613.7" rx="7" ry="5" fill="#f6d21a"/><ellipse cx="445.5" cy="612.5" rx="3.9" ry="2.5" fill="#fbe34a"/><ellipse cx="452.0" cy="608.0" rx="7" ry="2.5" fill="#f6d21a"/><ellipse cx="451.5" cy="607.4" rx="3.9" ry="1.2" fill="#fbe34a"/><ellipse cx="459.0" cy="622.5" rx="5" ry="3.5" fill="#f6d21a"/><ellipse cx="458.5" cy="621.6" rx="2.8" ry="1.8" fill="#fbe34a"/><ellipse cx="467.0" cy="643.0" rx="7" ry="6.5" fill="#f6d21a"/><ellipse cx="466.5" cy="641.4" rx="3.9" ry="3.2" fill="#fbe34a"/><ellipse cx="436.0" cy="648.0" rx="3.5" ry="4" fill="#e9c12a"/><ellipse cx="435.5" cy="647.0" rx="1.9" ry="2.0" fill="#f6d21a"/><ellipse cx="539.0" cy="636.0" rx="4.5" ry="4" fill="#f4c21f"/><ellipse cx="538.5" cy="635.0" rx="2.5" ry="2.0" fill="#fbe34a"/><ellipse cx="548.0" cy="638.0" rx="5" ry="5" fill="#f4c21f"/><ellipse cx="547.5" cy="636.8" rx="2.8" ry="2.5" fill="#fbe34a"/><ellipse cx="558.0" cy="639.0" rx="6" ry="5.5" fill="#f4c21f"/><ellipse cx="557.5" cy="637.6" rx="3.3" ry="2.8" fill="#fbe34a"/><ellipse cx="549.5" cy="650.0" rx="5" ry="4.5" fill="#f4c21f"/><ellipse cx="549.0" cy="648.9" rx="2.8" ry="2.2" fill="#fbe34a"/><ellipse cx="550.0" cy="627.0" rx="5" ry="3" fill="#eeb422"/><ellipse cx="549.5" cy="626.2" rx="2.8" ry="1.5" fill="#f6d21a"/><ellipse cx="679.5" cy="618.6" rx="5" ry="4" fill="#f6d21a"/><ellipse cx="679.0" cy="617.6" rx="2.8" ry="2.0" fill="#fbe34a"/><ellipse cx="687.0" cy="625.0" rx="6" ry="5" fill="#f6d21a"/><ellipse cx="686.5" cy="623.8" rx="3.3" ry="2.5" fill="#fbe34a"/><ellipse cx="697.0" cy="620.0" rx="5.5" ry="3.5" fill="#f6d21a"/><ellipse cx="696.5" cy="619.1" rx="3.0" ry="1.8" fill="#fbe34a"/><ellipse cx="705.0" cy="617.5" rx="4.5" ry="3" fill="#f6d21a"/><ellipse cx="704.5" cy="616.8" rx="2.5" ry="1.5" fill="#fbe34a"/><ellipse cx="701.0" cy="632.6" rx="5" ry="3.5" fill="#f6d21a"/><ellipse cx="700.5" cy="631.7" rx="2.8" ry="1.8" fill="#fbe34a"/><ellipse cx="697.0" cy="650.7" rx="7" ry="6.5" fill="#f6d21a"/><ellipse cx="696.5" cy="649.1" rx="3.9" ry="3.2" fill="#fbe34a"/><ellipse cx="667.0" cy="619.0" rx="4" ry="4" fill="#e9c12a"/><ellipse cx="666.5" cy="618.0" rx="2.2" ry="2.0" fill="#f6d21a"/></g></defs><rect x="0" y="660.0" width="1675" height="39.0" fill="url(#gwater)"/><g filter="url(#wblur)"><ellipse cx="60" cy="669.5" rx="17" ry="7" fill="#5aa06a" opacity="0.35"/><ellipse cx="110" cy="669.5" rx="22" ry="7" fill="#5aa06a" opacity="0.35"/><ellipse cx="230" cy="669.5" rx="19" ry="7" fill="#5aa06a" opacity="0.35"/><ellipse cx="330" cy="669.5" rx="22" ry="7" fill="#5aa06a" opacity="0.35"/><ellipse cx="450" cy="669.5" rx="23" ry="7" fill="#5aa06a" opacity="0.35"/><ellipse cx="560" cy="669.5" rx="15" ry="7" fill="#5aa06a" opacity="0.35"/><ellipse cx="640" cy="669.5" rx="14" ry="7" fill="#5aa06a" opacity="0.35"/><ellipse cx="690" cy="669.5" rx="26" ry="7" fill="#5aa06a" opacity="0.35"/><ellipse cx="770" cy="669.5" rx="18" ry="7" fill="#5aa06a" opacity="0.35"/><ellipse cx="820" cy="669.5" rx="17" ry="7" fill="#5aa06a" opacity="0.35"/><ellipse cx="940" cy="669.5" rx="28" ry="7" fill="#5aa06a" opacity="0.35"/><ellipse cx="1040" cy="669.5" rx="21" ry="7" fill="#5aa06a" opacity="0.35"/><ellipse cx="1160" cy="669.5" rx="26" ry="7" fill="#5aa06a" opacity="0.35"/><ellipse cx="1270" cy="669.5" rx="21" ry="7" fill="#5aa06a" opacity="0.35"/><ellipse cx="1350" cy="669.5" rx="23" ry="7" fill="#5aa06a" opacity="0.35"/><ellipse cx="1400" cy="669.5" rx="16" ry="7" fill="#5aa06a" opacity="0.35"/><ellipse cx="1480" cy="669.5" rx="23" ry="7" fill="#5aa06a" opacity="0.35"/><ellipse cx="1530" cy="669.5" rx="26" ry="7" fill="#5aa06a" opacity="0.35"/><ellipse cx="1650" cy="669.5" rx="21" ry="7" fill="#5aa06a" opacity="0.35"/><rect x="-20" y="658.5" width="1720" height="5" fill="#1f5a4a" opacity="0.8"/></g><g filter="url(#wglow)"><ellipse cx="503" cy="705" rx="108" ry="17" fill="#fff" opacity="0.85"/><ellipse cx="1213" cy="705" rx="108" ry="17" fill="#fff" opacity="0.85"/><ellipse cx="1923" cy="705" rx="108" ry="17" fill="#fff" opacity="0.85"/></g><g filter="url(#gblur)"><use href="#gtile"/><use href="#gtile" x="710"/><use href="#gtile" x="1420"/></g></svg>
</div>

<div class="pg" style="left:926px;width:32px"></div>
<div class="pg" style="left:963px;width:30px;background:#10a7a7"></div>
<div class="pg" style="left:1000px;width:30px"></div>
<div class="pg" style="left:1041px;width:98px"></div>
<svg class="abs" style="left:75px;top:636px;z-index:9" width="18" height="23" viewBox="0 0 18 23"><path d="M5.9 0.6 Q7.8 0.6 7.8 2.6 L7.8 7 Q10.6 5.6 10.8 8 Q13.4 7 13.6 9.4 Q16.4 8.8 16.5 11.6 L16.5 15 Q16.5 18 15 20 L15 21.6 L6 21.6 L6 20 Q4 17 1 12.6 Q0.3 11 1.5 10.3 Q3 9.7 4.4 12 L4.4 2.6 Q4.4 0.6 5.9 0.6 Z" fill="#fff" stroke="#111" stroke-width="1.1" stroke-linejoin="round"/><path d="M7.8 7 L7.8 10.5 M10.8 8 L10.8 10.8 M13.6 9.4 L13.6 11.4" stroke="#111" stroke-width="1"/></svg>
</body>
</html>
